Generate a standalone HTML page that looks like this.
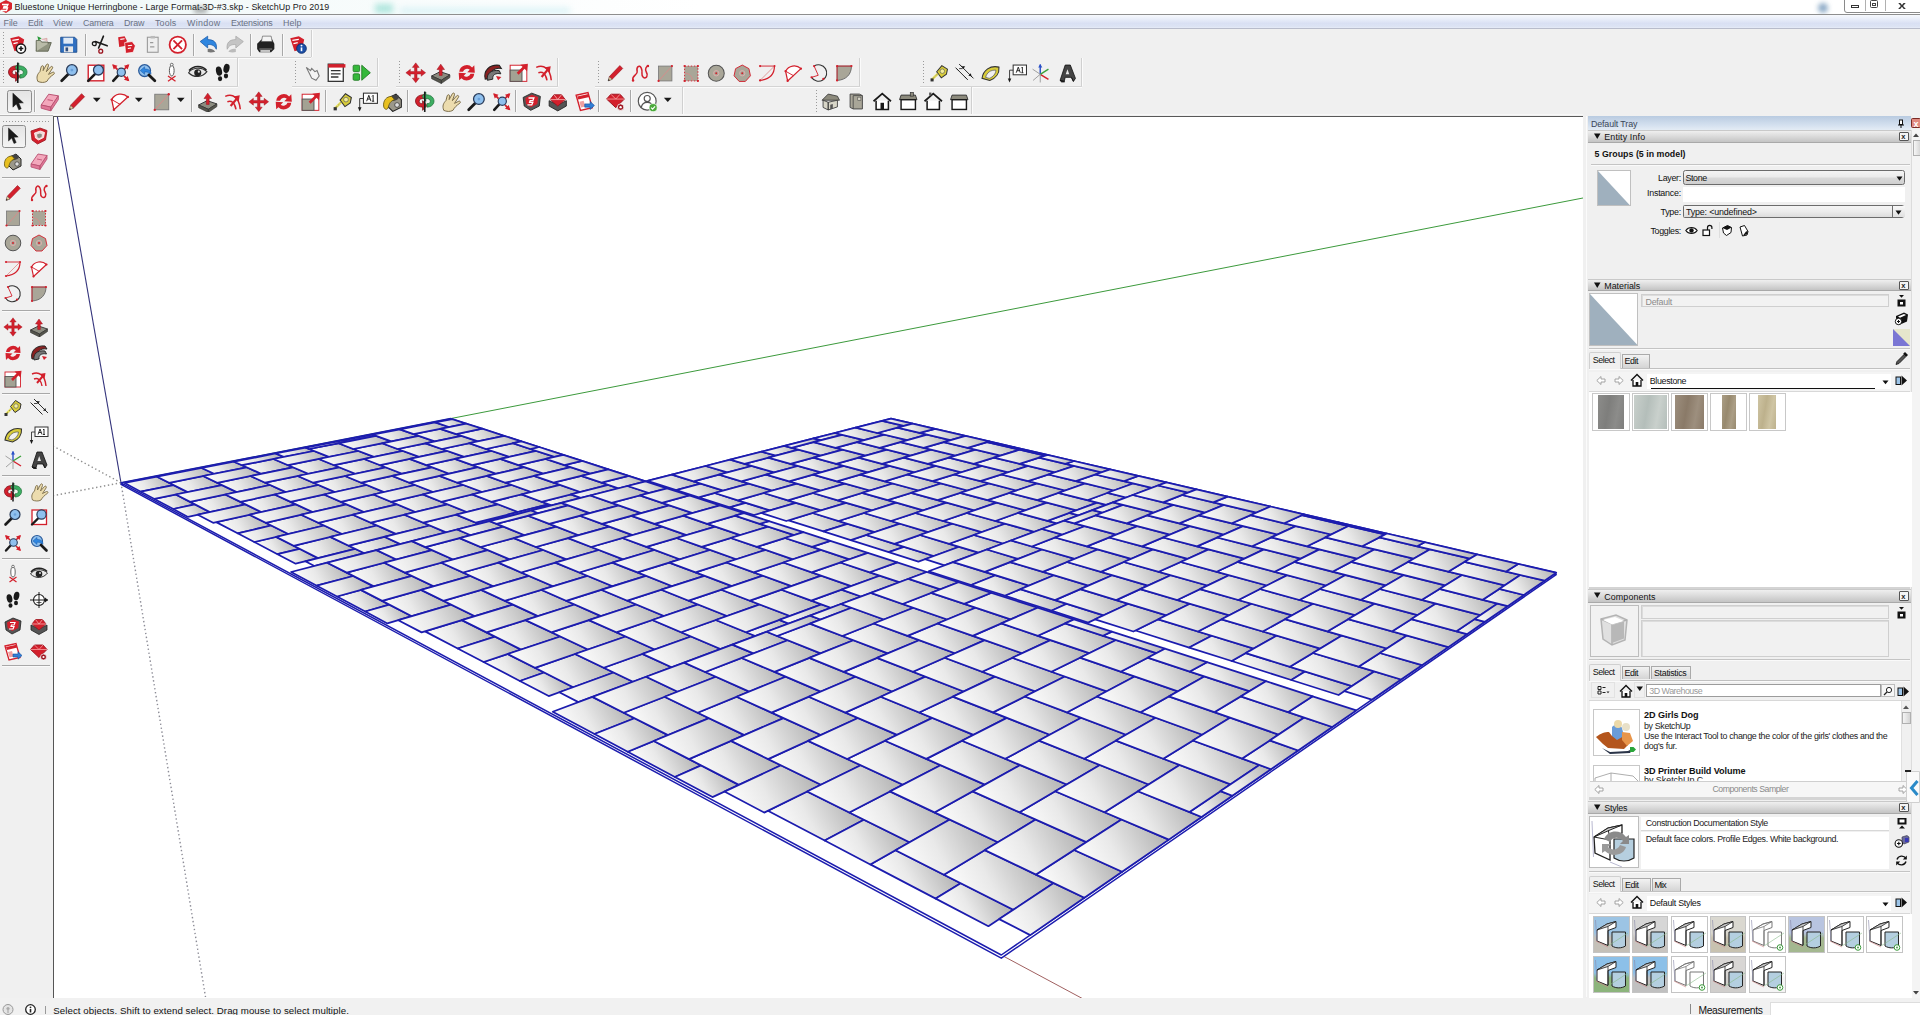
<!DOCTYPE html>
<html lang="en"><head><meta charset="utf-8"><title>Bluestone Unique Herringbone - SketchUp Pro 2019</title>
<style>html,body{margin:0;padding:0}
body{width:1920px;height:1015px;position:relative;overflow:hidden;background:#f0f0f0;font-family:"Liberation Sans",sans-serif}
#a{position:absolute;left:0;top:0;width:1920px;height:1015px;overflow:hidden}
#a div,#a span,#a svg.i{position:absolute}
#a span{white-space:pre;display:block}
</style></head>
<body><div id="a">
<div style="left:0px;top:0px;width:1920px;height:13.5px;background:linear-gradient(90deg,#eef8f8 0,#f6fbfb 300px,#fff 700px)"></div>
<svg class="i" style="left:0px;top:0px" width="12" height="13" viewBox="0 0 12 13"><path d="M0 3l6-3 6 3v6l-6 4-6-3z" fill="#d8242c"/><path d="M2 4.500h6l-1 2H4l-.5 1.500h4l-1 2.500H1" fill="none" stroke="#fff" stroke-width="1.300"/></svg>
<span style="left:14.60px;top:2.87px;font-size:8.9px;line-height:8.9px;color:#1a1a1a;letter-spacing:0.053px;">Bluestone Unique Herringbone - Large Format-3D-#3.skp - SketchUp Pro 2019</span>
<div style="left:375px;top:4px;width:18px;height:9px;background:#8fdcd0;filter:blur(3px);opacity:.7"></div>
<div style="left:400px;top:8px;width:170px;height:5px;background:#bfeaf0;filter:blur(3px);opacity:.6"></div>
<div style="left:194px;top:7px;width:13px;height:6px;background:#555;filter:blur(2.500px);opacity:.5"></div>
<div style="left:1818px;top:3px;width:10px;height:10px;background:#5f88b0;filter:blur(2.500px);opacity:.7;border-radius:5px"></div>
<div style="left:1844px;top:-4px;width:80px;height:15px;border:1px solid #8a8a8a;border-radius:3px;background:#fff"></div>
<div style="left:1865px;top:0px;width:1px;height:11px;background:#b0b0b0"></div>
<div style="left:1885px;top:0px;width:1px;height:11px;background:#b0b0b0"></div>
<div style="left:1851px;top:4.5px;width:8px;height:3px;border:1px solid #333;box-sizing:border-box"></div>
<div style="left:1870px;top:0px;width:8px;height:8px;border:1.300px solid #444;border-radius:1.500px;box-sizing:border-box"></div>
<div style="left:1872px;top:2.5px;width:3.5px;height:3.5px;border:1px solid #444;box-sizing:border-box"></div>
<span style="left:1899.00px;top:-0.51px;font-size:11px;line-height:11px;color:#333;font-weight:bold;transform:scaleX(1.300)">x</span>
<div style="left:0px;top:13.5px;width:1920px;height:1.2px;background:#8e8e8e"></div>
<div style="left:0px;top:14.7px;width:1920px;height:14px;background:linear-gradient(#f7f9fd 0,#e6ebf8 35%,#d9e0f3 60%,#dde4f4 85%,#f2f4fa 100%)"></div>
<div style="left:0px;top:28.3px;width:1920px;height:1px;background:#b8bccb"></div>
<span style="left:3.60px;top:18.57px;font-size:8.9px;line-height:8.9px;color:#6a7284;letter-spacing:-0.110px;">File</span>
<span style="left:28.00px;top:18.57px;font-size:8.9px;line-height:8.9px;color:#6a7284;letter-spacing:-0.084px;">Edit</span>
<span style="left:53.00px;top:18.57px;font-size:8.9px;line-height:8.9px;color:#6a7284;letter-spacing:0.093px;">View</span>
<span style="left:83.00px;top:18.57px;font-size:8.9px;line-height:8.9px;color:#6a7284;letter-spacing:-0.192px;">Camera</span>
<span style="left:124.00px;top:18.57px;font-size:8.9px;line-height:8.9px;color:#6a7284;letter-spacing:-0.067px;">Draw</span>
<span style="left:155.00px;top:18.57px;font-size:8.9px;line-height:8.9px;color:#6a7284;letter-spacing:0.145px;">Tools</span>
<span style="left:187.00px;top:18.57px;font-size:8.9px;line-height:8.9px;color:#6a7284;letter-spacing:0.308px;">Window</span>
<span style="left:231.00px;top:18.57px;font-size:8.9px;line-height:8.9px;color:#6a7284;letter-spacing:-0.203px;">Extensions</span>
<span style="left:283.00px;top:18.57px;font-size:8.9px;line-height:8.9px;color:#6a7284;letter-spacing:0.049px;">Help</span>
<div style="left:0px;top:29.3px;width:1920px;height:87px;background:#f0f0f0"></div>
<div style="left:3px;top:32px;width:1px;height:23px;background:repeating-linear-gradient(#9a9a9a 0 1px,transparent 1px 3px)"></div>
<svg class="i" style="left:7.2px;top:33.8px;" width="21.5" height="21.5" viewBox="0 0 20 20"><path d="M3 4l8-2 5 3-2 9-7 2z" fill="#d3202c"/><path d="M5 6l6-1M6 9l4-1" stroke="#fff" stroke-width="1.2"/><circle cx="13" cy="13.5" r="4.3" fill="#fff" stroke="#1a1a1a" stroke-width="1.4"/><path d="M10.8 13.5h4.4M13 11.3v4.4" stroke="#1a1a1a" stroke-width="1.5"/></svg>
<svg class="i" style="left:33.2px;top:33.8px;" width="21.5" height="21.5" viewBox="0 0 20 20"><path d="M3 16l2-8h12l-3 8z" fill="#8f937f" stroke="#5a5e4c" stroke-width=".8"/><path d="M3 16V6h4l1 1.5h6V9" fill="#b9bba8" stroke="#5a5e4c" stroke-width=".8"/><path d="M4 2l4 2-3 2z" fill="#2a9a3a"/><path d="M8 5l5-1v3" fill="#e9c9c9" stroke="#c88" stroke-width=".5"/></svg>
<svg class="i" style="left:58.2px;top:33.8px;" width="21.5" height="21.5" viewBox="0 0 20 20"><path d="M2.5 3h13l2 2v12h-15z" fill="#2f6fc0" stroke="#1c4a8a" stroke-width=".8"/><rect x="5" y="3.5" width="9" height="5.5" fill="#dfe9f5"/><rect x="5.5" y="11.5" width="8.5" height="5.5" fill="#e8e8e8"/><rect x="7" y="12.5" width="2.4" height="3.6" fill="#2f4f80"/></svg>
<svg class="i" style="left:90.2px;top:33.8px;" width="21.5" height="21.5" viewBox="0 0 20 20"><path d="M12.5 2L8 13M5 7l11 4" stroke="#1a1a1a" stroke-width="1.5" stroke-linecap="round"/><circle cx="4" cy="9" r="1.8" fill="none" stroke="#1a1a1a" stroke-width="1.2"/><circle cx="10" cy="16" r="1.8" fill="none" stroke="#9c1520" stroke-width="1.2"/></svg>
<svg class="i" style="left:116.2px;top:33.8px;" width="21.5" height="21.5" viewBox="0 0 20 20"><path d="M2 3l6-1 2 4-1 5-6 1z" fill="#d3202c"/><path d="M8 8l7-1 3 4-2 6-7 1z" fill="#d3202c" stroke="#fff" stroke-width=".6"/><path d="M4 5l4-.6M11 11l4-.6M11 13.5l3-.5" stroke="#fff" stroke-width="1"/></svg>
<svg class="i" style="left:141.8px;top:33.8px;" width="21.5" height="21.5" viewBox="0 0 20 20"><rect x="5" y="3" width="10" height="14" fill="#eee" stroke="#999" stroke-width="1"/><rect x="8" y="1.8" width="4" height="2.4" fill="#bbb"/><path d="M7.5 8h3M7.5 12h4" stroke="#999" stroke-width="1"/></svg>
<svg class="i" style="left:167.2px;top:33.8px;" width="21.5" height="21.5" viewBox="0 0 20 20"><circle cx="10" cy="10" r="7.6" fill="#fff" stroke="#d3202c" stroke-width="1.7"/><path d="M6 6l8 8M14 6l-8 8" stroke="#d3202c" stroke-width="1.7"/></svg>
<svg class="i" style="left:198.2px;top:33.8px;" width="21.5" height="21.5" viewBox="0 0 20 20"><path d="M2 7l7-5v3.2c6 0 9 3 8 9-1.5-3.5-4-4.6-8-4.4V13z" fill="#2f86e0" stroke="#1a5aa8" stroke-width=".7"/><path d="M9 14c2.5-.6 5-.2 7 2.5-2.5.8-5 .8-7 .3z" fill="#777"/></svg>
<svg class="i" style="left:224.2px;top:33.8px;" width="21.5" height="21.5" viewBox="0 0 20 20"><path d="M18 7l-7-5v3.2c-6 0-9 3-8 9 1.500-3.500 4-4.600 8-4.400V13z" fill="#c4c4c4" stroke="#a8a8a8" stroke-width=".7"/><path d="M11 14c-2.500-.6-5-.2-7 2.500 2.500.8 5 .8 7 .3z" fill="#bbb"/></svg>
<svg class="i" style="left:255.2px;top:33.8px;" width="21.5" height="21.5" viewBox="0 0 20 20"><path d="M2 9l4-4h10l2 4v5l-3 3H4l-2-3z" fill="#222"/><path d="M7 2h8l1 5H6z" fill="#f4f4f4" stroke="#555" stroke-width=".6"/><path d="M4 14h12" stroke="#888" stroke-width="1"/><rect x="5" y="15" width="9" height="1.6" fill="#ddd"/></svg>
<svg class="i" style="left:287.2px;top:33.8px;" width="21.5" height="21.5" viewBox="0 0 20 20"><path d="M3 4l8-2 5 3-2 9-7 2z" fill="#d3202c"/><path d="M5 6l6-1M6 9l4-1" stroke="#fff" stroke-width="1.2"/><circle cx="13.500" cy="13.500" r="4.500" fill="#1b4fa8" stroke="#0c2c6a" stroke-width=".8"/><path d="M13.500 12.500v3.500" stroke="#fff" stroke-width="1.500"/><circle cx="13.500" cy="10.800" r=".9" fill="#fff"/></svg>
<div style="left:84.5px;top:33.5px;width:1px;height:22px;background:#a8a8a8"></div>
<div style="left:85.5px;top:33.5px;width:1px;height:22px;background:#fafafa"></div>
<div style="left:193px;top:33.5px;width:1px;height:22px;background:#a8a8a8"></div>
<div style="left:194px;top:33.5px;width:1px;height:22px;background:#fafafa"></div>
<div style="left:250px;top:33.5px;width:1px;height:22px;background:#a8a8a8"></div>
<div style="left:251px;top:33.5px;width:1px;height:22px;background:#fafafa"></div>
<div style="left:281.5px;top:33.5px;width:1px;height:22px;background:#a8a8a8"></div>
<div style="left:282.5px;top:33.5px;width:1px;height:22px;background:#fafafa"></div>
<div style="left:310.5px;top:30px;width:1px;height:27px;background:#d0d0d0"></div>
<div style="left:311.5px;top:30px;width:1px;height:27px;background:#fbfbfb"></div>
<div style="left:0px;top:56.5px;width:311px;height:1px;background:#d4d4d4"></div>
<div style="left:0px;top:57.5px;width:311px;height:1px;background:#fbfbfb"></div>
<div style="left:3px;top:61px;width:1px;height:23px;background:repeating-linear-gradient(#9a9a9a 0 1px,transparent 1px 3px)"></div>
<svg class="i" style="left:7.2px;top:62.0px;" width="21.5" height="21.5" viewBox="0 0 20 20"><path d="M9 3.500C3.500 3.500.8 7 1.500 10.500c.7 3 3.500 4.500 6.500 4.500v3l4-4.500L8 9v2.800c-1.800 0-3.200-.6-3.200-2.300S6.500 7 9 7z" fill="#d3202c" stroke="#7a0f18" stroke-width=".7"/><path d="M11 3.500c5.500 0 8.200 3.500 7.500 7-.7 3-3.500 4.500-6.500 4.500v-3.200c1.800 0 3.200-.6 3.200-2.300S13.500 7 11 7v2.500L7.500 5 11 1z" fill="#3cae62" stroke="#1f7038" stroke-width=".7"/><path d="M10 .5v19" stroke="#1a1a1a" stroke-width="1.500"/></svg>
<svg class="i" style="left:34.2px;top:62.0px;" width="21.5" height="21.5" viewBox="0 0 20 20"><path d="M3.500 18c-1.500-4-.5-6.500 2-9l1.200-4.500c.5-1.600 2.300-1.200 2.200.3L8.500 8l3-5.500c.8-1.300 2.500-.5 2 1L11.500 9l4-4.500c1-1 2.400 0 1.700 1.300L13.500 11.500l4-2c1.200-.5 2 1 1 1.800-3 2-5 4-6.500 6.700-2.500 1.500-6 1.200-8.500 0z" fill="#ecdcae" stroke="#7a6c48" stroke-width=".9" stroke-linejoin="round"/></svg>
<svg class="i" style="left:59.2px;top:62.0px;" width="21.5" height="21.5" viewBox="0 0 20 20"><path d="M8.500 11.500L2.500 17.500" stroke="#1a1a1a" stroke-width="2.600" stroke-linecap="round"/><circle cx="12" cy="7.500" r="5" fill="#8fc0ee" stroke="#2a3c5a" stroke-width="1.200"/><circle cx="12" cy="7.500" r="1.300" fill="#6aa0da"/></svg>
<svg class="i" style="left:84.8px;top:62.0px;" width="21.5" height="21.5" viewBox="0 0 20 20"><rect x="3" y="3" width="14.500" height="14.500" fill="#fff" stroke="#d3202c" stroke-width="1.300"/><path d="M9 11.500L3 17.500" stroke="#1a1a1a" stroke-width="2.400" stroke-linecap="round"/><circle cx="12.500" cy="7.500" r="4.600" fill="#8fc0ee" stroke="#2a3c5a" stroke-width="1.200"/></svg>
<svg class="i" style="left:110.2px;top:62.0px;" width="21.5" height="21.5" viewBox="0 0 20 20"><path d="M2 2l5 1.500L3.500 7zM18 2l-1.500 5L13 3.500zM18 18l-5-1.500 3.500-3.500zM2 18" fill="#d3202c"/><path d="M3 3l4 4M17 3l-4 4M17 17l-4-4" stroke="#d3202c" stroke-width="1.600"/><path d="M8.500 11.500L3 17.500" stroke="#1a1a1a" stroke-width="2.400" stroke-linecap="round"/><circle cx="10.500" cy="9.500" r="3.800" fill="#8fc0ee" stroke="#2a3c5a" stroke-width="1.100"/></svg>
<svg class="i" style="left:135.8px;top:62.0px;" width="21.5" height="21.5" viewBox="0 0 20 20"><circle cx="8" cy="8" r="5.500" fill="#8fc0ee" stroke="#2a5a9a" stroke-width="1.200"/><path d="M4 8l4-3.500v2c4 0 6 1.500 6 5-1.500-1.800-3-2.400-6-2.300v2.300z" fill="#2f86e0" stroke="#1a5aa8" stroke-width=".5"/><path d="M12 12l5.500 5.500" stroke="#1a1a1a" stroke-width="2.600" stroke-linecap="round"/></svg>
<svg class="i" style="left:161.2px;top:62.0px;" width="21.5" height="21.5" viewBox="0 0 20 20"><ellipse cx="10" cy="8" rx="2.200" ry="5" fill="#fff" stroke="#555" stroke-width=".9"/><circle cx="10" cy="2.500" r="1.300" fill="#fff" stroke="#555" stroke-width=".8"/><path d="M6.500 13l7 5M13.500 13l-7 5" stroke="#d3202c" stroke-width="1.200"/></svg>
<svg class="i" style="left:187.2px;top:62.0px;" width="21.5" height="21.5" viewBox="0 0 20 20"><path d="M1.500 10c3-5 12-6 17-1-4 5.500-12 6-17 1z" fill="#e8e8e8" stroke="#333" stroke-width="1"/><path d="M2 8c4-5 12-5 16-.5" fill="none" stroke="#222" stroke-width="1.600"/><circle cx="10" cy="10" r="3.300" fill="#222"/><circle cx="11" cy="9" r="1" fill="#ddd"/></svg>
<svg class="i" style="left:212.2px;top:62.0px;" width="21.5" height="21.5" viewBox="0 0 20 20"><ellipse cx="6.500" cy="8.500" rx="2.800" ry="4.300" fill="#1a1a1a" transform="rotate(-12 6.500 8.500)"/><ellipse cx="7.500" cy="15.500" rx="2" ry="2.300" fill="#1a1a1a"/><ellipse cx="13.500" cy="6" rx="2.800" ry="4.300" fill="#1a1a1a" transform="rotate(12 13.500 6)"/><ellipse cx="13" cy="13" rx="2" ry="2.300" fill="#1a1a1a"/></svg>
<div style="left:237px;top:58px;width:1px;height:28px;background:#d0d0d0"></div>
<div style="left:238px;top:58px;width:1px;height:28px;background:#fbfbfb"></div>
<div style="left:0px;top:85.5px;width:238px;height:1px;background:#d4d4d4"></div>
<div style="left:0px;top:86.5px;width:238px;height:1px;background:#fbfbfb"></div>
<div style="left:295px;top:61px;width:1px;height:23px;background:repeating-linear-gradient(#9a9a9a 0 1px,transparent 1px 3px)"></div>
<svg class="i" style="left:302.2px;top:62.0px;" width="21.5" height="21.5" viewBox="0 0 20 20"><path d="M4 5l4 3 1-2 3 3 2-1 2 5-3 4-4-2-2-4z" fill="#f4f4f4" stroke="#777" stroke-width="1"/></svg>
<svg class="i" style="left:325.2px;top:62.0px;" width="21.5" height="21.5" viewBox="0 0 20 20"><rect x="3" y="2" width="14" height="16" fill="#fff" stroke="#333" stroke-width="1.200"/><rect x="3" y="2" width="16" height="3.200" fill="#d3202c"/><path d="M5.500 8h9M5.500 11h9M5.500 14h7" stroke="#333" stroke-width="1.300"/></svg>
<svg class="i" style="left:351.2px;top:62.0px;" width="21.5" height="21.5" viewBox="0 0 20 20"><rect x="2" y="3" width="6" height="6" rx="1" fill="#35b83a" stroke="#1f7a22" stroke-width=".8"/><rect x="2" y="11" width="6" height="6" rx="1" fill="#35b83a" stroke="#1f7a22" stroke-width=".8"/><path d="M10 3l8 7-8 7z" fill="#35b83a" stroke="#1f7a22" stroke-width=".8"/></svg>
<div style="left:377px;top:58px;width:1px;height:28px;background:#d0d0d0"></div>
<div style="left:378px;top:58px;width:1px;height:28px;background:#fbfbfb"></div>
<div style="left:292px;top:85.5px;width:86px;height:1px;background:#d4d4d4"></div>
<div style="left:292px;top:86.5px;width:86px;height:1px;background:#fbfbfb"></div>
<div style="left:399px;top:61px;width:1px;height:23px;background:repeating-linear-gradient(#9a9a9a 0 1px,transparent 1px 3px)"></div>
<svg class="i" style="left:404.9px;top:62.0px;" width="21.5" height="21.5" viewBox="0 0 20 20"><path d="M10 .8l3.200 4.200h-2v3.800h3.800v-2l4.200 3.200-4.200 3.200v-2h-3.800v3.800h2L10 19.200l-3.200-4.200h2v-3.800H5v2L.8 10 5 6.800v2h3.800V5h-2z" fill="#d3202c" stroke="#9c1520" stroke-width=".4"/></svg>
<svg class="i" style="left:430.2px;top:62.0px;" width="21.5" height="21.5" viewBox="0 0 20 20"><path d="M1.500 13l8-4 9 3-8 5z" fill="#8c8c80" stroke="#333" stroke-width=".9"/><path d="M1.500 13v2.500l9 4.500v-3zM10.500 17v3l8-5.500V12z" fill="#55554c" stroke="#333" stroke-width=".6"/><path d="M10 2l3.500 5h-2.200v5.500H8.700V7H6.500z" fill="#d3202c" stroke="#9c1520" stroke-width=".5"/></svg>
<svg class="i" style="left:456.2px;top:62.0px;" width="21.5" height="21.5" viewBox="0 0 20 20"><path d="M3 9a7 7 0 0 1 12-4l2-2 .5 7-7-.5 2.300-2.300A4 4 0 0 0 6.500 9z" fill="#d3202c"/><path d="M17 11a7 7 0 0 1-12 4l-2 2-.5-7 7 .5-2.300 2.300a4 4 0 0 0 6.300-1.800z" fill="#d3202c"/></svg>
<svg class="i" style="left:482.2px;top:62.0px;" width="21.5" height="21.5" viewBox="0 0 20 20"><path d="M3 16C1 8 7 2 16 3l2 3c-6-1-11 2-10 9z" fill="#8a2020" stroke="#222" stroke-width="1"/><path d="M5 17c-1-6 3-10 11-9l1.500 3c-5-1-8 1-7.500 5z" fill="#777" stroke="#222" stroke-width=".9"/><path d="M13 13l5 1-3 3z" fill="#d3202c"/></svg>
<svg class="i" style="left:507.8px;top:62.0px;" width="21.5" height="21.5" viewBox="0 0 20 20"><rect x="2" y="3" width="15.500" height="15" fill="#fff" stroke="#d3202c" stroke-width=".9"/><rect x="2" y="7.500" width="11" height="10.500" fill="#a3a293" stroke="#555" stroke-width=".9"/><path d="M9 11l6.500-6.500" stroke="#d3202c" stroke-width="2.600"/><path d="M11.500 2.500l7-.8-.8 7z" fill="#d3202c"/></svg>
<svg class="i" style="left:533.2px;top:62.0px;" width="21.5" height="21.5" viewBox="0 0 20 20"><path d="M3 5c7-3 13 1 14 12" fill="none" stroke="#d3202c" stroke-width="1.400"/><path d="M5 10c4-1.500 7 1 8 7" fill="none" stroke="#d3202c" stroke-width="1.400"/><path d="M8 14l5.500-6.500" stroke="#d3202c" stroke-width="2"/><path d="M10.500 5l6-1-1 6z" fill="#d3202c"/></svg>
<div style="left:557px;top:58px;width:1px;height:28px;background:#d0d0d0"></div>
<div style="left:558px;top:58px;width:1px;height:28px;background:#fbfbfb"></div>
<div style="left:396px;top:85.5px;width:162px;height:1px;background:#d4d4d4"></div>
<div style="left:396px;top:86.5px;width:162px;height:1px;background:#fbfbfb"></div>
<div style="left:598px;top:61px;width:1px;height:23px;background:repeating-linear-gradient(#9a9a9a 0 1px,transparent 1px 3px)"></div>
<svg class="i" style="left:604.5px;top:62.5px;" width="20.5" height="20.5" viewBox="0 0 20 20"><path d="M3.500 17l1-4L14.500 2.500l2.800 2.800L7 15.800z" fill="#d3202c" stroke="#9c1520" stroke-width=".6"/><path d="M3 17.500l1.300-4.200 2.700 2.700z" fill="#e8d0a0" stroke="#555" stroke-width=".5"/><path d="M3 17.500l.6-1.800 1.200 1.200z" fill="#222"/></svg>
<svg class="i" style="left:629.8px;top:62.5px;" width="20.5" height="20.5" viewBox="0 0 20 20"><path d="M3 17c-2-5 5-5 4-9S9 1 11 5s-1 7 2 9 5-2 3-5 0-6 2-6" fill="none" stroke="#d3202c" stroke-width="1.500"/><circle cx="3" cy="17" r="1.200" fill="#d3202c"/><circle cx="17.500" cy="3" r="1.200" fill="#d3202c"/></svg>
<svg class="i" style="left:654.8px;top:62.5px;" width="20.5" height="20.5" viewBox="0 0 20 20"><rect x="3.500" y="3" width="13" height="14.500" fill="#a9a698" stroke="#777" stroke-width=".8"/><path d="M3.500 17.500L16.500 3" stroke="#d88" stroke-width=".8"/><circle cx="3.500" cy="17.500" r="1.100" fill="#d3202c"/><circle cx="16.500" cy="3" r="1.100" fill="#d3202c"/></svg>
<svg class="i" style="left:680.8px;top:62.5px;" width="20.5" height="20.5" viewBox="0 0 20 20"><rect x="3.500" y="3" width="13" height="14.500" fill="#a9a698" stroke="#d3202c" stroke-width=".9" stroke-dasharray="1.500 1.500"/><path d="M4 10c4 0 7 3 7 7" fill="none" stroke="#d88" stroke-width=".8"/><circle cx="3.500" cy="17.500" r="1.100" fill="#d3202c"/><circle cx="16.500" cy="3" r="1.100" fill="#d3202c"/><circle cx="3.500" cy="3" r="1.100" fill="#d3202c"/><circle cx="16.500" cy="17.500" r="1.100" fill="#d3202c"/></svg>
<svg class="i" style="left:705.8px;top:62.5px;" width="20.5" height="20.5" viewBox="0 0 20 20"><circle cx="10" cy="10" r="7.800" fill="#a9a698" stroke="#555" stroke-width="1"/><circle cx="10" cy="10" r="2.600" fill="none" stroke="#e8b0b0" stroke-width=".8"/><circle cx="10" cy="10" r="1" fill="#d3202c"/></svg>
<svg class="i" style="left:731.5px;top:62.5px;" width="20.5" height="20.5" viewBox="0 0 20 20"><path d="M10 2l6.500 3.500 1.500 7-5 5.500H7L2 12.500l1.500-7z" fill="#a9a698" stroke="#d3202c" stroke-width=".9"/><circle cx="10" cy="10" r="2.600" fill="none" stroke="#e8b0b0" stroke-width=".8"/><circle cx="10" cy="10" r="1" fill="#d3202c"/></svg>
<svg class="i" style="left:756.8px;top:62.5px;" width="20.5" height="20.5" viewBox="0 0 20 20"><path d="M3 3h13" stroke="#d3202c" stroke-width=".9"/><path d="M17 3c0 8-5 13-14 14" fill="none" stroke="#d3202c" stroke-width="1.200"/><path d="M3 17L17 3" stroke="#d88" stroke-width=".8"/><circle cx="3" cy="17" r="1.100" fill="#d3202c"/><circle cx="17" cy="3" r="1.100" fill="#d3202c"/><circle cx="3" cy="3" r="1.100" fill="#d3202c"/></svg>
<svg class="i" style="left:782.8px;top:62.5px;" width="20.5" height="20.5" viewBox="0 0 20 20"><path d="M4.500 17.500L2.500 8A9.500 9.500 0 0 1 17.500 5.500z" fill="#fff" stroke="#d3202c" stroke-width="1.200" stroke-linejoin="round"/><path d="M2.500 8l8 4.500" fill="none" stroke="#d3202c" stroke-width=".9"/><circle cx="4.500" cy="17.500" r="1.100" fill="#d3202c"/><circle cx="17.500" cy="5.500" r="1.100" fill="#d3202c"/><circle cx="2.500" cy="8" r="1.100" fill="#d3202c"/></svg>
<svg class="i" style="left:808.8px;top:62.5px;" width="20.5" height="20.5" viewBox="0 0 20 20"><path d="M5 3a8 8 0 1 1-2.500 11" fill="none" stroke="#333" stroke-width="1.100"/><path d="M5 3l4 9-6.500 2" fill="none" stroke="#d3202c" stroke-width=".9"/><circle cx="5" cy="3" r="1.100" fill="#d3202c"/><circle cx="2.500" cy="14" r="1.100" fill="#d3202c"/><circle cx="14" cy="15.500" r="1.100" fill="#d3202c"/></svg>
<svg class="i" style="left:833.8px;top:62.5px;" width="20.5" height="20.5" viewBox="0 0 20 20"><path d="M3 3h14c0 8-5 13.500-14 14z" fill="#a9a698" stroke="#666" stroke-width=".9"/><path d="M3 3h14M3 3v14" stroke="#d3202c" stroke-width=".8"/><circle cx="3" cy="3" r="1.100" fill="#d3202c"/><circle cx="17" cy="3" r="1.100" fill="#d3202c"/><circle cx="3" cy="17" r="1.100" fill="#d3202c"/></svg>
<div style="left:859px;top:58px;width:1px;height:28px;background:#d0d0d0"></div>
<div style="left:860px;top:58px;width:1px;height:28px;background:#fbfbfb"></div>
<div style="left:595px;top:85.5px;width:265px;height:1px;background:#d4d4d4"></div>
<div style="left:595px;top:86.5px;width:265px;height:1px;background:#fbfbfb"></div>
<div style="left:922.6px;top:61px;width:1px;height:23px;background:repeating-linear-gradient(#9a9a9a 0 1px,transparent 1px 3px)"></div>
<svg class="i" style="left:928.8px;top:62.5px;" width="20.5" height="20.5" viewBox="0 0 20 20"><path d="M7.500 8.500l5-6 5.500 3.500-1 5-5 3.500z" fill="#d8cc3a" stroke="#333" stroke-width="1"/><circle cx="13" cy="8" r="2.200" fill="#f4ee9a" stroke="#555" stroke-width=".6"/><path d="M8.500 10.500L3 16" stroke="#e8e060" stroke-width="2.400"/><path d="M8.500 10.500L3 16" stroke="#333" stroke-width=".6" stroke-dasharray="1 1.500"/><rect x="1.500" y="15" width="3" height="3" fill="#333"/></svg>
<svg class="i" style="left:954.4px;top:62.5px;" width="20.5" height="20.5" viewBox="0 0 20 20"><path d="M3 6l9 9M6.500 2.500l11 11" stroke="#1a1a1a" stroke-width=".9"/><path d="M5 1l3 3M16 12l3 3M1.500 4.500l3 3M10.500 13.500l3 3" stroke="#1a1a1a" stroke-width=".9"/><path d="M8 3l3 .5-2.500 2.500zM17 13l-3-.5 2.500-2.500z" fill="#1a1a1a"/><path d="M5 5.500h3" stroke="#1a1a1a" stroke-width=".8"/></svg>
<svg class="i" style="left:979.8px;top:62.5px;" width="20.5" height="20.5" viewBox="0 0 20 20"><path d="M2 15C3 7 10 2 18.500 4c.5 6-3 11-9 13z" fill="#d8cc3a" stroke="#333" stroke-width="1.100"/><path d="M5.500 14c1-4.500 5-7.500 10-7-.2 3.500-2.500 6.500-6.500 8z" fill="#f0f0f0" stroke="#555" stroke-width=".7"/></svg>
<svg class="i" style="left:1006.8px;top:62.5px;" width="20.5" height="20.5" viewBox="0 0 20 20"><rect x="6" y="2" width="13" height="9.500" fill="#fff" stroke="#333" stroke-width="1"/><path d="M6 7H2.500v9" fill="none" stroke="#333" stroke-width=".9"/><path d="M.8 15h3.400L2.500 19z" fill="#1a1a1a"/><path d="M9 9.500l2-5.500 2 5.500M9.800 7.500h2.400M15 9.500V4l-1 1M14 9.500h2" fill="none" stroke="#1a1a1a" stroke-width=".9"/></svg>
<svg class="i" style="left:1030.2px;top:62.5px;" width="20.5" height="20.5" viewBox="0 0 20 20"><path d="M10 11V1.500" stroke="#2a50c8" stroke-width="1.400"/><path d="M10 1l2 3.500h-4z" fill="#2a50c8"/><path d="M10 11l8 5" stroke="#d3202c" stroke-width="1.400"/><path d="M10 11l8-5" stroke="#3aa03a" stroke-width="1.400"/><path d="M10 11L2.500 6M10 11l-7 6M10 11v8" stroke="#999" stroke-width=".9"/></svg>
<svg class="i" style="left:1057.2px;top:62.5px;" width="20.5" height="20.5" viewBox="0 0 20 20"><path d="M3 17L8 2h5l5 13-2 3-2-4H8l-1 4z" fill="#444" stroke="#111" stroke-width=".8"/><path d="M8.500 11l1.700-5 1.800 5z" fill="#e8e8e8"/><path d="M3 17l1.500 1.500h3L7 18zM14 14l2 4" stroke="#111" stroke-width=".8" fill="#222"/></svg>
<div style="left:1081px;top:58px;width:1px;height:28px;background:#d0d0d0"></div>
<div style="left:1082px;top:58px;width:1px;height:28px;background:#fbfbfb"></div>
<div style="left:920px;top:85.5px;width:162px;height:1px;background:#d4d4d4"></div>
<div style="left:920px;top:86.5px;width:162px;height:1px;background:#fbfbfb"></div>
<div style="left:6.5px;top:89.5px;width:25.5px;height:23px;border:1px solid #8c8c8c;border-radius:2.500px;background:linear-gradient(#e4e4e4,#f4f4f4);box-sizing:border-box"></div>
<svg class="i" style="left:7.2px;top:90.5px;" width="21.5" height="21.5" viewBox="0 0 20 20"><path d="M5.500 2v13l3.200-3 2.300 5.500 2.200-1-2.300-5.300 4.300-.2z" fill="#1a1a1a" stroke="#1a1a1a" stroke-width=".5" stroke-linejoin="round"/></svg>
<svg class="i" style="left:39.2px;top:90.5px;" width="21.5" height="21.5" viewBox="0 0 20 20"><path d="M2 13L9 3l9 1.500L11 15z" fill="#f3a8bc" stroke="#b85070" stroke-width=".9"/><path d="M2 13v3l9 2.500V15zM11 15v3.500l7-10.500V4.500z" fill="#e07898" stroke="#b85070" stroke-width=".8"/><path d="M8 8l5 1" stroke="#c86080" stroke-width="1"/></svg>
<svg class="i" style="left:66.2px;top:90.5px;" width="21.5" height="21.5" viewBox="0 0 20 20"><path d="M3.500 17l1-4L14.500 2.500l2.800 2.800L7 15.800z" fill="#d3202c" stroke="#9c1520" stroke-width=".6"/><path d="M3 17.500l1.300-4.200 2.700 2.700z" fill="#e8d0a0" stroke="#555" stroke-width=".5"/><path d="M3 17.500l.6-1.800 1.200 1.200z" fill="#222"/></svg>
<svg class="i" style="left:88.8px;top:91.5px;" width="15.5" height="15.5" viewBox="0 0 20 20"><path d="M5 7.500h10l-5 5.500z" fill="#1a1a1a"/></svg>
<svg class="i" style="left:109.2px;top:90.5px;" width="21.5" height="21.5" viewBox="0 0 20 20"><path d="M4.500 17.500L2.500 8A9.500 9.500 0 0 1 17.500 5.500z" fill="#fff" stroke="#d3202c" stroke-width="1.200" stroke-linejoin="round"/><path d="M2.500 8l8 4.500" fill="none" stroke="#d3202c" stroke-width=".9"/><circle cx="4.500" cy="17.500" r="1.100" fill="#d3202c"/><circle cx="17.500" cy="5.500" r="1.100" fill="#d3202c"/><circle cx="2.500" cy="8" r="1.100" fill="#d3202c"/></svg>
<svg class="i" style="left:131.2px;top:91.5px;" width="15.5" height="15.5" viewBox="0 0 20 20"><path d="M5 7.500h10l-5 5.500z" fill="#1a1a1a"/></svg>
<svg class="i" style="left:150.8px;top:90.5px;" width="21.5" height="21.5" viewBox="0 0 20 20"><rect x="3.500" y="3" width="13" height="14.500" fill="#a9a698" stroke="#777" stroke-width=".8"/><path d="M3.500 17.500L16.500 3" stroke="#d88" stroke-width=".8"/><circle cx="3.500" cy="17.500" r="1.100" fill="#d3202c"/><circle cx="16.500" cy="3" r="1.100" fill="#d3202c"/></svg>
<svg class="i" style="left:173.2px;top:91.5px;" width="15.5" height="15.5" viewBox="0 0 20 20"><path d="M5 7.500h10l-5 5.500z" fill="#1a1a1a"/></svg>
<svg class="i" style="left:197.2px;top:90.5px;" width="21.5" height="21.5" viewBox="0 0 20 20"><path d="M1.500 13l8-4 9 3-8 5z" fill="#8c8c80" stroke="#333" stroke-width=".9"/><path d="M1.500 13v2.500l9 4.500v-3zM10.500 17v3l8-5.500V12z" fill="#55554c" stroke="#333" stroke-width=".6"/><path d="M10 2l3.500 5h-2.200v5.500H8.700V7H6.500z" fill="#d3202c" stroke="#9c1520" stroke-width=".5"/></svg>
<svg class="i" style="left:222.2px;top:90.5px;" width="21.5" height="21.5" viewBox="0 0 20 20"><path d="M3 5c7-3 13 1 14 12" fill="none" stroke="#d3202c" stroke-width="1.400"/><path d="M5 10c4-1.500 7 1 8 7" fill="none" stroke="#d3202c" stroke-width="1.400"/><path d="M8 14l5.500-6.500" stroke="#d3202c" stroke-width="2"/><path d="M10.500 5l6-1-1 6z" fill="#d3202c"/></svg>
<svg class="i" style="left:248.2px;top:90.5px;" width="21.5" height="21.5" viewBox="0 0 20 20"><path d="M10 .8l3.200 4.200h-2v3.800h3.800v-2l4.200 3.200-4.200 3.200v-2h-3.800v3.800h2L10 19.200l-3.200-4.200h2v-3.800H5v2L.8 10 5 6.800v2h3.800V5h-2z" fill="#d3202c" stroke="#9c1520" stroke-width=".4"/></svg>
<svg class="i" style="left:273.2px;top:90.5px;" width="21.5" height="21.5" viewBox="0 0 20 20"><path d="M3 9a7 7 0 0 1 12-4l2-2 .5 7-7-.5 2.300-2.300A4 4 0 0 0 6.500 9z" fill="#d3202c"/><path d="M17 11a7 7 0 0 1-12 4l-2 2-.5-7 7 .5-2.300 2.300a4 4 0 0 0 6.300-1.800z" fill="#d3202c"/></svg>
<svg class="i" style="left:299.9px;top:90.5px;" width="21.5" height="21.5" viewBox="0 0 20 20"><rect x="2" y="3" width="15.500" height="15" fill="#fff" stroke="#d3202c" stroke-width=".9"/><rect x="2" y="7.500" width="11" height="10.500" fill="#a3a293" stroke="#555" stroke-width=".9"/><path d="M9 11l6.500-6.500" stroke="#d3202c" stroke-width="2.600"/><path d="M11.500 2.500l7-.8-.8 7z" fill="#d3202c"/></svg>
<svg class="i" style="left:331.9px;top:90.5px;" width="21.5" height="21.5" viewBox="0 0 20 20"><path d="M7.500 8.500l5-6 5.500 3.500-1 5-5 3.500z" fill="#d8cc3a" stroke="#333" stroke-width="1"/><circle cx="13" cy="8" r="2.200" fill="#f4ee9a" stroke="#555" stroke-width=".6"/><path d="M8.500 10.500L3 16" stroke="#e8e060" stroke-width="2.400"/><path d="M8.500 10.500L3 16" stroke="#333" stroke-width=".6" stroke-dasharray="1 1.500"/><rect x="1.500" y="15" width="3" height="3" fill="#333"/></svg>
<svg class="i" style="left:357.2px;top:90.5px;" width="21.5" height="21.5" viewBox="0 0 20 20"><rect x="6" y="2" width="13" height="9.500" fill="#fff" stroke="#333" stroke-width="1"/><path d="M6 7H2.500v9" fill="none" stroke="#333" stroke-width=".9"/><path d="M.8 15h3.400L2.500 19z" fill="#1a1a1a"/><path d="M9 9.500l2-5.500 2 5.500M9.800 7.500h2.400M15 9.500V4l-1 1M14 9.500h2" fill="none" stroke="#1a1a1a" stroke-width=".9"/></svg>
<svg class="i" style="left:381.9px;top:90.5px;" width="21.5" height="21.5" viewBox="0 0 20 20"><path d="M5 7l8-4 5 5v7l-8 4-5-5z" fill="#9a978a" stroke="#222" stroke-width="1"/><ellipse cx="11" cy="6.500" rx="5" ry="2.600" fill="#444" transform="rotate(-15 11 6.500)"/><path d="M9 5C4 5 1 9 1.500 14c.3 3 3 4 4 2 1-2.500 1-6 6-8z" fill="#e8c020" stroke="#6a5a10" stroke-width=".8"/><circle cx="14" cy="13" r="2.200" fill="#ddd" stroke="#333" stroke-width=".7"/></svg>
<svg class="i" style="left:413.9px;top:90.5px;" width="21.5" height="21.5" viewBox="0 0 20 20"><path d="M9 3.500C3.500 3.500.8 7 1.500 10.500c.7 3 3.500 4.500 6.500 4.500v3l4-4.500L8 9v2.800c-1.800 0-3.200-.6-3.200-2.300S6.500 7 9 7z" fill="#d3202c" stroke="#7a0f18" stroke-width=".7"/><path d="M11 3.500c5.500 0 8.200 3.500 7.500 7-.7 3-3.500 4.500-6.500 4.500v-3.200c1.800 0 3.200-.6 3.200-2.300S13.500 7 11 7v2.500L7.500 5 11 1z" fill="#3cae62" stroke="#1f7038" stroke-width=".7"/><path d="M10 .5v19" stroke="#1a1a1a" stroke-width="1.500"/></svg>
<svg class="i" style="left:440.2px;top:90.5px;" width="21.5" height="21.5" viewBox="0 0 20 20"><path d="M3.500 18c-1.500-4-.5-6.500 2-9l1.200-4.500c.5-1.600 2.300-1.200 2.200.3L8.500 8l3-5.500c.8-1.300 2.500-.5 2 1L11.500 9l4-4.500c1-1 2.400 0 1.700 1.300L13.500 11.500l4-2c1.200-.5 2 1 1 1.800-3 2-5 4-6.500 6.700-2.500 1.500-6 1.200-8.500 0z" fill="#ecdcae" stroke="#7a6c48" stroke-width=".9" stroke-linejoin="round"/></svg>
<svg class="i" style="left:465.8px;top:90.5px;" width="21.5" height="21.5" viewBox="0 0 20 20"><path d="M8.500 11.500L2.500 17.500" stroke="#1a1a1a" stroke-width="2.600" stroke-linecap="round"/><circle cx="12" cy="7.500" r="5" fill="#8fc0ee" stroke="#2a3c5a" stroke-width="1.200"/><circle cx="12" cy="7.500" r="1.300" fill="#6aa0da"/></svg>
<svg class="i" style="left:491.2px;top:90.5px;" width="21.5" height="21.5" viewBox="0 0 20 20"><path d="M2 2l5 1.500L3.500 7zM18 2l-1.500 5L13 3.500zM18 18l-5-1.500 3.500-3.500zM2 18" fill="#d3202c"/><path d="M3 3l4 4M17 3l-4 4M17 17l-4-4" stroke="#d3202c" stroke-width="1.600"/><path d="M8.500 11.500L3 17.500" stroke="#1a1a1a" stroke-width="2.400" stroke-linecap="round"/><circle cx="10.500" cy="9.500" r="3.800" fill="#8fc0ee" stroke="#2a3c5a" stroke-width="1.100"/></svg>
<svg class="i" style="left:521.2px;top:90.5px;" width="21.5" height="21.5" viewBox="0 0 20 20"><path d="M2 6l8-4 8 3-1 9-8 4-6-4z" fill="#555" stroke="#222" stroke-width=".8"/><path d="M4 6.500l6-3 6 2-.8 6.500-6 3-4.500-3z" fill="#d3202c"/><path d="M7 6.500h5l-1 2.500H8.500l-.5 1.500h3l-1 2.500H6" fill="none" stroke="#fff" stroke-width="1.200"/></svg>
<svg class="i" style="left:547.2px;top:90.5px;" width="21.5" height="21.5" viewBox="0 0 20 20"><path d="M2 9l8 4 8-4v5l-8 4.500L2 14z" fill="#555" stroke="#222" stroke-width=".8"/><path d="M3 8l3.500-4.500h7L17 8l-7 6z" fill="#d3202c" stroke="#9c1520" stroke-width=".8"/><path d="M3 8h14M6.500 3.500L10 8l3.500-4.500" fill="none" stroke="#f5b0b0" stroke-width=".8"/></svg>
<svg class="i" style="left:574.2px;top:90.5px;" width="21.5" height="21.5" viewBox="0 0 20 20"><path d="M2 4l11-2.500 4 14L6 18z" fill="#fff" stroke="#d3202c" stroke-width="1.300"/><path d="M3 5l10.500-2.300.8 2.800L4 8z" fill="#d3202c"/><path d="M5 10l4-.9 1.500 5.400-4 .9z" fill="#f0a0a0"/><path d="M10 12h5v-2.200l4 3.700-4 3.700V15h-5z" fill="#2f7fd8" stroke="#1a4f98" stroke-width=".6"/></svg>
<svg class="i" style="left:605.2px;top:90.5px;" width="21.5" height="21.5" viewBox="0 0 20 20"><path d="M1.500 7.500L5.500 3h8.500l4 4.500-8 8z" fill="#d3202c" stroke="#9c1520" stroke-width=".9"/><path d="M1.500 7.500h16.500M5.500 3L10 7.500 14 3" fill="none" stroke="#f5a0a0" stroke-width=".8"/><circle cx="14.500" cy="15" r="3" fill="#9c1520" stroke="#fff" stroke-width=".7"/><circle cx="14.500" cy="15" r="1.100" fill="#fff"/></svg>
<svg class="i" style="left:636.8px;top:90.5px;" width="21.5" height="21.5" viewBox="0 0 20 20"><circle cx="9.500" cy="9.500" r="8.300" fill="#fff" stroke="#555" stroke-width="1.100"/><circle cx="9.500" cy="7" r="2.800" fill="none" stroke="#555" stroke-width="1.100"/><path d="M4 15.500c.5-4 2.500-5 5.500-5s5 1 5.500 5" fill="none" stroke="#555" stroke-width="1.100"/><circle cx="15" cy="15.500" r="3.800" fill="#4caa3c" stroke="#fff" stroke-width=".7"/><path d="M13.200 15.500l1.300 1.400 2.300-2.600" fill="none" stroke="#fff" stroke-width="1.100"/></svg>
<svg class="i" style="left:660.2px;top:91.5px;" width="15.5" height="15.5" viewBox="0 0 20 20"><path d="M5 7.500h10l-5 5.500z" fill="#1a1a1a"/></svg>
<div style="left:33.7px;top:90px;width:1px;height:22px;background:#a8a8a8"></div>
<div style="left:34.7px;top:90px;width:1px;height:22px;background:#fafafa"></div>
<div style="left:191.4px;top:90px;width:1px;height:22px;background:#a8a8a8"></div>
<div style="left:192.4px;top:90px;width:1px;height:22px;background:#fafafa"></div>
<div style="left:324.5px;top:90px;width:1px;height:22px;background:#a8a8a8"></div>
<div style="left:325.5px;top:90px;width:1px;height:22px;background:#fafafa"></div>
<div style="left:406.5px;top:90px;width:1px;height:22px;background:#a8a8a8"></div>
<div style="left:407.5px;top:90px;width:1px;height:22px;background:#fafafa"></div>
<div style="left:515px;top:90px;width:1px;height:22px;background:#a8a8a8"></div>
<div style="left:516px;top:90px;width:1px;height:22px;background:#fafafa"></div>
<div style="left:598px;top:90px;width:1px;height:22px;background:#a8a8a8"></div>
<div style="left:599px;top:90px;width:1px;height:22px;background:#fafafa"></div>
<div style="left:630px;top:90px;width:1px;height:22px;background:#a8a8a8"></div>
<div style="left:631px;top:90px;width:1px;height:22px;background:#fafafa"></div>
<div style="left:682px;top:87px;width:1px;height:28px;background:#d0d0d0"></div>
<div style="left:683px;top:87px;width:1px;height:28px;background:#fbfbfb"></div>
<div style="left:815.6px;top:90px;width:1px;height:23px;background:repeating-linear-gradient(#9a9a9a 0 1px,transparent 1px 3px)"></div>
<svg class="i" style="left:820.2px;top:91.0px;" width="20.5" height="20.5" viewBox="0 0 20 20"><path d="M2 9l6-6 9 2 2 4z" fill="#8c8a7c" stroke="#333" stroke-width=".8"/><path d="M3 9v7l5 2.500V11zM8 11v7.500l9-3V9z" fill="#d8d6c8" stroke="#333" stroke-width=".8"/><path d="M10 18v-4.500l2.500-.8V17" fill="#555"/></svg>
<svg class="i" style="left:845.8px;top:91.0px;" width="20.5" height="20.5" viewBox="0 0 20 20"><path d="M4 3h9l3 1.500v13H7l-3-1.500z" fill="#a9a698" stroke="#444" stroke-width=".9"/><path d="M7 4.500V17.500M7 4.500h9" stroke="#444" stroke-width=".8" fill="none"/><rect x="11.500" y="6" width="3" height="3" fill="#d8d6c8" stroke="#444" stroke-width=".5"/></svg>
<svg class="i" style="left:871.8px;top:91.0px;" width="20.5" height="20.5" viewBox="0 0 20 20"><path d="M1.500 10L10 2.500 18.500 10" fill="none" stroke="#1a1a1a" stroke-width="1.700"/><path d="M4 9.500V18h12V9.500" fill="#fff" stroke="#1a1a1a" stroke-width="1.500"/><rect x="8.300" y="11.500" width="3.400" height="6.500" fill="#1a1a1a"/></svg>
<svg class="i" style="left:897.5px;top:91.0px;" width="20.5" height="20.5" viewBox="0 0 20 20"><path d="M1.500 8.500h17L17 4H3z" fill="#8c8a7c" stroke="#333" stroke-width=".9"/><rect x="12" y="1.500" width="3" height="3.500" fill="#8c8a7c" stroke="#333" stroke-width=".7"/><rect x="3" y="8.500" width="14" height="9.500" fill="#fff" stroke="#1a1a1a" stroke-width="1.400"/></svg>
<svg class="i" style="left:923.2px;top:91.0px;" width="20.5" height="20.5" viewBox="0 0 20 20"><path d="M1.500 10L10 2.500 18.500 10" fill="none" stroke="#1a1a1a" stroke-width="1.700"/><path d="M4 9.500V18h12V9.500" fill="#fff" stroke="#1a1a1a" stroke-width="1.500"/><rect x="6" y="1.500" width="2.200" height="3" fill="#555"/></svg>
<svg class="i" style="left:948.5px;top:91.0px;" width="20.5" height="20.5" viewBox="0 0 20 20"><path d="M1.500 8.500h17L17 4H3z" fill="#8c8a7c" stroke="#333" stroke-width=".9"/><rect x="3" y="8.500" width="14" height="9.500" fill="#fff" stroke="#1a1a1a" stroke-width="1.400"/></svg>
<div style="left:971px;top:87px;width:1px;height:28px;background:#d0d0d0"></div>
<div style="left:972px;top:87px;width:1px;height:28px;background:#fbfbfb"></div>
<div style="left:52.6px;top:115.7px;width:1530.7px;height:1.4px;background:#585858"></div>
<div style="left:0px;top:115.2px;width:52.6px;height:1px;background:#b4b4b4"></div>
<div style="left:0px;top:113.8px;width:1583.3px;height:1.4px;background:#f8f8f8"></div>
<div style="left:0px;top:116.7px;width:54px;height:881px;background:#f0f0f0"></div>
<div style="left:52.6px;top:116px;width:1.5px;height:882.5px;background:#555"></div>
<div style="left:3px;top:120.5px;width:47px;height:1px;background:repeating-linear-gradient(90deg,#9a9a9a 0 1px,transparent 1px 3px)"></div>
<div style="left:1.5px;top:124.5px;width:24px;height:23px;border:1px solid #8c8c8c;border-radius:2.500px;background:linear-gradient(#e4e4e4,#f4f4f4);box-sizing:border-box"></div>
<svg class="i" style="left:2.9px;top:126.0px;" width="20" height="20" viewBox="0 0 20 20"><path d="M5.500 2v13l3.200-3 2.300 5.500 2.200-1-2.300-5.300 4.300-.2z" fill="#1a1a1a" stroke="#1a1a1a" stroke-width=".5" stroke-linejoin="round"/></svg>
<svg class="i" style="left:28.6px;top:126.0px;" width="20" height="20" viewBox="0 0 20 20"><path d="M2 5l9-3 7 2.500-1.500 9.500-8 4-5.500-4z" fill="#d3202c" stroke="#9c1520" stroke-width=".8"/><path d="M5.500 7l6-2 4 1.500-1 5-5 2.500-3-2z" fill="#f0d8d8" stroke="#fff" stroke-width=".8"/><path d="M8 8.500l3-1 2 1-.5 2.500-2.500 1.200-1.500-1z" fill="#8a8a80"/></svg>
<svg class="i" style="left:2.9px;top:151.4px;" width="20" height="20" viewBox="0 0 20 20"><path d="M5 7l8-4 5 5v7l-8 4-5-5z" fill="#9a978a" stroke="#222" stroke-width="1"/><ellipse cx="11" cy="6.500" rx="5" ry="2.600" fill="#444" transform="rotate(-15 11 6.500)"/><path d="M9 5C4 5 1 9 1.500 14c.3 3 3 4 4 2 1-2.500 1-6 6-8z" fill="#e8c020" stroke="#6a5a10" stroke-width=".8"/><circle cx="14" cy="13" r="2.200" fill="#ddd" stroke="#333" stroke-width=".7"/></svg>
<svg class="i" style="left:28.6px;top:151.4px;" width="20" height="20" viewBox="0 0 20 20"><path d="M2 13L9 3l9 1.500L11 15z" fill="#f3a8bc" stroke="#b85070" stroke-width=".9"/><path d="M2 13v3l9 2.500V15zM11 15v3.500l7-10.500V4.500z" fill="#e07898" stroke="#b85070" stroke-width=".8"/><path d="M8 8l5 1" stroke="#c86080" stroke-width="1"/></svg>
<svg class="i" style="left:2.9px;top:183.0px;" width="20" height="20" viewBox="0 0 20 20"><path d="M3.500 17l1-4L14.500 2.500l2.800 2.800L7 15.800z" fill="#d3202c" stroke="#9c1520" stroke-width=".6"/><path d="M3 17.500l1.300-4.200 2.700 2.700z" fill="#e8d0a0" stroke="#555" stroke-width=".5"/><path d="M3 17.500l.6-1.800 1.200 1.200z" fill="#222"/></svg>
<svg class="i" style="left:28.6px;top:183.0px;" width="20" height="20" viewBox="0 0 20 20"><path d="M3 17c-2-5 5-5 4-9S9 1 11 5s-1 7 2 9 5-2 3-5 0-6 2-6" fill="none" stroke="#d3202c" stroke-width="1.500"/><circle cx="3" cy="17" r="1.200" fill="#d3202c"/><circle cx="17.500" cy="3" r="1.200" fill="#d3202c"/></svg>
<svg class="i" style="left:2.9px;top:208.0px;" width="20" height="20" viewBox="0 0 20 20"><rect x="3.500" y="3" width="13" height="14.500" fill="#a9a698" stroke="#777" stroke-width=".8"/><path d="M3.500 17.500L16.500 3" stroke="#d88" stroke-width=".8"/><circle cx="3.500" cy="17.500" r="1.100" fill="#d3202c"/><circle cx="16.500" cy="3" r="1.100" fill="#d3202c"/></svg>
<svg class="i" style="left:28.6px;top:208.0px;" width="20" height="20" viewBox="0 0 20 20"><rect x="3.500" y="3" width="13" height="14.500" fill="#a9a698" stroke="#d3202c" stroke-width=".9" stroke-dasharray="1.500 1.500"/><path d="M4 10c4 0 7 3 7 7" fill="none" stroke="#d88" stroke-width=".8"/><circle cx="3.500" cy="17.500" r="1.100" fill="#d3202c"/><circle cx="16.500" cy="3" r="1.100" fill="#d3202c"/><circle cx="3.500" cy="3" r="1.100" fill="#d3202c"/><circle cx="16.500" cy="17.500" r="1.100" fill="#d3202c"/></svg>
<svg class="i" style="left:2.9px;top:233.4px;" width="20" height="20" viewBox="0 0 20 20"><circle cx="10" cy="10" r="7.800" fill="#a9a698" stroke="#555" stroke-width="1"/><circle cx="10" cy="10" r="2.600" fill="none" stroke="#e8b0b0" stroke-width=".8"/><circle cx="10" cy="10" r="1" fill="#d3202c"/></svg>
<svg class="i" style="left:28.6px;top:233.4px;" width="20" height="20" viewBox="0 0 20 20"><path d="M10 2l6.500 3.500 1.500 7-5 5.500H7L2 12.500l1.500-7z" fill="#a9a698" stroke="#d3202c" stroke-width=".9"/><circle cx="10" cy="10" r="2.600" fill="none" stroke="#e8b0b0" stroke-width=".8"/><circle cx="10" cy="10" r="1" fill="#d3202c"/></svg>
<svg class="i" style="left:2.9px;top:258.6px;" width="20" height="20" viewBox="0 0 20 20"><path d="M3 3h13" stroke="#d3202c" stroke-width=".9"/><path d="M17 3c0 8-5 13-14 14" fill="none" stroke="#d3202c" stroke-width="1.200"/><path d="M3 17L17 3" stroke="#d88" stroke-width=".8"/><circle cx="3" cy="17" r="1.100" fill="#d3202c"/><circle cx="17" cy="3" r="1.100" fill="#d3202c"/><circle cx="3" cy="3" r="1.100" fill="#d3202c"/></svg>
<svg class="i" style="left:28.6px;top:258.6px;" width="20" height="20" viewBox="0 0 20 20"><path d="M4.500 17.500L2.500 8A9.500 9.500 0 0 1 17.500 5.500z" fill="#fff" stroke="#d3202c" stroke-width="1.200" stroke-linejoin="round"/><path d="M2.500 8l8 4.500" fill="none" stroke="#d3202c" stroke-width=".9"/><circle cx="4.500" cy="17.500" r="1.100" fill="#d3202c"/><circle cx="17.500" cy="5.500" r="1.100" fill="#d3202c"/><circle cx="2.500" cy="8" r="1.100" fill="#d3202c"/></svg>
<svg class="i" style="left:2.9px;top:284.0px;" width="20" height="20" viewBox="0 0 20 20"><path d="M5 3a8 8 0 1 1-2.500 11" fill="none" stroke="#333" stroke-width="1.100"/><path d="M5 3l4 9-6.500 2" fill="none" stroke="#d3202c" stroke-width=".9"/><circle cx="5" cy="3" r="1.100" fill="#d3202c"/><circle cx="2.500" cy="14" r="1.100" fill="#d3202c"/><circle cx="14" cy="15.500" r="1.100" fill="#d3202c"/></svg>
<svg class="i" style="left:28.6px;top:284.0px;" width="20" height="20" viewBox="0 0 20 20"><path d="M3 3h14c0 8-5 13.500-14 14z" fill="#a9a698" stroke="#666" stroke-width=".9"/><path d="M3 3h14M3 3v14" stroke="#d3202c" stroke-width=".8"/><circle cx="3" cy="3" r="1.100" fill="#d3202c"/><circle cx="17" cy="3" r="1.100" fill="#d3202c"/><circle cx="3" cy="17" r="1.100" fill="#d3202c"/></svg>
<svg class="i" style="left:2.9px;top:317.0px;" width="20" height="20" viewBox="0 0 20 20"><path d="M10 .8l3.200 4.200h-2v3.800h3.800v-2l4.200 3.200-4.200 3.200v-2h-3.800v3.800h2L10 19.200l-3.200-4.200h2v-3.800H5v2L.8 10 5 6.800v2h3.800V5h-2z" fill="#d3202c" stroke="#9c1520" stroke-width=".4"/></svg>
<svg class="i" style="left:28.6px;top:317.0px;" width="20" height="20" viewBox="0 0 20 20"><path d="M1.500 13l8-4 9 3-8 5z" fill="#8c8c80" stroke="#333" stroke-width=".9"/><path d="M1.500 13v2.500l9 4.500v-3zM10.500 17v3l8-5.500V12z" fill="#55554c" stroke="#333" stroke-width=".6"/><path d="M10 2l3.500 5h-2.200v5.500H8.700V7H6.500z" fill="#d3202c" stroke="#9c1520" stroke-width=".5"/></svg>
<svg class="i" style="left:2.9px;top:343.0px;" width="20" height="20" viewBox="0 0 20 20"><path d="M3 9a7 7 0 0 1 12-4l2-2 .5 7-7-.5 2.300-2.300A4 4 0 0 0 6.500 9z" fill="#d3202c"/><path d="M17 11a7 7 0 0 1-12 4l-2 2-.5-7 7 .5-2.300 2.300a4 4 0 0 0 6.300-1.800z" fill="#d3202c"/></svg>
<svg class="i" style="left:28.6px;top:343.0px;" width="20" height="20" viewBox="0 0 20 20"><path d="M3 16C1 8 7 2 16 3l2 3c-6-1-11 2-10 9z" fill="#8a2020" stroke="#222" stroke-width="1"/><path d="M5 17c-1-6 3-10 11-9l1.500 3c-5-1-8 1-7.500 5z" fill="#777" stroke="#222" stroke-width=".9"/><path d="M13 13l5 1-3 3z" fill="#d3202c"/></svg>
<svg class="i" style="left:2.9px;top:368.6px;" width="20" height="20" viewBox="0 0 20 20"><rect x="2" y="3" width="15.500" height="15" fill="#fff" stroke="#d3202c" stroke-width=".9"/><rect x="2" y="7.500" width="11" height="10.500" fill="#a3a293" stroke="#555" stroke-width=".9"/><path d="M9 11l6.500-6.500" stroke="#d3202c" stroke-width="2.600"/><path d="M11.500 2.500l7-.8-.8 7z" fill="#d3202c"/></svg>
<svg class="i" style="left:28.6px;top:368.6px;" width="20" height="20" viewBox="0 0 20 20"><path d="M3 5c7-3 13 1 14 12" fill="none" stroke="#d3202c" stroke-width="1.400"/><path d="M5 10c4-1.500 7 1 8 7" fill="none" stroke="#d3202c" stroke-width="1.400"/><path d="M8 14l5.500-6.500" stroke="#d3202c" stroke-width="2"/><path d="M10.500 5l6-1-1 6z" fill="#d3202c"/></svg>
<svg class="i" style="left:2.9px;top:398.0px;" width="20" height="20" viewBox="0 0 20 20"><path d="M7.500 8.500l5-6 5.500 3.500-1 5-5 3.500z" fill="#d8cc3a" stroke="#333" stroke-width="1"/><circle cx="13" cy="8" r="2.200" fill="#f4ee9a" stroke="#555" stroke-width=".6"/><path d="M8.500 10.500L3 16" stroke="#e8e060" stroke-width="2.400"/><path d="M8.500 10.500L3 16" stroke="#333" stroke-width=".6" stroke-dasharray="1 1.500"/><rect x="1.500" y="15" width="3" height="3" fill="#333"/></svg>
<svg class="i" style="left:28.6px;top:398.0px;" width="20" height="20" viewBox="0 0 20 20"><path d="M3 6l9 9M6.500 2.500l11 11" stroke="#1a1a1a" stroke-width=".9"/><path d="M5 1l3 3M16 12l3 3M1.500 4.500l3 3M10.500 13.500l3 3" stroke="#1a1a1a" stroke-width=".9"/><path d="M8 3l3 .5-2.500 2.500zM17 13l-3-.5 2.500-2.500z" fill="#1a1a1a"/><path d="M5 5.500h3" stroke="#1a1a1a" stroke-width=".8"/></svg>
<svg class="i" style="left:2.9px;top:424.6px;" width="20" height="20" viewBox="0 0 20 20"><path d="M2 15C3 7 10 2 18.500 4c.5 6-3 11-9 13z" fill="#d8cc3a" stroke="#333" stroke-width="1.100"/><path d="M5.500 14c1-4.500 5-7.500 10-7-.2 3.500-2.500 6.500-6.500 8z" fill="#f0f0f0" stroke="#555" stroke-width=".7"/></svg>
<svg class="i" style="left:28.6px;top:424.6px;" width="20" height="20" viewBox="0 0 20 20"><rect x="6" y="2" width="13" height="9.500" fill="#fff" stroke="#333" stroke-width="1"/><path d="M6 7H2.500v9" fill="none" stroke="#333" stroke-width=".9"/><path d="M.8 15h3.400L2.500 19z" fill="#1a1a1a"/><path d="M9 9.500l2-5.500 2 5.500M9.800 7.500h2.400M15 9.500V4l-1 1M14 9.500h2" fill="none" stroke="#1a1a1a" stroke-width=".9"/></svg>
<svg class="i" style="left:2.9px;top:449.8px;" width="20" height="20" viewBox="0 0 20 20"><path d="M10 11V1.500" stroke="#2a50c8" stroke-width="1.400"/><path d="M10 1l2 3.500h-4z" fill="#2a50c8"/><path d="M10 11l8 5" stroke="#d3202c" stroke-width="1.400"/><path d="M10 11l8-5" stroke="#3aa03a" stroke-width="1.400"/><path d="M10 11L2.500 6M10 11l-7 6M10 11v8" stroke="#999" stroke-width=".9"/></svg>
<svg class="i" style="left:28.6px;top:449.8px;" width="20" height="20" viewBox="0 0 20 20"><path d="M3 17L8 2h5l5 13-2 3-2-4H8l-1 4z" fill="#444" stroke="#111" stroke-width=".8"/><path d="M8.500 11l1.700-5 1.800 5z" fill="#e8e8e8"/><path d="M3 17l1.500 1.500h3L7 18zM14 14l2 4" stroke="#111" stroke-width=".8" fill="#222"/></svg>
<svg class="i" style="left:2.9px;top:482.0px;" width="20" height="20" viewBox="0 0 20 20"><path d="M9 3.500C3.500 3.500.8 7 1.500 10.500c.7 3 3.500 4.500 6.500 4.500v3l4-4.500L8 9v2.800c-1.800 0-3.200-.6-3.200-2.300S6.500 7 9 7z" fill="#d3202c" stroke="#7a0f18" stroke-width=".7"/><path d="M11 3.500c5.500 0 8.200 3.500 7.500 7-.7 3-3.500 4.500-6.500 4.500v-3.200c1.800 0 3.200-.6 3.200-2.300S13.500 7 11 7v2.500L7.500 5 11 1z" fill="#3cae62" stroke="#1f7038" stroke-width=".7"/><path d="M10 .5v19" stroke="#1a1a1a" stroke-width="1.500"/></svg>
<svg class="i" style="left:28.6px;top:482.0px;" width="20" height="20" viewBox="0 0 20 20"><path d="M3.500 18c-1.500-4-.5-6.500 2-9l1.200-4.500c.5-1.600 2.300-1.200 2.200.3L8.500 8l3-5.500c.8-1.300 2.500-.5 2 1L11.500 9l4-4.500c1-1 2.400 0 1.700 1.300L13.500 11.500l4-2c1.200-.5 2 1 1 1.800-3 2-5 4-6.500 6.700-2.500 1.500-6 1.200-8.500 0z" fill="#ecdcae" stroke="#7a6c48" stroke-width=".9" stroke-linejoin="round"/></svg>
<svg class="i" style="left:2.9px;top:507.4px;" width="20" height="20" viewBox="0 0 20 20"><path d="M8.500 11.500L2.500 17.500" stroke="#1a1a1a" stroke-width="2.600" stroke-linecap="round"/><circle cx="12" cy="7.500" r="5" fill="#8fc0ee" stroke="#2a3c5a" stroke-width="1.200"/><circle cx="12" cy="7.500" r="1.300" fill="#6aa0da"/></svg>
<svg class="i" style="left:28.6px;top:507.4px;" width="20" height="20" viewBox="0 0 20 20"><rect x="3" y="3" width="14.500" height="14.500" fill="#fff" stroke="#d3202c" stroke-width="1.300"/><path d="M9 11.500L3 17.500" stroke="#1a1a1a" stroke-width="2.400" stroke-linecap="round"/><circle cx="12.500" cy="7.500" r="4.600" fill="#8fc0ee" stroke="#2a3c5a" stroke-width="1.200"/></svg>
<svg class="i" style="left:2.9px;top:533.0px;" width="20" height="20" viewBox="0 0 20 20"><path d="M2 2l5 1.500L3.500 7zM18 2l-1.500 5L13 3.500zM18 18l-5-1.500 3.500-3.500zM2 18" fill="#d3202c"/><path d="M3 3l4 4M17 3l-4 4M17 17l-4-4" stroke="#d3202c" stroke-width="1.600"/><path d="M8.500 11.500L3 17.500" stroke="#1a1a1a" stroke-width="2.400" stroke-linecap="round"/><circle cx="10.500" cy="9.500" r="3.800" fill="#8fc0ee" stroke="#2a3c5a" stroke-width="1.100"/></svg>
<svg class="i" style="left:28.6px;top:533.0px;" width="20" height="20" viewBox="0 0 20 20"><circle cx="8" cy="8" r="5.500" fill="#8fc0ee" stroke="#2a5a9a" stroke-width="1.200"/><path d="M4 8l4-3.500v2c4 0 6 1.500 6 5-1.500-1.800-3-2.400-6-2.300v2.300z" fill="#2f86e0" stroke="#1a5aa8" stroke-width=".5"/><path d="M12 12l5.500 5.500" stroke="#1a1a1a" stroke-width="2.600" stroke-linecap="round"/></svg>
<svg class="i" style="left:2.9px;top:564.4px;" width="20" height="20" viewBox="0 0 20 20"><ellipse cx="10" cy="8" rx="2.200" ry="5" fill="#fff" stroke="#555" stroke-width=".9"/><circle cx="10" cy="2.500" r="1.300" fill="#fff" stroke="#555" stroke-width=".8"/><path d="M6.500 13l7 5M13.500 13l-7 5" stroke="#d3202c" stroke-width="1.200"/></svg>
<svg class="i" style="left:28.6px;top:564.4px;" width="20" height="20" viewBox="0 0 20 20"><path d="M1.500 10c3-5 12-6 17-1-4 5.500-12 6-17 1z" fill="#e8e8e8" stroke="#333" stroke-width="1"/><path d="M2 8c4-5 12-5 16-.5" fill="none" stroke="#222" stroke-width="1.600"/><circle cx="10" cy="10" r="3.300" fill="#222"/><circle cx="11" cy="9" r="1" fill="#ddd"/></svg>
<svg class="i" style="left:2.9px;top:590.0px;" width="20" height="20" viewBox="0 0 20 20"><ellipse cx="6.500" cy="8.500" rx="2.800" ry="4.300" fill="#1a1a1a" transform="rotate(-12 6.500 8.500)"/><ellipse cx="7.500" cy="15.500" rx="2" ry="2.300" fill="#1a1a1a"/><ellipse cx="13.500" cy="6" rx="2.800" ry="4.300" fill="#1a1a1a" transform="rotate(12 13.500 6)"/><ellipse cx="13" cy="13" rx="2" ry="2.300" fill="#1a1a1a"/></svg>
<svg class="i" style="left:28.6px;top:590.0px;" width="20" height="20" viewBox="0 0 20 20"><circle cx="10" cy="10" r="5.500" fill="#fff" stroke="#1a1a1a" stroke-width="1.100"/><path d="M1 10h18M10 2v16" stroke="#1a1a1a" stroke-width="1"/><path d="M19 10l-3-2.500v5zM10 1.500" fill="#1a1a1a"/><path d="M7.500 12.500h5" stroke="#1a1a1a" stroke-width=".7"/></svg>
<svg class="i" style="left:2.9px;top:615.8px;" width="20" height="20" viewBox="0 0 20 20"><path d="M2 6l8-4 8 3-1 9-8 4-6-4z" fill="#555" stroke="#222" stroke-width=".8"/><path d="M4 6.500l6-3 6 2-.8 6.500-6 3-4.500-3z" fill="#d3202c"/><path d="M7 6.500h5l-1 2.500H8.500l-.5 1.500h3l-1 2.500H6" fill="none" stroke="#fff" stroke-width="1.200"/></svg>
<svg class="i" style="left:28.6px;top:615.8px;" width="20" height="20" viewBox="0 0 20 20"><path d="M2 9l8 4 8-4v5l-8 4.500L2 14z" fill="#555" stroke="#222" stroke-width=".8"/><path d="M3 8l3.500-4.500h7L17 8l-7 6z" fill="#d3202c" stroke="#9c1520" stroke-width=".8"/><path d="M3 8h14M6.500 3.500L10 8l3.500-4.500" fill="none" stroke="#f5b0b0" stroke-width=".8"/></svg>
<svg class="i" style="left:2.9px;top:641.8px;" width="20" height="20" viewBox="0 0 20 20"><path d="M2 4l11-2.500 4 14L6 18z" fill="#fff" stroke="#d3202c" stroke-width="1.300"/><path d="M3 5l10.500-2.300.8 2.800L4 8z" fill="#d3202c"/><path d="M5 10l4-.9 1.500 5.400-4 .9z" fill="#f0a0a0"/><path d="M10 12h5v-2.200l4 3.700-4 3.700V15h-5z" fill="#2f7fd8" stroke="#1a4f98" stroke-width=".6"/></svg>
<svg class="i" style="left:28.6px;top:641.8px;" width="20" height="20" viewBox="0 0 20 20"><path d="M1.500 7.500L5.500 3h8.500l4 4.500-8 8z" fill="#d3202c" stroke="#9c1520" stroke-width=".9"/><path d="M1.500 7.500h16.500M5.500 3L10 7.500 14 3" fill="none" stroke="#f5a0a0" stroke-width=".8"/><circle cx="14.500" cy="15" r="3" fill="#9c1520" stroke="#fff" stroke-width=".7"/><circle cx="14.500" cy="15" r="1.100" fill="#fff"/></svg>
<div style="left:2px;top:176.6px;width:48px;height:1px;background:#a8a8a8"></div>
<div style="left:2px;top:177.6px;width:48px;height:1px;background:#fafafa"></div>
<div style="left:2px;top:310px;width:48px;height:1px;background:#a8a8a8"></div>
<div style="left:2px;top:311px;width:48px;height:1px;background:#fafafa"></div>
<div style="left:2px;top:393px;width:48px;height:1px;background:#a8a8a8"></div>
<div style="left:2px;top:394px;width:48px;height:1px;background:#fafafa"></div>
<div style="left:2px;top:475px;width:48px;height:1px;background:#a8a8a8"></div>
<div style="left:2px;top:476px;width:48px;height:1px;background:#fafafa"></div>
<div style="left:2px;top:558px;width:48px;height:1px;background:#a8a8a8"></div>
<div style="left:2px;top:559px;width:48px;height:1px;background:#fafafa"></div>
<div style="left:2px;top:665px;width:48px;height:1px;background:#a8a8a8"></div>
<div style="left:2px;top:666px;width:48px;height:1px;background:#fafafa"></div>
<div style="left:54.100px;top:117.100px;width:1529.200px;height:881.300px;background:#fff;overflow:hidden"><div style="left:-0.1px;top:-0.1px;width:10px;height:10px"><svg width="1920" height="1015" viewBox="0 0 1920 1015" style="position:absolute;left:-54px;top:-117px">
<defs><linearGradient id="ts"><stop offset="0" stop-color="#fdfdfd"/><stop offset="0.4" stop-color="#e9e9e9"/><stop offset="1" stop-color="#b2b2b2"/></linearGradient><linearGradient id="t0" href="#ts" gradientUnits="userSpaceOnUse" x1="124.6" y1="483.0" x2="161.7" y2="463.2"/><linearGradient id="t1" href="#ts" gradientUnits="userSpaceOnUse" x1="154.4" y1="498.9" x2="183.6" y2="483.4"/><linearGradient id="t2" href="#ts" gradientUnits="userSpaceOnUse" x1="140.8" y1="491.7" x2="176.8" y2="472.4"/><linearGradient id="t3" href="#ts" gradientUnits="userSpaceOnUse" x1="169.1" y1="482.8" x2="209.1" y2="461.4"/><linearGradient id="t4" href="#ts" gradientUnits="userSpaceOnUse" x1="157.1" y1="476.7" x2="202.5" y2="452.4"/><linearGradient id="t5" href="#ts" gradientUnits="userSpaceOnUse" x1="201.7" y1="468.0" x2="236.8" y2="449.2"/><linearGradient id="t6" href="#ts" gradientUnits="userSpaceOnUse" x1="173.3" y1="509.0" x2="200.4" y2="494.5"/><linearGradient id="t7" href="#ts" gradientUnits="userSpaceOnUse" x1="190.1" y1="501.9" x2="232.0" y2="479.5"/><linearGradient id="t8" href="#ts" gradientUnits="userSpaceOnUse" x1="175.8" y1="494.5" x2="224.0" y2="468.8"/><linearGradient id="t9" href="#ts" gradientUnits="userSpaceOnUse" x1="217.2" y1="482.8" x2="257.4" y2="461.3"/><linearGradient id="t10" href="#ts" gradientUnits="userSpaceOnUse" x1="203.1" y1="476.0" x2="249.0" y2="451.5"/><linearGradient id="t11" href="#ts" gradientUnits="userSpaceOnUse" x1="242.0" y1="465.2" x2="280.6" y2="444.6"/><linearGradient id="t12" href="#ts" gradientUnits="userSpaceOnUse" x1="234.0" y1="461.7" x2="274.5" y2="440.1"/><linearGradient id="t13" href="#ts" gradientUnits="userSpaceOnUse" x1="275.6" y1="453.5" x2="306.4" y2="437.1"/><linearGradient id="t14" href="#ts" gradientUnits="userSpaceOnUse" x1="216.2" y1="522.1" x2="257.4" y2="500.1"/><linearGradient id="t15" href="#ts" gradientUnits="userSpaceOnUse" x1="197.8" y1="514.7" x2="248.1" y2="487.9"/><linearGradient id="t16" href="#ts" gradientUnits="userSpaceOnUse" x1="240.4" y1="501.9" x2="282.4" y2="479.4"/><linearGradient id="t17" href="#ts" gradientUnits="userSpaceOnUse" x1="225.2" y1="494.5" x2="273.2" y2="468.9"/><linearGradient id="t18" href="#ts" gradientUnits="userSpaceOnUse" x1="265.2" y1="482.7" x2="305.6" y2="461.2"/><linearGradient id="t19" href="#ts" gradientUnits="userSpaceOnUse" x1="250.4" y1="476.0" x2="296.1" y2="451.6"/><linearGradient id="t20" href="#ts" gradientUnits="userSpaceOnUse" x1="288.1" y1="465.2" x2="326.9" y2="444.4"/><linearGradient id="t21" href="#ts" gradientUnits="userSpaceOnUse" x1="273.5" y1="459.0" x2="317.2" y2="435.6"/><linearGradient id="t22" href="#ts" gradientUnits="userSpaceOnUse" x1="309.1" y1="449.0" x2="346.5" y2="429.0"/><linearGradient id="t23" href="#ts" gradientUnits="userSpaceOnUse" x1="305.7" y1="447.7" x2="341.0" y2="428.8"/><linearGradient id="t24" href="#ts" gradientUnits="userSpaceOnUse" x1="344.5" y1="440.1" x2="370.7" y2="426.1"/><linearGradient id="t25" href="#ts" gradientUnits="userSpaceOnUse" x1="254.3" y1="542.0" x2="286.6" y2="524.8"/><linearGradient id="t26" href="#ts" gradientUnits="userSpaceOnUse" x1="237.6" y1="533.3" x2="276.6" y2="512.5"/><linearGradient id="t27" href="#ts" gradientUnits="userSpaceOnUse" x1="265.7" y1="522.8" x2="309.8" y2="499.2"/><linearGradient id="t28" href="#ts" gradientUnits="userSpaceOnUse" x1="249.5" y1="514.7" x2="299.5" y2="488.0"/><linearGradient id="t29" href="#ts" gradientUnits="userSpaceOnUse" x1="290.6" y1="501.9" x2="332.9" y2="479.3"/><linearGradient id="t30" href="#ts" gradientUnits="userSpaceOnUse" x1="274.6" y1="494.5" x2="322.3" y2="469.0"/><linearGradient id="t31" href="#ts" gradientUnits="userSpaceOnUse" x1="313.3" y1="482.7" x2="353.9" y2="461.1"/><linearGradient id="t32" href="#ts" gradientUnits="userSpaceOnUse" x1="297.7" y1="476.0" x2="343.2" y2="451.7"/><linearGradient id="t33" href="#ts" gradientUnits="userSpaceOnUse" x1="334.1" y1="465.2" x2="373.2" y2="444.3"/><linearGradient id="t34" href="#ts" gradientUnits="userSpaceOnUse" x1="318.8" y1="459.0" x2="362.4" y2="435.7"/><linearGradient id="t35" href="#ts" gradientUnits="userSpaceOnUse" x1="353.3" y1="449.0" x2="390.9" y2="428.9"/><linearGradient id="t36" href="#ts" gradientUnits="userSpaceOnUse" x1="338.4" y1="443.3" x2="380.1" y2="421.0"/><linearGradient id="t37" href="#ts" gradientUnits="userSpaceOnUse" x1="372.6" y1="434.6" x2="407.9" y2="415.8"/><linearGradient id="t38" href="#ts" gradientUnits="userSpaceOnUse" x1="277.5" y1="554.2" x2="307.2" y2="538.3"/><linearGradient id="t39" href="#ts" gradientUnits="userSpaceOnUse" x1="293.6" y1="545.8" x2="340.0" y2="521.0"/><linearGradient id="t40" href="#ts" gradientUnits="userSpaceOnUse" x1="276.1" y1="536.9" x2="328.4" y2="508.9"/><linearGradient id="t41" href="#ts" gradientUnits="userSpaceOnUse" x1="318.3" y1="522.8" x2="362.6" y2="499.1"/><linearGradient id="t42" href="#ts" gradientUnits="userSpaceOnUse" x1="301.1" y1="514.7" x2="350.9" y2="488.1"/><linearGradient id="t43" href="#ts" gradientUnits="userSpaceOnUse" x1="340.8" y1="501.8" x2="383.3" y2="479.1"/><linearGradient id="t44" href="#ts" gradientUnits="userSpaceOnUse" x1="324.0" y1="494.5" x2="371.5" y2="469.1"/><linearGradient id="t45" href="#ts" gradientUnits="userSpaceOnUse" x1="361.3" y1="482.7" x2="402.1" y2="460.9"/><linearGradient id="t46" href="#ts" gradientUnits="userSpaceOnUse" x1="345.0" y1="476.0" x2="390.3" y2="451.7"/><linearGradient id="t47" href="#ts" gradientUnits="userSpaceOnUse" x1="380.2" y1="465.2" x2="419.4" y2="444.2"/><linearGradient id="t48" href="#ts" gradientUnits="userSpaceOnUse" x1="364.2" y1="459.0" x2="407.6" y2="435.8"/><linearGradient id="t49" href="#ts" gradientUnits="userSpaceOnUse" x1="397.6" y1="449.0" x2="435.3" y2="428.8"/><linearGradient id="t50" href="#ts" gradientUnits="userSpaceOnUse" x1="382.0" y1="443.3" x2="423.6" y2="421.0"/><linearGradient id="t51" href="#ts" gradientUnits="userSpaceOnUse" x1="413.6" y1="434.1" x2="450.0" y2="414.6"/><linearGradient id="t52" href="#ts" gradientUnits="userSpaceOnUse" x1="399.9" y1="429.3" x2="438.9" y2="408.4"/><linearGradient id="t53" href="#ts" gradientUnits="userSpaceOnUse" x1="435.1" y1="422.4" x2="458.8" y2="409.8"/><linearGradient id="t54" href="#ts" gradientUnits="userSpaceOnUse" x1="305.3" y1="561.3" x2="354.4" y2="535.1"/><linearGradient id="t55" href="#ts" gradientUnits="userSpaceOnUse" x1="348.7" y1="545.7" x2="389.3" y2="524.1"/><linearGradient id="t56" href="#ts" gradientUnits="userSpaceOnUse" x1="330.2" y1="536.9" x2="382.3" y2="509.0"/><linearGradient id="t57" href="#ts" gradientUnits="userSpaceOnUse" x1="370.9" y1="522.7" x2="415.4" y2="498.9"/><linearGradient id="t58" href="#ts" gradientUnits="userSpaceOnUse" x1="352.8" y1="514.7" x2="402.4" y2="488.2"/><linearGradient id="t59" href="#ts" gradientUnits="userSpaceOnUse" x1="391.0" y1="501.8" x2="433.7" y2="479.0"/><linearGradient id="t60" href="#ts" gradientUnits="userSpaceOnUse" x1="373.4" y1="494.5" x2="420.6" y2="469.2"/><linearGradient id="t61" href="#ts" gradientUnits="userSpaceOnUse" x1="409.4" y1="482.7" x2="450.4" y2="460.8"/><linearGradient id="t62" href="#ts" gradientUnits="userSpaceOnUse" x1="392.2" y1="475.9" x2="437.4" y2="451.8"/><linearGradient id="t63" href="#ts" gradientUnits="userSpaceOnUse" x1="426.3" y1="465.1" x2="465.6" y2="444.1"/><linearGradient id="t64" href="#ts" gradientUnits="userSpaceOnUse" x1="409.6" y1="458.9" x2="452.8" y2="435.9"/><linearGradient id="t65" href="#ts" gradientUnits="userSpaceOnUse" x1="441.8" y1="449.0" x2="479.7" y2="428.7"/><linearGradient id="t66" href="#ts" gradientUnits="userSpaceOnUse" x1="425.5" y1="443.3" x2="467.0" y2="421.1"/><linearGradient id="t67" href="#ts" gradientUnits="userSpaceOnUse" x1="456.2" y1="434.1" x2="492.7" y2="414.5"/><linearGradient id="t68" href="#ts" gradientUnits="userSpaceOnUse" x1="440.3" y1="428.8" x2="472.9" y2="411.4"/><linearGradient id="t69" href="#ts" gradientUnits="userSpaceOnUse" x1="384.4" y1="536.8" x2="434.0" y2="510.3"/><linearGradient id="t70" href="#ts" gradientUnits="userSpaceOnUse" x1="423.4" y1="522.7" x2="466.0" y2="500.0"/><linearGradient id="t71" href="#ts" gradientUnits="userSpaceOnUse" x1="404.4" y1="514.7" x2="453.8" y2="488.3"/><linearGradient id="t72" href="#ts" gradientUnits="userSpaceOnUse" x1="441.2" y1="501.8" x2="484.1" y2="478.9"/><linearGradient id="t73" href="#ts" gradientUnits="userSpaceOnUse" x1="422.8" y1="494.4" x2="469.8" y2="469.3"/><linearGradient id="t74" href="#ts" gradientUnits="userSpaceOnUse" x1="457.4" y1="482.7" x2="498.6" y2="460.7"/><linearGradient id="t75" href="#ts" gradientUnits="userSpaceOnUse" x1="439.5" y1="475.9" x2="484.5" y2="451.9"/><linearGradient id="t76" href="#ts" gradientUnits="userSpaceOnUse" x1="472.3" y1="465.1" x2="511.9" y2="444.0"/><linearGradient id="t77" href="#ts" gradientUnits="userSpaceOnUse" x1="454.9" y1="458.9" x2="498.0" y2="435.9"/><linearGradient id="t78" href="#ts" gradientUnits="userSpaceOnUse" x1="486.0" y1="449.0" x2="524.1" y2="428.6"/><linearGradient id="t79" href="#ts" gradientUnits="userSpaceOnUse" x1="469.1" y1="443.2" x2="510.4" y2="421.2"/><linearGradient id="t80" href="#ts" gradientUnits="userSpaceOnUse" x1="475.9" y1="522.7" x2="505.8" y2="506.8"/><linearGradient id="t81" href="#ts" gradientUnits="userSpaceOnUse" x1="456.1" y1="514.6" x2="505.2" y2="488.4"/><linearGradient id="t82" href="#ts" gradientUnits="userSpaceOnUse" x1="491.4" y1="501.8" x2="534.5" y2="478.8"/><linearGradient id="t83" href="#ts" gradientUnits="userSpaceOnUse" x1="472.1" y1="494.4" x2="518.9" y2="469.4"/><linearGradient id="t84" href="#ts" gradientUnits="userSpaceOnUse" x1="505.4" y1="482.7" x2="546.8" y2="460.6"/><linearGradient id="t85" href="#ts" gradientUnits="userSpaceOnUse" x1="486.8" y1="475.9" x2="531.5" y2="452.0"/><linearGradient id="t86" href="#ts" gradientUnits="userSpaceOnUse" x1="518.4" y1="465.1" x2="558.1" y2="443.9"/><linearGradient id="t87" href="#ts" gradientUnits="userSpaceOnUse" x1="500.3" y1="458.9" x2="543.1" y2="436.0"/><linearGradient id="t88" href="#ts" gradientUnits="userSpaceOnUse" x1="530.3" y1="449.0" x2="553.5" y2="436.6"/><linearGradient id="t89" href="#ts" gradientUnits="userSpaceOnUse" x1="512.7" y1="443.2" x2="531.6" y2="433.2"/><linearGradient id="t90" href="#ts" gradientUnits="userSpaceOnUse" x1="507.7" y1="514.6" x2="545.4" y2="494.5"/><linearGradient id="t91" href="#ts" gradientUnits="userSpaceOnUse" x1="541.5" y1="501.8" x2="573.5" y2="484.7"/><linearGradient id="t92" href="#ts" gradientUnits="userSpaceOnUse" x1="521.5" y1="494.4" x2="568.0" y2="469.5"/><linearGradient id="t93" href="#ts" gradientUnits="userSpaceOnUse" x1="553.5" y1="482.6" x2="595.0" y2="460.5"/><linearGradient id="t94" href="#ts" gradientUnits="userSpaceOnUse" x1="534.0" y1="475.9" x2="578.6" y2="452.1"/><linearGradient id="t95" href="#ts" gradientUnits="userSpaceOnUse" x1="564.4" y1="465.1" x2="596.7" y2="447.9"/><linearGradient id="t96" href="#ts" gradientUnits="userSpaceOnUse" x1="545.6" y1="458.9" x2="573.1" y2="444.2"/><linearGradient id="t97" href="#ts" gradientUnits="userSpaceOnUse" x1="570.8" y1="494.4" x2="610.2" y2="473.3"/><linearGradient id="t98" href="#ts" gradientUnits="userSpaceOnUse" x1="601.5" y1="482.6" x2="636.1" y2="464.1"/><linearGradient id="t99" href="#ts" gradientUnits="userSpaceOnUse" x1="581.3" y1="475.9" x2="617.9" y2="456.3"/><linearGradient id="t100" href="#ts" gradientUnits="userSpaceOnUse" x1="291.1" y1="572.0" x2="337.6" y2="547.1"/><linearGradient id="t101" href="#ts" gradientUnits="userSpaceOnUse" x1="337.0" y1="596.5" x2="374.2" y2="576.6"/><linearGradient id="t102" href="#ts" gradientUnits="userSpaceOnUse" x1="316.8" y1="585.7" x2="360.7" y2="562.2"/><linearGradient id="t103" href="#ts" gradientUnits="userSpaceOnUse" x1="346.7" y1="572.6" x2="395.8" y2="546.4"/><linearGradient id="t104" href="#ts" gradientUnits="userSpaceOnUse" x1="327.2" y1="562.7" x2="382.1" y2="533.4"/><linearGradient id="t105" href="#ts" gradientUnits="userSpaceOnUse" x1="376.5" y1="550.1" x2="419.6" y2="527.1"/><linearGradient id="t106" href="#ts" gradientUnits="userSpaceOnUse" x1="365.2" y1="611.5" x2="399.4" y2="593.3"/><linearGradient id="t107" href="#ts" gradientUnits="userSpaceOnUse" x1="382.1" y1="600.9" x2="434.0" y2="573.1"/><linearGradient id="t108" href="#ts" gradientUnits="userSpaceOnUse" x1="360.8" y1="589.9" x2="418.6" y2="559.0"/><linearGradient id="t109" href="#ts" gradientUnits="userSpaceOnUse" x1="404.8" y1="572.6" x2="454.2" y2="546.2"/><linearGradient id="t110" href="#ts" gradientUnits="userSpaceOnUse" x1="384.2" y1="562.7" x2="438.9" y2="533.5"/><linearGradient id="t111" href="#ts" gradientUnits="userSpaceOnUse" x1="425.3" y1="547.1" x2="472.4" y2="521.9"/><linearGradient id="t112" href="#ts" gradientUnits="userSpaceOnUse" x1="411.9" y1="541.1" x2="459.9" y2="515.4"/><linearGradient id="t113" href="#ts" gradientUnits="userSpaceOnUse" x1="457.2" y1="529.5" x2="494.2" y2="509.7"/><linearGradient id="t114" href="#ts" gradientUnits="userSpaceOnUse" x1="425.0" y1="631.4" x2="477.0" y2="603.6"/><linearGradient id="t115" href="#ts" gradientUnits="userSpaceOnUse" x1="398.3" y1="620.2" x2="459.3" y2="587.6"/><linearGradient id="t116" href="#ts" gradientUnits="userSpaceOnUse" x1="443.4" y1="600.8" x2="495.7" y2="572.9"/><linearGradient id="t117" href="#ts" gradientUnits="userSpaceOnUse" x1="421.0" y1="589.9" x2="478.4" y2="559.2"/><linearGradient id="t118" href="#ts" gradientUnits="userSpaceOnUse" x1="463.0" y1="572.5" x2="512.7" y2="546.0"/><linearGradient id="t119" href="#ts" gradientUnits="userSpaceOnUse" x1="441.3" y1="562.7" x2="495.7" y2="533.6"/><linearGradient id="t120" href="#ts" gradientUnits="userSpaceOnUse" x1="480.6" y1="547.0" x2="528.0" y2="521.7"/><linearGradient id="t121" href="#ts" gradientUnits="userSpaceOnUse" x1="459.6" y1="538.1" x2="511.2" y2="510.5"/><linearGradient id="t122" href="#ts" gradientUnits="userSpaceOnUse" x1="496.6" y1="523.9" x2="541.8" y2="499.8"/><linearGradient id="t123" href="#ts" gradientUnits="userSpaceOnUse" x1="489.7" y1="521.2" x2="530.6" y2="499.3"/><linearGradient id="t124" href="#ts" gradientUnits="userSpaceOnUse" x1="531.4" y1="510.5" x2="562.1" y2="494.1"/><linearGradient id="t125" href="#ts" gradientUnits="userSpaceOnUse" x1="483.6" y1="662.0" x2="526.2" y2="639.3"/><linearGradient id="t126" href="#ts" gradientUnits="userSpaceOnUse" x1="457.7" y1="648.5" x2="506.4" y2="622.5"/><linearGradient id="t127" href="#ts" gradientUnits="userSpaceOnUse" x1="486.5" y1="632.4" x2="542.0" y2="602.8"/><linearGradient id="t128" href="#ts" gradientUnits="userSpaceOnUse" x1="461.8" y1="620.1" x2="522.4" y2="587.8"/><linearGradient id="t129" href="#ts" gradientUnits="userSpaceOnUse" x1="504.8" y1="600.8" x2="557.3" y2="572.7"/><linearGradient id="t130" href="#ts" gradientUnits="userSpaceOnUse" x1="481.1" y1="589.9" x2="538.2" y2="559.3"/><linearGradient id="t131" href="#ts" gradientUnits="userSpaceOnUse" x1="521.1" y1="572.5" x2="571.1" y2="545.8"/><linearGradient id="t132" href="#ts" gradientUnits="userSpaceOnUse" x1="498.3" y1="562.6" x2="552.4" y2="533.8"/><linearGradient id="t133" href="#ts" gradientUnits="userSpaceOnUse" x1="535.9" y1="547.0" x2="583.5" y2="521.6"/><linearGradient id="t134" href="#ts" gradientUnits="userSpaceOnUse" x1="513.9" y1="538.1" x2="565.2" y2="510.7"/><linearGradient id="t135" href="#ts" gradientUnits="userSpaceOnUse" x1="549.2" y1="523.9" x2="594.7" y2="499.6"/><linearGradient id="t136" href="#ts" gradientUnits="userSpaceOnUse" x1="528.0" y1="515.8" x2="576.9" y2="489.7"/><linearGradient id="t137" href="#ts" gradientUnits="userSpaceOnUse" x1="561.4" y1="502.9" x2="604.9" y2="479.6"/><linearGradient id="t138" href="#ts" gradientUnits="userSpaceOnUse" x1="519.9" y1="681.0" x2="558.7" y2="660.4"/><linearGradient id="t139" href="#ts" gradientUnits="userSpaceOnUse" x1="534.9" y1="667.8" x2="593.9" y2="636.3"/><linearGradient id="t140" href="#ts" gradientUnits="userSpaceOnUse" x1="507.7" y1="654.0" x2="571.7" y2="619.8"/><linearGradient id="t141" href="#ts" gradientUnits="userSpaceOnUse" x1="551.4" y1="632.3" x2="607.2" y2="602.5"/><linearGradient id="t142" href="#ts" gradientUnits="userSpaceOnUse" x1="525.4" y1="620.1" x2="585.6" y2="587.9"/><linearGradient id="t143" href="#ts" gradientUnits="userSpaceOnUse" x1="566.1" y1="600.8" x2="619.0" y2="572.5"/><linearGradient id="t144" href="#ts" gradientUnits="userSpaceOnUse" x1="541.1" y1="589.8" x2="598.0" y2="559.5"/><linearGradient id="t145" href="#ts" gradientUnits="userSpaceOnUse" x1="579.3" y1="572.5" x2="629.5" y2="545.6"/><linearGradient id="t146" href="#ts" gradientUnits="userSpaceOnUse" x1="555.3" y1="562.6" x2="609.1" y2="533.9"/><linearGradient id="t147" href="#ts" gradientUnits="userSpaceOnUse" x1="591.1" y1="547.0" x2="639.0" y2="521.4"/><linearGradient id="t148" href="#ts" gradientUnits="userSpaceOnUse" x1="568.1" y1="538.1" x2="619.2" y2="510.8"/><linearGradient id="t149" href="#ts" gradientUnits="userSpaceOnUse" x1="601.9" y1="523.9" x2="647.6" y2="499.5"/><linearGradient id="t150" href="#ts" gradientUnits="userSpaceOnUse" x1="579.8" y1="515.8" x2="628.4" y2="489.8"/><linearGradient id="t151" href="#ts" gradientUnits="userSpaceOnUse" x1="611.6" y1="502.9" x2="655.4" y2="479.5"/><linearGradient id="t152" href="#ts" gradientUnits="userSpaceOnUse" x1="590.4" y1="495.5" x2="636.8" y2="470.7"/><linearGradient id="t153" href="#ts" gradientUnits="userSpaceOnUse" x1="627.6" y1="486.0" x2="657.2" y2="470.1"/><linearGradient id="t154" href="#ts" gradientUnits="userSpaceOnUse" x1="559.3" y1="692.3" x2="620.7" y2="659.5"/><linearGradient id="t155" href="#ts" gradientUnits="userSpaceOnUse" x1="603.7" y1="667.8" x2="656.5" y2="639.6"/><linearGradient id="t156" href="#ts" gradientUnits="userSpaceOnUse" x1="575.0" y1="654.0" x2="638.6" y2="620.0"/><linearGradient id="t157" href="#ts" gradientUnits="userSpaceOnUse" x1="616.3" y1="632.3" x2="672.4" y2="602.3"/><linearGradient id="t158" href="#ts" gradientUnits="userSpaceOnUse" x1="588.8" y1="620.1" x2="648.7" y2="588.1"/><linearGradient id="t159" href="#ts" gradientUnits="userSpaceOnUse" x1="627.4" y1="600.7" x2="680.6" y2="572.3"/><linearGradient id="t160" href="#ts" gradientUnits="userSpaceOnUse" x1="601.2" y1="589.8" x2="657.7" y2="559.6"/><linearGradient id="t161" href="#ts" gradientUnits="userSpaceOnUse" x1="637.4" y1="572.4" x2="687.9" y2="545.4"/><linearGradient id="t162" href="#ts" gradientUnits="userSpaceOnUse" x1="612.3" y1="562.6" x2="665.9" y2="534.0"/><linearGradient id="t163" href="#ts" gradientUnits="userSpaceOnUse" x1="646.4" y1="546.9" x2="694.5" y2="521.2"/><linearGradient id="t164" href="#ts" gradientUnits="userSpaceOnUse" x1="622.4" y1="538.0" x2="673.2" y2="510.9"/><linearGradient id="t165" href="#ts" gradientUnits="userSpaceOnUse" x1="654.5" y1="523.9" x2="700.4" y2="499.3"/><linearGradient id="t166" href="#ts" gradientUnits="userSpaceOnUse" x1="631.5" y1="515.8" x2="679.9" y2="489.9"/><linearGradient id="t167" href="#ts" gradientUnits="userSpaceOnUse" x1="661.9" y1="502.8" x2="705.8" y2="479.4"/><linearGradient id="t168" href="#ts" gradientUnits="userSpaceOnUse" x1="639.8" y1="495.4" x2="678.1" y2="475.0"/><linearGradient id="t169" href="#ts" gradientUnits="userSpaceOnUse" x1="642.3" y1="653.9" x2="704.9" y2="620.5"/><linearGradient id="t170" href="#ts" gradientUnits="userSpaceOnUse" x1="681.1" y1="632.3" x2="737.0" y2="602.4"/><linearGradient id="t171" href="#ts" gradientUnits="userSpaceOnUse" x1="652.3" y1="620.0" x2="711.8" y2="588.2"/><linearGradient id="t172" href="#ts" gradientUnits="userSpaceOnUse" x1="688.7" y1="600.7" x2="742.2" y2="572.1"/><linearGradient id="t173" href="#ts" gradientUnits="userSpaceOnUse" x1="661.3" y1="589.7" x2="717.5" y2="559.7"/><linearGradient id="t174" href="#ts" gradientUnits="userSpaceOnUse" x1="695.5" y1="572.4" x2="746.3" y2="545.3"/><linearGradient id="t175" href="#ts" gradientUnits="userSpaceOnUse" x1="669.3" y1="562.6" x2="722.6" y2="534.1"/><linearGradient id="t176" href="#ts" gradientUnits="userSpaceOnUse" x1="701.6" y1="546.9" x2="750.0" y2="521.1"/><linearGradient id="t177" href="#ts" gradientUnits="userSpaceOnUse" x1="676.6" y1="538.0" x2="727.2" y2="511.0"/><linearGradient id="t178" href="#ts" gradientUnits="userSpaceOnUse" x1="707.1" y1="523.8" x2="753.3" y2="499.2"/><linearGradient id="t179" href="#ts" gradientUnits="userSpaceOnUse" x1="683.2" y1="515.7" x2="731.4" y2="490.0"/><linearGradient id="t180" href="#ts" gradientUnits="userSpaceOnUse" x1="745.9" y1="632.2" x2="782.6" y2="612.7"/><linearGradient id="t181" href="#ts" gradientUnits="userSpaceOnUse" x1="715.8" y1="620.0" x2="774.9" y2="588.4"/><linearGradient id="t182" href="#ts" gradientUnits="userSpaceOnUse" x1="749.9" y1="600.7" x2="803.8" y2="571.9"/><linearGradient id="t183" href="#ts" gradientUnits="userSpaceOnUse" x1="721.3" y1="589.7" x2="777.2" y2="559.9"/><linearGradient id="t184" href="#ts" gradientUnits="userSpaceOnUse" x1="753.6" y1="572.4" x2="804.6" y2="545.1"/><linearGradient id="t185" href="#ts" gradientUnits="userSpaceOnUse" x1="726.3" y1="562.5" x2="779.3" y2="534.3"/><linearGradient id="t186" href="#ts" gradientUnits="userSpaceOnUse" x1="756.8" y1="546.9" x2="805.4" y2="520.9"/><linearGradient id="t187" href="#ts" gradientUnits="userSpaceOnUse" x1="730.8" y1="538.0" x2="781.1" y2="511.1"/><linearGradient id="t188" href="#ts" gradientUnits="userSpaceOnUse" x1="759.7" y1="523.8" x2="790.1" y2="507.6"/><linearGradient id="t189" href="#ts" gradientUnits="userSpaceOnUse" x1="734.9" y1="515.7" x2="759.0" y2="502.9"/><linearGradient id="t190" href="#ts" gradientUnits="userSpaceOnUse" x1="779.2" y1="619.9" x2="824.2" y2="595.9"/><linearGradient id="t191" href="#ts" gradientUnits="userSpaceOnUse" x1="811.2" y1="600.6" x2="851.4" y2="579.1"/><linearGradient id="t192" href="#ts" gradientUnits="userSpaceOnUse" x1="781.4" y1="589.7" x2="836.9" y2="560.0"/><linearGradient id="t193" href="#ts" gradientUnits="userSpaceOnUse" x1="811.6" y1="572.3" x2="863.0" y2="544.9"/><linearGradient id="t194" href="#ts" gradientUnits="userSpaceOnUse" x1="783.3" y1="562.5" x2="835.9" y2="534.4"/><linearGradient id="t195" href="#ts" gradientUnits="userSpaceOnUse" x1="812.0" y1="546.9" x2="852.7" y2="525.1"/><linearGradient id="t196" href="#ts" gradientUnits="userSpaceOnUse" x1="785.0" y1="538.0" x2="818.9" y2="519.9"/><linearGradient id="t197" href="#ts" gradientUnits="userSpaceOnUse" x1="841.4" y1="589.6" x2="889.3" y2="564.0"/><linearGradient id="t198" href="#ts" gradientUnits="userSpaceOnUse" x1="869.7" y1="572.3" x2="914.0" y2="548.6"/><linearGradient id="t199" href="#ts" gradientUnits="userSpaceOnUse" x1="840.2" y1="562.5" x2="884.4" y2="538.9"/><linearGradient id="t200" href="#ts" gradientUnits="userSpaceOnUse" x1="552.7" y1="711.7" x2="613.4" y2="679.3"/><linearGradient id="t201" href="#ts" gradientUnits="userSpaceOnUse" x1="627.7" y1="751.8" x2="679.0" y2="724.4"/><linearGradient id="t202" href="#ts" gradientUnits="userSpaceOnUse" x1="594.5" y1="734.0" x2="650.9" y2="703.9"/><linearGradient id="t203" href="#ts" gradientUnits="userSpaceOnUse" x1="623.7" y1="712.7" x2="687.5" y2="678.7"/><linearGradient id="t204" href="#ts" gradientUnits="userSpaceOnUse" x1="592.4" y1="696.9" x2="660.6" y2="660.5"/><linearGradient id="t205" href="#ts" gradientUnits="userSpaceOnUse" x1="646.1" y1="676.8" x2="700.2" y2="647.9"/><linearGradient id="t206" href="#ts" gradientUnits="userSpaceOnUse" x1="674.9" y1="777.0" x2="721.2" y2="752.2"/><linearGradient id="t207" href="#ts" gradientUnits="userSpaceOnUse" x1="689.0" y1="759.1" x2="757.7" y2="722.5"/><linearGradient id="t208" href="#ts" gradientUnits="userSpaceOnUse" x1="653.8" y1="741.0" x2="726.4" y2="702.2"/><linearGradient id="t209" href="#ts" gradientUnits="userSpaceOnUse" x1="697.6" y1="712.7" x2="761.9" y2="678.3"/><linearGradient id="t210" href="#ts" gradientUnits="userSpaceOnUse" x1="664.5" y1="696.8" x2="732.2" y2="660.7"/><linearGradient id="t211" href="#ts" gradientUnits="userSpaceOnUse" x1="705.2" y1="672.0" x2="765.6" y2="639.7"/><linearGradient id="t212" href="#ts" gradientUnits="userSpaceOnUse" x1="684.1" y1="662.6" x2="741.6" y2="631.9"/><linearGradient id="t213" href="#ts" gradientUnits="userSpaceOnUse" x1="732.3" y1="644.6" x2="777.0" y2="620.7"/><linearGradient id="t214" href="#ts" gradientUnits="userSpaceOnUse" x1="767.9" y1="810.8" x2="838.6" y2="773.0"/><linearGradient id="t215" href="#ts" gradientUnits="userSpaceOnUse" x1="724.4" y1="791.6" x2="801.9" y2="750.2"/><linearGradient id="t216" href="#ts" gradientUnits="userSpaceOnUse" x1="768.1" y1="759.1" x2="837.3" y2="722.1"/><linearGradient id="t217" href="#ts" gradientUnits="userSpaceOnUse" x1="730.9" y1="740.9" x2="803.0" y2="702.4"/><linearGradient id="t218" href="#ts" gradientUnits="userSpaceOnUse" x1="771.5" y1="712.6" x2="836.2" y2="678.0"/><linearGradient id="t219" href="#ts" gradientUnits="userSpaceOnUse" x1="736.6" y1="696.8" x2="803.9" y2="660.9"/><linearGradient id="t220" href="#ts" gradientUnits="userSpaceOnUse" x1="774.5" y1="671.9" x2="835.3" y2="639.4"/><linearGradient id="t221" href="#ts" gradientUnits="userSpaceOnUse" x1="741.6" y1="658.0" x2="804.7" y2="624.3"/><linearGradient id="t222" href="#ts" gradientUnits="userSpaceOnUse" x1="777.1" y1="636.0" x2="834.5" y2="605.4"/><linearGradient id="t223" href="#ts" gradientUnits="userSpaceOnUse" x1="766.6" y1="631.8" x2="813.4" y2="606.8"/><linearGradient id="t224" href="#ts" gradientUnits="userSpaceOnUse" x1="810.0" y1="615.6" x2="845.4" y2="596.7"/><linearGradient id="t225" href="#ts" gradientUnits="userSpaceOnUse" x1="870.3" y1="864.4" x2="932.5" y2="831.2"/><linearGradient id="t226" href="#ts" gradientUnits="userSpaceOnUse" x1="824.7" y1="840.5" x2="889.6" y2="805.8"/><linearGradient id="t227" href="#ts" gradientUnits="userSpaceOnUse" x1="849.3" y1="812.5" x2="924.2" y2="772.5"/><linearGradient id="t228" href="#ts" gradientUnits="userSpaceOnUse" x1="807.1" y1="791.5" x2="884.1" y2="750.4"/><linearGradient id="t229" href="#ts" gradientUnits="userSpaceOnUse" x1="847.2" y1="759.0" x2="916.9" y2="721.8"/><linearGradient id="t230" href="#ts" gradientUnits="userSpaceOnUse" x1="808.0" y1="740.9" x2="879.5" y2="702.7"/><linearGradient id="t231" href="#ts" gradientUnits="userSpaceOnUse" x1="845.3" y1="712.6" x2="910.5" y2="677.7"/><linearGradient id="t232" href="#ts" gradientUnits="userSpaceOnUse" x1="808.7" y1="696.7" x2="875.5" y2="661.0"/><linearGradient id="t233" href="#ts" gradientUnits="userSpaceOnUse" x1="843.7" y1="671.9" x2="905.0" y2="639.2"/><linearGradient id="t234" href="#ts" gradientUnits="userSpaceOnUse" x1="809.3" y1="657.9" x2="872.0" y2="624.5"/><linearGradient id="t235" href="#ts" gradientUnits="userSpaceOnUse" x1="842.3" y1="636.0" x2="900.0" y2="605.1"/><linearGradient id="t236" href="#ts" gradientUnits="userSpaceOnUse" x1="809.9" y1="623.6" x2="868.9" y2="592.1"/><linearGradient id="t237" href="#ts" gradientUnits="userSpaceOnUse" x1="841.0" y1="604.0" x2="895.6" y2="574.8"/><linearGradient id="t238" href="#ts" gradientUnits="userSpaceOnUse" x1="935.7" y1="898.6" x2="991.1" y2="869.0"/><linearGradient id="t239" href="#ts" gradientUnits="userSpaceOnUse" x1="943.9" y1="874.7" x2="1025.5" y2="831.1"/><linearGradient id="t240" href="#ts" gradientUnits="userSpaceOnUse" x1="895.5" y1="850.2" x2="978.1" y2="806.1"/><linearGradient id="t241" href="#ts" gradientUnits="userSpaceOnUse" x1="934.4" y1="812.4" x2="1009.9" y2="772.1"/><linearGradient id="t242" href="#ts" gradientUnits="userSpaceOnUse" x1="889.9" y1="791.4" x2="966.2" y2="750.7"/><linearGradient id="t243" href="#ts" gradientUnits="userSpaceOnUse" x1="926.3" y1="758.9" x2="996.5" y2="721.4"/><linearGradient id="t244" href="#ts" gradientUnits="userSpaceOnUse" x1="885.0" y1="740.8" x2="956.0" y2="702.9"/><linearGradient id="t245" href="#ts" gradientUnits="userSpaceOnUse" x1="919.2" y1="712.5" x2="984.8" y2="677.4"/><linearGradient id="t246" href="#ts" gradientUnits="userSpaceOnUse" x1="880.7" y1="696.7" x2="947.1" y2="661.2"/><linearGradient id="t247" href="#ts" gradientUnits="userSpaceOnUse" x1="913.0" y1="671.8" x2="974.6" y2="638.9"/><linearGradient id="t248" href="#ts" gradientUnits="userSpaceOnUse" x1="877.0" y1="657.9" x2="939.3" y2="624.6"/><linearGradient id="t249" href="#ts" gradientUnits="userSpaceOnUse" x1="907.5" y1="635.9" x2="965.6" y2="604.9"/><linearGradient id="t250" href="#ts" gradientUnits="userSpaceOnUse" x1="873.7" y1="623.5" x2="932.3" y2="592.2"/><linearGradient id="t251" href="#ts" gradientUnits="userSpaceOnUse" x1="902.6" y1="604.0" x2="957.6" y2="574.6"/><linearGradient id="t252" href="#ts" gradientUnits="userSpaceOnUse" x1="870.8" y1="592.9" x2="926.2" y2="563.3"/><linearGradient id="t253" href="#ts" gradientUnits="userSpaceOnUse" x1="908.6" y1="578.8" x2="945.9" y2="558.9"/><linearGradient id="t254" href="#ts" gradientUnits="userSpaceOnUse" x1="999.2" y1="919.1" x2="1074.0" y2="879.1"/><linearGradient id="t255" href="#ts" gradientUnits="userSpaceOnUse" x1="1036.0" y1="874.6" x2="1103.8" y2="838.4"/><linearGradient id="t256" href="#ts" gradientUnits="userSpaceOnUse" x1="984.8" y1="850.1" x2="1066.7" y2="806.4"/><linearGradient id="t257" href="#ts" gradientUnits="userSpaceOnUse" x1="1019.5" y1="812.3" x2="1095.5" y2="771.7"/><linearGradient id="t258" href="#ts" gradientUnits="userSpaceOnUse" x1="972.6" y1="791.4" x2="1048.3" y2="750.9"/><linearGradient id="t259" href="#ts" gradientUnits="userSpaceOnUse" x1="1005.3" y1="758.8" x2="1076.0" y2="721.0"/><linearGradient id="t260" href="#ts" gradientUnits="userSpaceOnUse" x1="962.0" y1="740.7" x2="1032.4" y2="703.1"/><linearGradient id="t261" href="#ts" gradientUnits="userSpaceOnUse" x1="993.0" y1="712.4" x2="1059.1" y2="677.1"/><linearGradient id="t262" href="#ts" gradientUnits="userSpaceOnUse" x1="952.8" y1="696.6" x2="1018.6" y2="661.4"/><linearGradient id="t263" href="#ts" gradientUnits="userSpaceOnUse" x1="982.2" y1="671.8" x2="1044.3" y2="638.6"/><linearGradient id="t264" href="#ts" gradientUnits="userSpaceOnUse" x1="944.7" y1="657.8" x2="1006.5" y2="624.8"/><linearGradient id="t265" href="#ts" gradientUnits="userSpaceOnUse" x1="972.7" y1="635.9" x2="1031.2" y2="604.7"/><linearGradient id="t266" href="#ts" gradientUnits="userSpaceOnUse" x1="937.5" y1="623.5" x2="995.8" y2="592.4"/><linearGradient id="t267" href="#ts" gradientUnits="userSpaceOnUse" x1="964.2" y1="603.9" x2="1019.5" y2="574.4"/><linearGradient id="t268" href="#ts" gradientUnits="userSpaceOnUse" x1="931.1" y1="592.9" x2="977.9" y2="567.9"/><linearGradient id="t269" href="#ts" gradientUnits="userSpaceOnUse" x1="1074.1" y1="850.0" x2="1151.8" y2="808.5"/><linearGradient id="t270" href="#ts" gradientUnits="userSpaceOnUse" x1="1104.5" y1="812.2" x2="1177.7" y2="773.1"/><linearGradient id="t271" href="#ts" gradientUnits="userSpaceOnUse" x1="1055.2" y1="791.3" x2="1130.4" y2="751.2"/><linearGradient id="t272" href="#ts" gradientUnits="userSpaceOnUse" x1="1084.3" y1="758.8" x2="1155.6" y2="720.7"/><linearGradient id="t273" href="#ts" gradientUnits="userSpaceOnUse" x1="1039.0" y1="740.6" x2="1108.9" y2="703.3"/><linearGradient id="t274" href="#ts" gradientUnits="userSpaceOnUse" x1="1066.8" y1="712.4" x2="1133.3" y2="676.8"/><linearGradient id="t275" href="#ts" gradientUnits="userSpaceOnUse" x1="1024.8" y1="696.5" x2="1090.2" y2="661.6"/><linearGradient id="t276" href="#ts" gradientUnits="userSpaceOnUse" x1="1051.4" y1="671.7" x2="1113.9" y2="638.4"/><linearGradient id="t277" href="#ts" gradientUnits="userSpaceOnUse" x1="1012.3" y1="657.8" x2="1073.8" y2="625.0"/><linearGradient id="t278" href="#ts" gradientUnits="userSpaceOnUse" x1="1037.9" y1="635.8" x2="1096.7" y2="604.4"/><linearGradient id="t279" href="#ts" gradientUnits="userSpaceOnUse" x1="1001.3" y1="623.4" x2="1059.2" y2="592.5"/><linearGradient id="t280" href="#ts" gradientUnits="userSpaceOnUse" x1="1189.5" y1="812.1" x2="1229.5" y2="790.7"/><linearGradient id="t281" href="#ts" gradientUnits="userSpaceOnUse" x1="1137.9" y1="791.2" x2="1212.4" y2="751.4"/><linearGradient id="t282" href="#ts" gradientUnits="userSpaceOnUse" x1="1163.3" y1="758.7" x2="1235.1" y2="720.3"/><linearGradient id="t283" href="#ts" gradientUnits="userSpaceOnUse" x1="1115.9" y1="740.6" x2="1185.3" y2="703.5"/><linearGradient id="t284" href="#ts" gradientUnits="userSpaceOnUse" x1="1140.5" y1="712.3" x2="1207.6" y2="676.5"/><linearGradient id="t285" href="#ts" gradientUnits="userSpaceOnUse" x1="1096.8" y1="696.5" x2="1161.7" y2="661.8"/><linearGradient id="t286" href="#ts" gradientUnits="userSpaceOnUse" x1="1120.6" y1="671.7" x2="1183.5" y2="638.1"/><linearGradient id="t287" href="#ts" gradientUnits="userSpaceOnUse" x1="1080.0" y1="657.7" x2="1141.0" y2="625.1"/><linearGradient id="t288" href="#ts" gradientUnits="userSpaceOnUse" x1="1103.0" y1="635.8" x2="1145.7" y2="613.0"/><linearGradient id="t289" href="#ts" gradientUnits="userSpaceOnUse" x1="1065.1" y1="623.4" x2="1097.9" y2="605.9"/><linearGradient id="t290" href="#ts" gradientUnits="userSpaceOnUse" x1="1220.5" y1="791.1" x2="1268.7" y2="765.4"/><linearGradient id="t291" href="#ts" gradientUnits="userSpaceOnUse" x1="1242.2" y1="758.6" x2="1288.9" y2="733.7"/><linearGradient id="t292" href="#ts" gradientUnits="userSpaceOnUse" x1="1192.8" y1="740.5" x2="1261.7" y2="703.7"/><linearGradient id="t293" href="#ts" gradientUnits="userSpaceOnUse" x1="1214.3" y1="712.2" x2="1281.8" y2="676.2"/><linearGradient id="t294" href="#ts" gradientUnits="userSpaceOnUse" x1="1168.8" y1="696.4" x2="1233.2" y2="662.0"/><linearGradient id="t295" href="#ts" gradientUnits="userSpaceOnUse" x1="1189.8" y1="671.6" x2="1244.8" y2="642.3"/><linearGradient id="t296" href="#ts" gradientUnits="userSpaceOnUse" x1="1147.6" y1="657.7" x2="1191.7" y2="634.1"/><linearGradient id="t297" href="#ts" gradientUnits="userSpaceOnUse" x1="1269.7" y1="740.4" x2="1323.7" y2="711.6"/><linearGradient id="t298" href="#ts" gradientUnits="userSpaceOnUse" x1="1288.0" y1="712.2" x2="1341.7" y2="683.5"/><linearGradient id="t299" href="#ts" gradientUnits="userSpaceOnUse" x1="1240.7" y1="696.4" x2="1296.5" y2="666.6"/><linearGradient id="t300" href="#ts" gradientUnits="userSpaceOnUse" x1="647.4" y1="480.9" x2="687.6" y2="459.4"/><linearGradient id="t301" href="#ts" gradientUnits="userSpaceOnUse" x1="698.6" y1="497.4" x2="732.9" y2="479.1"/><linearGradient id="t302" href="#ts" gradientUnits="userSpaceOnUse" x1="676.2" y1="490.1" x2="712.5" y2="470.8"/><linearGradient id="t303" href="#ts" gradientUnits="userSpaceOnUse" x1="693.5" y1="481.3" x2="735.4" y2="458.9"/><linearGradient id="t304" href="#ts" gradientUnits="userSpaceOnUse" x1="671.9" y1="474.6" x2="715.7" y2="451.2"/><linearGradient id="t305" href="#ts" gradientUnits="userSpaceOnUse" x1="705.7" y1="466.0" x2="741.4" y2="446.9"/><linearGradient id="t306" href="#ts" gradientUnits="userSpaceOnUse" x1="729.7" y1="507.4" x2="759.7" y2="491.4"/><linearGradient id="t307" href="#ts" gradientUnits="userSpaceOnUse" x1="737.8" y1="500.3" x2="781.8" y2="476.8"/><linearGradient id="t308" href="#ts" gradientUnits="userSpaceOnUse" x1="714.6" y1="493.0" x2="760.2" y2="468.6"/><linearGradient id="t309" href="#ts" gradientUnits="userSpaceOnUse" x1="741.3" y1="481.3" x2="783.5" y2="458.8"/><linearGradient id="t310" href="#ts" gradientUnits="userSpaceOnUse" x1="719.0" y1="474.6" x2="762.6" y2="451.3"/><linearGradient id="t311" href="#ts" gradientUnits="userSpaceOnUse" x1="744.5" y1="463.9" x2="785.0" y2="442.3"/><linearGradient id="t312" href="#ts" gradientUnits="userSpaceOnUse" x1="730.1" y1="459.7" x2="767.3" y2="439.9"/><linearGradient id="t313" href="#ts" gradientUnits="userSpaceOnUse" x1="761.6" y1="451.7" x2="791.2" y2="435.9"/><linearGradient id="t314" href="#ts" gradientUnits="userSpaceOnUse" x1="788.5" y1="520.4" x2="832.8" y2="496.7"/><linearGradient id="t315" href="#ts" gradientUnits="userSpaceOnUse" x1="761.2" y1="513.0" x2="808.7" y2="487.7"/><linearGradient id="t316" href="#ts" gradientUnits="userSpaceOnUse" x1="787.8" y1="500.3" x2="832.0" y2="476.7"/><linearGradient id="t317" href="#ts" gradientUnits="userSpaceOnUse" x1="763.7" y1="493.0" x2="809.1" y2="468.7"/><linearGradient id="t318" href="#ts" gradientUnits="userSpaceOnUse" x1="789.1" y1="481.3" x2="831.5" y2="458.7"/><linearGradient id="t319" href="#ts" gradientUnits="userSpaceOnUse" x1="766.1" y1="474.6" x2="809.5" y2="451.4"/><linearGradient id="t320" href="#ts" gradientUnits="userSpaceOnUse" x1="790.4" y1="463.9" x2="831.0" y2="442.1"/><linearGradient id="t321" href="#ts" gradientUnits="userSpaceOnUse" x1="768.2" y1="457.7" x2="809.8" y2="435.5"/><linearGradient id="t322" href="#ts" gradientUnits="userSpaceOnUse" x1="791.5" y1="447.8" x2="830.6" y2="426.9"/><linearGradient id="t323" href="#ts" gradientUnits="userSpaceOnUse" x1="784.3" y1="445.9" x2="814.9" y2="429.6"/><linearGradient id="t324" href="#ts" gradientUnits="userSpaceOnUse" x1="813.6" y1="438.4" x2="837.2" y2="425.8"/><linearGradient id="t325" href="#ts" gradientUnits="userSpaceOnUse" x1="850.7" y1="540.1" x2="889.2" y2="519.5"/><linearGradient id="t326" href="#ts" gradientUnits="userSpaceOnUse" x1="823.4" y1="531.4" x2="862.9" y2="510.4"/><linearGradient id="t327" href="#ts" gradientUnits="userSpaceOnUse" x1="838.6" y1="521.0" x2="885.1" y2="496.2"/><linearGradient id="t328" href="#ts" gradientUnits="userSpaceOnUse" x1="812.6" y1="513.0" x2="859.8" y2="487.8"/><linearGradient id="t329" href="#ts" gradientUnits="userSpaceOnUse" x1="837.7" y1="500.3" x2="882.1" y2="476.5"/><linearGradient id="t330" href="#ts" gradientUnits="userSpaceOnUse" x1="812.8" y1="493.0" x2="858.0" y2="468.8"/><linearGradient id="t331" href="#ts" gradientUnits="userSpaceOnUse" x1="836.9" y1="481.3" x2="879.5" y2="458.5"/><linearGradient id="t332" href="#ts" gradientUnits="userSpaceOnUse" x1="813.1" y1="474.6" x2="856.3" y2="451.5"/><linearGradient id="t333" href="#ts" gradientUnits="userSpaceOnUse" x1="836.2" y1="463.9" x2="877.0" y2="442.0"/><linearGradient id="t334" href="#ts" gradientUnits="userSpaceOnUse" x1="813.4" y1="457.7" x2="854.8" y2="435.5"/><linearGradient id="t335" href="#ts" gradientUnits="userSpaceOnUse" x1="835.5" y1="447.8" x2="874.8" y2="426.8"/><linearGradient id="t336" href="#ts" gradientUnits="userSpaceOnUse" x1="813.6" y1="442.1" x2="853.4" y2="420.8"/><linearGradient id="t337" href="#ts" gradientUnits="userSpaceOnUse" x1="834.9" y1="433.0" x2="872.7" y2="412.8"/><linearGradient id="t338" href="#ts" gradientUnits="userSpaceOnUse" x1="888.7" y1="552.2" x2="922.0" y2="534.4"/><linearGradient id="t339" href="#ts" gradientUnits="userSpaceOnUse" x1="894.4" y1="543.8" x2="943.3" y2="517.6"/><linearGradient id="t340" href="#ts" gradientUnits="userSpaceOnUse" x1="866.1" y1="535.0" x2="915.4" y2="508.7"/><linearGradient id="t341" href="#ts" gradientUnits="userSpaceOnUse" x1="890.9" y1="521.0" x2="937.6" y2="496.1"/><linearGradient id="t342" href="#ts" gradientUnits="userSpaceOnUse" x1="863.9" y1="513.0" x2="911.0" y2="487.9"/><linearGradient id="t343" href="#ts" gradientUnits="userSpaceOnUse" x1="887.7" y1="500.2" x2="932.3" y2="476.4"/><linearGradient id="t344" href="#ts" gradientUnits="userSpaceOnUse" x1="862.0" y1="492.9" x2="906.9" y2="468.9"/><linearGradient id="t345" href="#ts" gradientUnits="userSpaceOnUse" x1="884.7" y1="481.3" x2="927.5" y2="458.4"/><linearGradient id="t346" href="#ts" gradientUnits="userSpaceOnUse" x1="860.2" y1="474.6" x2="903.2" y2="451.6"/><linearGradient id="t347" href="#ts" gradientUnits="userSpaceOnUse" x1="882.0" y1="463.8" x2="923.0" y2="441.9"/><linearGradient id="t348" href="#ts" gradientUnits="userSpaceOnUse" x1="858.5" y1="457.7" x2="899.8" y2="435.6"/><linearGradient id="t349" href="#ts" gradientUnits="userSpaceOnUse" x1="879.6" y1="447.8" x2="919.0" y2="426.7"/><linearGradient id="t350" href="#ts" gradientUnits="userSpaceOnUse" x1="857.0" y1="442.1" x2="896.6" y2="420.9"/><linearGradient id="t351" href="#ts" gradientUnits="userSpaceOnUse" x1="877.3" y1="433.0" x2="915.2" y2="412.7"/><linearGradient id="t352" href="#ts" gradientUnits="userSpaceOnUse" x1="855.6" y1="427.7" x2="893.7" y2="407.3"/><linearGradient id="t353" href="#ts" gradientUnits="userSpaceOnUse" x1="882.2" y1="420.9" x2="904.7" y2="408.9"/><linearGradient id="t354" href="#ts" gradientUnits="userSpaceOnUse" x1="925.0" y1="559.2" x2="969.3" y2="535.6"/><linearGradient id="t355" href="#ts" gradientUnits="userSpaceOnUse" x1="949.2" y1="543.8" x2="991.0" y2="521.4"/><linearGradient id="t356" href="#ts" gradientUnits="userSpaceOnUse" x1="919.9" y1="535.0" x2="969.0" y2="508.8"/><linearGradient id="t357" href="#ts" gradientUnits="userSpaceOnUse" x1="943.1" y1="521.0" x2="990.0" y2="495.9"/><linearGradient id="t358" href="#ts" gradientUnits="userSpaceOnUse" x1="915.3" y1="513.0" x2="962.1" y2="488.0"/><linearGradient id="t359" href="#ts" gradientUnits="userSpaceOnUse" x1="937.6" y1="500.2" x2="982.4" y2="476.3"/><linearGradient id="t360" href="#ts" gradientUnits="userSpaceOnUse" x1="911.1" y1="492.9" x2="955.8" y2="469.0"/><linearGradient id="t361" href="#ts" gradientUnits="userSpaceOnUse" x1="932.5" y1="481.2" x2="975.5" y2="458.3"/><linearGradient id="t362" href="#ts" gradientUnits="userSpaceOnUse" x1="907.2" y1="474.5" x2="950.0" y2="451.7"/><linearGradient id="t363" href="#ts" gradientUnits="userSpaceOnUse" x1="927.9" y1="463.8" x2="969.1" y2="441.8"/><linearGradient id="t364" href="#ts" gradientUnits="userSpaceOnUse" x1="903.7" y1="457.7" x2="944.7" y2="435.7"/><linearGradient id="t365" href="#ts" gradientUnits="userSpaceOnUse" x1="923.6" y1="447.8" x2="963.2" y2="426.6"/><linearGradient id="t366" href="#ts" gradientUnits="userSpaceOnUse" x1="900.4" y1="442.1" x2="939.9" y2="421.0"/><linearGradient id="t367" href="#ts" gradientUnits="userSpaceOnUse" x1="919.6" y1="432.9" x2="954.0" y2="414.6"/><linearGradient id="t368" href="#ts" gradientUnits="userSpaceOnUse" x1="897.3" y1="427.7" x2="926.0" y2="412.4"/><linearGradient id="t369" href="#ts" gradientUnits="userSpaceOnUse" x1="973.8" y1="535.0" x2="1022.0" y2="509.2"/><linearGradient id="t370" href="#ts" gradientUnits="userSpaceOnUse" x1="995.4" y1="521.0" x2="1041.9" y2="496.1"/><linearGradient id="t371" href="#ts" gradientUnits="userSpaceOnUse" x1="966.7" y1="513.0" x2="1013.2" y2="488.1"/><linearGradient id="t372" href="#ts" gradientUnits="userSpaceOnUse" x1="987.5" y1="500.2" x2="1032.6" y2="476.1"/><linearGradient id="t373" href="#ts" gradientUnits="userSpaceOnUse" x1="960.2" y1="492.9" x2="1004.7" y2="469.1"/><linearGradient id="t374" href="#ts" gradientUnits="userSpaceOnUse" x1="980.3" y1="481.2" x2="1023.4" y2="458.2"/><linearGradient id="t375" href="#ts" gradientUnits="userSpaceOnUse" x1="954.2" y1="474.5" x2="996.9" y2="451.8"/><linearGradient id="t376" href="#ts" gradientUnits="userSpaceOnUse" x1="973.7" y1="463.8" x2="1015.1" y2="441.7"/><linearGradient id="t377" href="#ts" gradientUnits="userSpaceOnUse" x1="948.8" y1="457.6" x2="989.7" y2="435.8"/><linearGradient id="t378" href="#ts" gradientUnits="userSpaceOnUse" x1="967.6" y1="447.8" x2="1007.3" y2="426.5"/><linearGradient id="t379" href="#ts" gradientUnits="userSpaceOnUse" x1="943.8" y1="442.1" x2="979.4" y2="423.0"/><linearGradient id="t380" href="#ts" gradientUnits="userSpaceOnUse" x1="1047.6" y1="520.9" x2="1073.8" y2="506.9"/><linearGradient id="t381" href="#ts" gradientUnits="userSpaceOnUse" x1="1018.0" y1="512.9" x2="1064.3" y2="488.2"/><linearGradient id="t382" href="#ts" gradientUnits="userSpaceOnUse" x1="1037.4" y1="500.2" x2="1082.7" y2="476.0"/><linearGradient id="t383" href="#ts" gradientUnits="userSpaceOnUse" x1="1009.3" y1="492.9" x2="1053.6" y2="469.2"/><linearGradient id="t384" href="#ts" gradientUnits="userSpaceOnUse" x1="1028.1" y1="481.2" x2="1071.4" y2="458.1"/><linearGradient id="t385" href="#ts" gradientUnits="userSpaceOnUse" x1="1001.3" y1="474.5" x2="1043.7" y2="451.9"/><linearGradient id="t386" href="#ts" gradientUnits="userSpaceOnUse" x1="1019.5" y1="463.8" x2="1061.0" y2="441.6"/><linearGradient id="t387" href="#ts" gradientUnits="userSpaceOnUse" x1="993.9" y1="457.6" x2="1034.6" y2="435.9"/><linearGradient id="t388" href="#ts" gradientUnits="userSpaceOnUse" x1="1011.6" y1="447.7" x2="1036.6" y2="434.4"/><linearGradient id="t389" href="#ts" gradientUnits="userSpaceOnUse" x1="987.1" y1="442.1" x2="1005.8" y2="432.1"/><linearGradient id="t390" href="#ts" gradientUnits="userSpaceOnUse" x1="1069.3" y1="512.9" x2="1101.2" y2="495.9"/><linearGradient id="t391" href="#ts" gradientUnits="userSpaceOnUse" x1="1087.3" y1="500.2" x2="1118.6" y2="483.5"/><linearGradient id="t392" href="#ts" gradientUnits="userSpaceOnUse" x1="1058.3" y1="492.9" x2="1102.4" y2="469.3"/><linearGradient id="t393" href="#ts" gradientUnits="userSpaceOnUse" x1="1075.8" y1="481.2" x2="1119.3" y2="458.0"/><linearGradient id="t394" href="#ts" gradientUnits="userSpaceOnUse" x1="1048.3" y1="474.5" x2="1090.5" y2="451.9"/><linearGradient id="t395" href="#ts" gradientUnits="userSpaceOnUse" x1="1065.3" y1="463.8" x2="1097.7" y2="446.5"/><linearGradient id="t396" href="#ts" gradientUnits="userSpaceOnUse" x1="1039.0" y1="457.6" x2="1064.6" y2="443.9"/><linearGradient id="t397" href="#ts" gradientUnits="userSpaceOnUse" x1="1107.4" y1="492.8" x2="1143.9" y2="473.3"/><linearGradient id="t398" href="#ts" gradientUnits="userSpaceOnUse" x1="1123.6" y1="481.2" x2="1156.3" y2="463.7"/><linearGradient id="t399" href="#ts" gradientUnits="userSpaceOnUse" x1="1095.3" y1="474.5" x2="1128.0" y2="457.0"/><linearGradient id="t400" href="#ts" gradientUnits="userSpaceOnUse" x1="928.6" y1="571.3" x2="978.9" y2="544.5"/><linearGradient id="t401" href="#ts" gradientUnits="userSpaceOnUse" x1="1004.6" y1="595.7" x2="1049.5" y2="571.7"/><linearGradient id="t402" href="#ts" gradientUnits="userSpaceOnUse" x1="971.2" y1="585.0" x2="1015.6" y2="561.2"/><linearGradient id="t403" href="#ts" gradientUnits="userSpaceOnUse" x1="984.8" y1="571.9" x2="1037.0" y2="544.0"/><linearGradient id="t404" href="#ts" gradientUnits="userSpaceOnUse" x1="953.2" y1="562.1" x2="1005.0" y2="534.5"/><linearGradient id="t405" href="#ts" gradientUnits="userSpaceOnUse" x1="986.9" y1="549.5" x2="1029.8" y2="526.6"/><linearGradient id="t406" href="#ts" gradientUnits="userSpaceOnUse" x1="1051.3" y1="610.7" x2="1089.9" y2="590.1"/><linearGradient id="t407" href="#ts" gradientUnits="userSpaceOnUse" x1="1055.0" y1="600.1" x2="1110.4" y2="570.5"/><linearGradient id="t408" href="#ts" gradientUnits="userSpaceOnUse" x1="1020.3" y1="589.2" x2="1074.6" y2="560.2"/><linearGradient id="t409" href="#ts" gradientUnits="userSpaceOnUse" x1="1042.8" y1="571.9" x2="1095.3" y2="543.9"/><linearGradient id="t410" href="#ts" gradientUnits="userSpaceOnUse" x1="1010.1" y1="562.1" x2="1061.5" y2="534.6"/><linearGradient id="t411" href="#ts" gradientUnits="userSpaceOnUse" x1="1031.8" y1="546.5" x2="1081.6" y2="519.8"/><linearGradient id="t412" href="#ts" gradientUnits="userSpaceOnUse" x1="1011.0" y1="540.5" x2="1053.3" y2="517.9"/><linearGradient id="t413" href="#ts" gradientUnits="userSpaceOnUse" x1="1041.9" y1="529.0" x2="1076.1" y2="510.7"/><linearGradient id="t414" href="#ts" gradientUnits="userSpaceOnUse" x1="1135.5" y1="630.5" x2="1192.3" y2="600.1"/><linearGradient id="t415" href="#ts" gradientUnits="userSpaceOnUse" x1="1095.1" y1="619.3" x2="1152.0" y2="588.9"/><linearGradient id="t416" href="#ts" gradientUnits="userSpaceOnUse" x1="1116.2" y1="600.1" x2="1171.8" y2="570.3"/><linearGradient id="t417" href="#ts" gradientUnits="userSpaceOnUse" x1="1080.3" y1="589.1" x2="1134.1" y2="560.4"/><linearGradient id="t418" href="#ts" gradientUnits="userSpaceOnUse" x1="1100.8" y1="571.9" x2="1153.5" y2="543.7"/><linearGradient id="t419" href="#ts" gradientUnits="userSpaceOnUse" x1="1067.0" y1="562.0" x2="1118.1" y2="534.7"/><linearGradient id="t420" href="#ts" gradientUnits="userSpaceOnUse" x1="1086.9" y1="546.4" x2="1137.0" y2="519.7"/><linearGradient id="t421" href="#ts" gradientUnits="userSpaceOnUse" x1="1055.0" y1="537.5" x2="1103.7" y2="511.5"/><linearGradient id="t422" href="#ts" gradientUnits="userSpaceOnUse" x1="1074.3" y1="523.4" x2="1122.0" y2="497.9"/><linearGradient id="t423" href="#ts" gradientUnits="userSpaceOnUse" x1="1064.1" y1="520.7" x2="1097.2" y2="503.0"/><linearGradient id="t424" href="#ts" gradientUnits="userSpaceOnUse" x1="1092.5" y1="510.1" x2="1118.3" y2="496.3"/><linearGradient id="t425" href="#ts" gradientUnits="userSpaceOnUse" x1="1231.7" y1="661.0" x2="1284.2" y2="633.0"/><linearGradient id="t426" href="#ts" gradientUnits="userSpaceOnUse" x1="1189.2" y1="647.6" x2="1238.7" y2="621.1"/><linearGradient id="t427" href="#ts" gradientUnits="userSpaceOnUse" x1="1198.0" y1="631.5" x2="1257.3" y2="599.9"/><linearGradient id="t428" href="#ts" gradientUnits="userSpaceOnUse" x1="1158.3" y1="619.3" x2="1214.9" y2="589.1"/><linearGradient id="t429" href="#ts" gradientUnits="userSpaceOnUse" x1="1177.3" y1="600.0" x2="1233.3" y2="570.1"/><linearGradient id="t430" href="#ts" gradientUnits="userSpaceOnUse" x1="1140.2" y1="589.1" x2="1193.7" y2="560.5"/><linearGradient id="t431" href="#ts" gradientUnits="userSpaceOnUse" x1="1158.7" y1="571.8" x2="1211.7" y2="543.5"/><linearGradient id="t432" href="#ts" gradientUnits="userSpaceOnUse" x1="1123.8" y1="562.0" x2="1174.7" y2="534.8"/><linearGradient id="t433" href="#ts" gradientUnits="userSpaceOnUse" x1="1142.0" y1="546.4" x2="1192.3" y2="519.5"/><linearGradient id="t434" href="#ts" gradientUnits="userSpaceOnUse" x1="1109.1" y1="537.5" x2="1157.5" y2="511.7"/><linearGradient id="t435" href="#ts" gradientUnits="userSpaceOnUse" x1="1126.8" y1="523.4" x2="1174.8" y2="497.7"/><linearGradient id="t436" href="#ts" gradientUnits="userSpaceOnUse" x1="1095.7" y1="515.3" x2="1141.9" y2="490.6"/><linearGradient id="t437" href="#ts" gradientUnits="userSpaceOnUse" x1="1113.0" y1="502.4" x2="1158.8" y2="478.0"/><linearGradient id="t438" href="#ts" gradientUnits="userSpaceOnUse" x1="1291.3" y1="680.0" x2="1335.8" y2="656.2"/><linearGradient id="t439" href="#ts" gradientUnits="userSpaceOnUse" x1="1289.9" y1="666.8" x2="1353.3" y2="633.0"/><linearGradient id="t440" href="#ts" gradientUnits="userSpaceOnUse" x1="1245.8" y1="653.1" x2="1305.3" y2="621.3"/><linearGradient id="t441" href="#ts" gradientUnits="userSpaceOnUse" x1="1262.7" y1="631.5" x2="1322.3" y2="599.6"/><linearGradient id="t442" href="#ts" gradientUnits="userSpaceOnUse" x1="1221.6" y1="619.3" x2="1277.8" y2="589.2"/><linearGradient id="t443" href="#ts" gradientUnits="userSpaceOnUse" x1="1238.4" y1="600.0" x2="1294.7" y2="569.9"/><linearGradient id="t444" href="#ts" gradientUnits="userSpaceOnUse" x1="1200.0" y1="589.1" x2="1253.3" y2="560.6"/><linearGradient id="t445" href="#ts" gradientUnits="userSpaceOnUse" x1="1216.7" y1="571.8" x2="1270.0" y2="543.3"/><linearGradient id="t446" href="#ts" gradientUnits="userSpaceOnUse" x1="1180.7" y1="562.0" x2="1231.2" y2="535.0"/><linearGradient id="t447" href="#ts" gradientUnits="userSpaceOnUse" x1="1197.0" y1="546.4" x2="1247.7" y2="519.3"/><linearGradient id="t448" href="#ts" gradientUnits="userSpaceOnUse" x1="1163.1" y1="537.5" x2="1211.3" y2="511.8"/><linearGradient id="t449" href="#ts" gradientUnits="userSpaceOnUse" x1="1179.3" y1="523.4" x2="1227.5" y2="497.6"/><linearGradient id="t450" href="#ts" gradientUnits="userSpaceOnUse" x1="1147.3" y1="515.3" x2="1193.2" y2="490.7"/><linearGradient id="t451" href="#ts" gradientUnits="userSpaceOnUse" x1="1163.1" y1="502.4" x2="1209.1" y2="477.8"/><linearGradient id="t452" href="#ts" gradientUnits="userSpaceOnUse" x1="1132.8" y1="495.0" x2="1176.7" y2="471.5"/><linearGradient id="t453" href="#ts" gradientUnits="userSpaceOnUse" x1="1158.1" y1="485.5" x2="1186.3" y2="470.5"/><linearGradient id="t454" href="#ts" gradientUnits="userSpaceOnUse" x1="1344.4" y1="691.1" x2="1393.1" y2="665.1"/><linearGradient id="t455" href="#ts" gradientUnits="userSpaceOnUse" x1="1358.5" y1="666.7" x2="1408.3" y2="640.2"/><linearGradient id="t456" href="#ts" gradientUnits="userSpaceOnUse" x1="1312.9" y1="653.0" x2="1372.0" y2="621.4"/><linearGradient id="t457" href="#ts" gradientUnits="userSpaceOnUse" x1="1327.3" y1="631.4" x2="1387.2" y2="599.4"/><linearGradient id="t458" href="#ts" gradientUnits="userSpaceOnUse" x1="1284.9" y1="619.2" x2="1340.7" y2="589.4"/><linearGradient id="t459" href="#ts" gradientUnits="userSpaceOnUse" x1="1299.5" y1="600.0" x2="1356.1" y2="569.7"/><linearGradient id="t460" href="#ts" gradientUnits="userSpaceOnUse" x1="1259.9" y1="589.0" x2="1312.8" y2="560.8"/><linearGradient id="t461" href="#ts" gradientUnits="userSpaceOnUse" x1="1274.6" y1="571.8" x2="1328.2" y2="543.1"/><linearGradient id="t462" href="#ts" gradientUnits="userSpaceOnUse" x1="1237.5" y1="561.9" x2="1287.8" y2="535.1"/><linearGradient id="t463" href="#ts" gradientUnits="userSpaceOnUse" x1="1252.1" y1="546.3" x2="1303.0" y2="519.2"/><linearGradient id="t464" href="#ts" gradientUnits="userSpaceOnUse" x1="1217.2" y1="537.5" x2="1265.1" y2="511.9"/><linearGradient id="t465" href="#ts" gradientUnits="userSpaceOnUse" x1="1231.8" y1="523.3" x2="1280.2" y2="497.5"/><linearGradient id="t466" href="#ts" gradientUnits="userSpaceOnUse" x1="1198.8" y1="515.3" x2="1244.6" y2="490.8"/><linearGradient id="t467" href="#ts" gradientUnits="userSpaceOnUse" x1="1213.2" y1="502.4" x2="1255.8" y2="479.6"/><linearGradient id="t468" href="#ts" gradientUnits="userSpaceOnUse" x1="1182.1" y1="495.0" x2="1216.6" y2="476.6"/><linearGradient id="t469" href="#ts" gradientUnits="userSpaceOnUse" x1="1379.9" y1="653.0" x2="1435.3" y2="623.4"/><linearGradient id="t470" href="#ts" gradientUnits="userSpaceOnUse" x1="1391.9" y1="631.4" x2="1448.9" y2="600.9"/><linearGradient id="t471" href="#ts" gradientUnits="userSpaceOnUse" x1="1348.1" y1="619.2" x2="1403.6" y2="589.5"/><linearGradient id="t472" href="#ts" gradientUnits="userSpaceOnUse" x1="1360.6" y1="599.9" x2="1417.5" y2="569.5"/><linearGradient id="t473" href="#ts" gradientUnits="userSpaceOnUse" x1="1319.8" y1="589.0" x2="1372.4" y2="560.9"/><linearGradient id="t474" href="#ts" gradientUnits="userSpaceOnUse" x1="1332.5" y1="571.7" x2="1386.3" y2="543.0"/><linearGradient id="t475" href="#ts" gradientUnits="userSpaceOnUse" x1="1294.3" y1="561.9" x2="1344.3" y2="535.2"/><linearGradient id="t476" href="#ts" gradientUnits="userSpaceOnUse" x1="1307.2" y1="546.3" x2="1358.3" y2="519.0"/><linearGradient id="t477" href="#ts" gradientUnits="userSpaceOnUse" x1="1271.3" y1="537.4" x2="1318.9" y2="512.0"/><linearGradient id="t478" href="#ts" gradientUnits="userSpaceOnUse" x1="1284.2" y1="523.3" x2="1332.9" y2="497.3"/><linearGradient id="t479" href="#ts" gradientUnits="userSpaceOnUse" x1="1250.4" y1="515.2" x2="1292.3" y2="492.9"/><linearGradient id="t480" href="#ts" gradientUnits="userSpaceOnUse" x1="1456.5" y1="631.3" x2="1482.4" y2="617.5"/><linearGradient id="t481" href="#ts" gradientUnits="userSpaceOnUse" x1="1411.3" y1="619.1" x2="1466.5" y2="589.7"/><linearGradient id="t482" href="#ts" gradientUnits="userSpaceOnUse" x1="1421.6" y1="599.9" x2="1478.8" y2="569.3"/><linearGradient id="t483" href="#ts" gradientUnits="userSpaceOnUse" x1="1379.6" y1="589.0" x2="1431.9" y2="561.1"/><linearGradient id="t484" href="#ts" gradientUnits="userSpaceOnUse" x1="1390.4" y1="571.7" x2="1444.5" y2="542.8"/><linearGradient id="t485" href="#ts" gradientUnits="userSpaceOnUse" x1="1351.1" y1="561.9" x2="1400.8" y2="535.3"/><linearGradient id="t486" href="#ts" gradientUnits="userSpaceOnUse" x1="1362.2" y1="546.3" x2="1413.6" y2="518.8"/><linearGradient id="t487" href="#ts" gradientUnits="userSpaceOnUse" x1="1325.3" y1="537.4" x2="1372.7" y2="512.1"/><linearGradient id="t488" href="#ts" gradientUnits="userSpaceOnUse" x1="1336.7" y1="523.3" x2="1371.3" y2="504.8"/><linearGradient id="t489" href="#ts" gradientUnits="userSpaceOnUse" x1="1301.9" y1="515.2" x2="1327.5" y2="501.6"/><linearGradient id="t490" href="#ts" gradientUnits="userSpaceOnUse" x1="1474.6" y1="619.1" x2="1505.5" y2="602.5"/><linearGradient id="t491" href="#ts" gradientUnits="userSpaceOnUse" x1="1482.7" y1="599.8" x2="1516.6" y2="581.7"/><linearGradient id="t492" href="#ts" gradientUnits="userSpaceOnUse" x1="1439.4" y1="588.9" x2="1491.4" y2="561.2"/><linearGradient id="t493" href="#ts" gradientUnits="userSpaceOnUse" x1="1448.2" y1="571.7" x2="1502.7" y2="542.6"/><linearGradient id="t494" href="#ts" gradientUnits="userSpaceOnUse" x1="1407.9" y1="561.9" x2="1457.3" y2="535.5"/><linearGradient id="t495" href="#ts" gradientUnits="userSpaceOnUse" x1="1417.2" y1="546.3" x2="1460.2" y2="523.3"/><linearGradient id="t496" href="#ts" gradientUnits="userSpaceOnUse" x1="1379.4" y1="537.4" x2="1412.4" y2="519.7"/><linearGradient id="t497" href="#ts" gradientUnits="userSpaceOnUse" x1="1499.2" y1="588.9" x2="1537.7" y2="568.4"/><linearGradient id="t498" href="#ts" gradientUnits="userSpaceOnUse" x1="1506.1" y1="571.6" x2="1544.5" y2="551.2"/><linearGradient id="t499" href="#ts" gradientUnits="userSpaceOnUse" x1="1464.6" y1="561.8" x2="1505.2" y2="540.1"/></defs>
<line x1="121.0" y1="482.8" x2="57.4" y2="117" stroke="#34347c" stroke-width="1.1"/>
<line x1="121.0" y1="482.8" x2="205.5" y2="997" stroke="#8c8c96" stroke-width="1.4" stroke-dasharray="1.4 2.6"/>
<line x1="121.0" y1="482.8" x2="54" y2="446.5" stroke="#909090" stroke-width="1.4" stroke-dasharray="1.4 2.6"/>
<line x1="121.0" y1="482.8" x2="54" y2="495.5" stroke="#909090" stroke-width="1.4" stroke-dasharray="1.4 2.6"/>
<line x1="121.0" y1="482.8" x2="1584" y2="197.8" stroke="#3c9a3c" stroke-width="1"/>
<line x1="121.0" y1="482.8" x2="1087" y2="1001.0" stroke="#a06060" stroke-width="1"/>
<path d="M121.0,484.4 L1001.3,958.2 L1556.2,574.6 L891.0,420.0 L645.6,482.9 L450.7,419.9Z" fill="#fff" stroke="#1c1cae" stroke-width="1.5" stroke-linejoin="round"/>
<path d="M121.0,482.8 L1001.3,955.0 L1556.2,572.7 L891.0,418.6 L645.6,481.3 L450.7,418.6Z" fill="#fff" stroke="#1c1cae" stroke-width="1.5" stroke-linejoin="round"/>
<g stroke="#1c1cae" stroke-width="1.75" stroke-linejoin="round"><path d="M124.6,483.0L140.8,491.7L173.6,485.1L157.1,476.7Z" fill="url(#t0)"/><path d="M154.4,498.9L173.3,509.0L195.0,504.4L175.8,494.5Z" fill="url(#t1)"/><path d="M140.8,491.7L154.4,498.9L187.6,492.1L173.6,485.1Z" fill="url(#t2)"/><path d="M169.1,482.8L187.6,492.1L222.0,485.1L203.1,476.0Z" fill="url(#t3)"/><path d="M157.1,476.7L169.1,482.8L214.1,473.8L201.7,468.0Z" fill="url(#t4)"/><path d="M201.7,468.0L214.1,473.8L246.7,467.3L234.0,461.7Z" fill="url(#t5)"/><path d="M173.3,509.0L188.0,516.9L209.9,512.1L195.0,504.4Z" fill="url(#t6)"/><path d="M190.1,501.9L209.9,512.1L245.5,504.4L225.2,494.5Z" fill="url(#t7)"/><path d="M175.8,494.5L190.1,501.9L236.7,492.1L222.0,485.1Z" fill="url(#t8)"/><path d="M217.2,482.8L236.7,492.1L270.3,485.0L250.4,476.0Z" fill="url(#t9)"/><path d="M203.1,476.0L217.2,482.8L261.2,473.8L246.7,467.3Z" fill="url(#t10)"/><path d="M242.0,465.2L261.2,473.8L293.0,467.3L273.5,459.0Z" fill="url(#t11)"/><path d="M234.0,461.7L242.0,465.2L283.7,456.9L275.6,453.5Z" fill="url(#t12)"/><path d="M275.6,453.5L283.7,456.9L314.0,451.0L305.7,447.7Z" fill="url(#t13)"/><path d="M216.2,522.1L237.6,533.3L271.3,525.5L249.5,514.7Z" fill="url(#t14)"/><path d="M197.8,514.7L213.1,522.8L261.3,512.1L245.5,504.4Z" fill="url(#t15)"/><path d="M240.4,501.9L261.3,512.1L296.0,504.4L274.6,494.5Z" fill="url(#t16)"/><path d="M225.2,494.5L240.4,501.9L285.8,492.1L270.3,485.0Z" fill="url(#t17)"/><path d="M265.2,482.7L285.8,492.1L318.6,485.0L297.7,476.0Z" fill="url(#t18)"/><path d="M250.4,476.0L265.2,482.7L308.3,473.8L293.0,467.3Z" fill="url(#t19)"/><path d="M288.1,465.2L308.3,473.8L339.4,467.3L318.8,459.0Z" fill="url(#t20)"/><path d="M273.5,459.0L288.1,465.2L328.9,456.9L314.0,451.0Z" fill="url(#t21)"/><path d="M309.1,449.0L328.9,456.9L358.4,451.0L338.4,443.3Z" fill="url(#t22)"/><path d="M305.7,447.7L309.1,449.0L347.9,441.4L344.5,440.1Z" fill="url(#t23)"/><path d="M344.5,440.1L347.9,441.4L376.1,435.9L372.6,434.6Z" fill="url(#t24)"/><path d="M254.3,542.0L277.5,554.2L299.6,548.8L276.1,536.9Z" fill="url(#t25)"/><path d="M237.6,533.3L254.3,542.0L288.3,534.0L271.3,525.5Z" fill="url(#t26)"/><path d="M265.7,522.8L288.3,534.0L324.2,525.5L301.1,514.7Z" fill="url(#t27)"/><path d="M249.5,514.7L265.7,522.8L312.7,512.1L296.0,504.4Z" fill="url(#t28)"/><path d="M290.6,501.9L312.7,512.1L346.5,504.4L324.0,494.5Z" fill="url(#t29)"/><path d="M274.6,494.5L290.6,501.9L334.9,492.1L318.6,485.0Z" fill="url(#t30)"/><path d="M313.3,482.7L334.9,492.1L366.9,485.0L345.0,476.0Z" fill="url(#t31)"/><path d="M297.7,476.0L313.3,482.7L355.3,473.8L339.4,467.3Z" fill="url(#t32)"/><path d="M334.1,465.2L355.3,473.8L385.7,467.3L364.2,459.0Z" fill="url(#t33)"/><path d="M318.8,459.0L334.1,465.2L374.0,456.9L358.4,451.0Z" fill="url(#t34)"/><path d="M353.3,449.0L374.0,456.9L402.9,450.9L382.0,443.3Z" fill="url(#t35)"/><path d="M338.4,443.3L353.3,449.0L391.3,441.4L376.1,435.9Z" fill="url(#t36)"/><path d="M372.6,434.6L391.3,441.4L418.8,435.9L399.9,429.3Z" fill="url(#t37)"/><path d="M277.5,554.2L295.7,563.7L318.0,558.1L299.6,548.8Z" fill="url(#t38)"/><path d="M293.6,545.8L318.0,558.1L355.1,548.8L330.2,536.9Z" fill="url(#t39)"/><path d="M276.1,536.9L293.6,545.8L342.1,534.0L324.2,525.5Z" fill="url(#t40)"/><path d="M318.3,522.8L342.1,534.0L377.0,525.5L352.8,514.7Z" fill="url(#t41)"/><path d="M301.1,514.7L318.3,522.8L364.0,512.0L346.5,504.4Z" fill="url(#t42)"/><path d="M340.8,501.8L364.0,512.0L397.0,504.3L373.4,494.5Z" fill="url(#t43)"/><path d="M324.0,494.5L340.8,501.8L384.0,492.1L366.9,485.0Z" fill="url(#t44)"/><path d="M361.3,482.7L384.0,492.1L415.2,485.0L392.2,475.9Z" fill="url(#t45)"/><path d="M345.0,476.0L361.3,482.7L402.3,473.7L385.7,467.3Z" fill="url(#t46)"/><path d="M380.2,465.2L402.3,473.7L432.0,467.3L409.6,458.9Z" fill="url(#t47)"/><path d="M364.2,459.0L380.2,465.2L419.2,456.9L402.9,450.9Z" fill="url(#t48)"/><path d="M397.6,449.0L419.2,456.9L447.4,450.9L425.5,443.3Z" fill="url(#t49)"/><path d="M382.0,443.3L397.6,449.0L434.7,441.4L418.8,435.9Z" fill="url(#t50)"/><path d="M413.6,434.1L434.7,441.4L461.6,435.9L440.3,428.8Z" fill="url(#t51)"/><path d="M399.9,429.3L413.6,434.1L449.0,427.0L435.1,422.4Z" fill="url(#t52)"/><path d="M435.1,422.4L449.0,427.0L466.3,423.6L452.3,419.1Z" fill="url(#t53)"/><path d="M305.3,561.3L314.4,566.0L364.4,553.2L355.1,548.8Z" fill="url(#t54)"/><path d="M348.7,545.7L364.4,553.2L400.3,544.1L384.4,536.8Z" fill="url(#t55)"/><path d="M330.2,536.9L348.7,545.7L395.9,533.9L377.0,525.5Z" fill="url(#t56)"/><path d="M370.9,522.7L395.9,533.9L429.9,525.5L404.4,514.7Z" fill="url(#t57)"/><path d="M352.8,514.7L370.9,522.7L415.4,512.0L397.0,504.3Z" fill="url(#t58)"/><path d="M391.0,501.8L415.4,512.0L447.5,504.3L422.8,494.4Z" fill="url(#t59)"/><path d="M373.4,494.5L391.0,501.8L433.1,492.0L415.2,485.0Z" fill="url(#t60)"/><path d="M409.4,482.7L433.1,492.0L463.5,485.0L439.5,475.9Z" fill="url(#t61)"/><path d="M392.2,475.9L409.4,482.7L449.4,473.7L432.0,467.3Z" fill="url(#t62)"/><path d="M426.3,465.1L449.4,473.7L478.2,467.2L454.9,458.9Z" fill="url(#t63)"/><path d="M409.6,458.9L426.3,465.1L464.3,456.9L447.4,450.9Z" fill="url(#t64)"/><path d="M441.8,449.0L464.3,456.9L491.8,450.9L469.1,443.2Z" fill="url(#t65)"/><path d="M425.5,443.3L441.8,449.0L478.1,441.4L461.6,435.9Z" fill="url(#t66)"/><path d="M456.2,434.1L478.1,441.4L504.3,435.8L482.3,428.7Z" fill="url(#t67)"/><path d="M440.3,428.8L456.2,434.1L482.3,428.7L466.3,423.6Z" fill="url(#t68)"/><path d="M384.4,536.8L400.3,544.1L446.1,532.4L429.9,525.5Z" fill="url(#t69)"/><path d="M423.4,522.7L446.1,532.4L479.0,523.9L456.1,514.6Z" fill="url(#t70)"/><path d="M404.4,514.7L423.4,522.7L466.7,512.0L447.5,504.3Z" fill="url(#t71)"/><path d="M441.2,501.8L466.7,512.0L497.9,504.3L472.1,494.4Z" fill="url(#t72)"/><path d="M422.8,494.4L441.2,501.8L482.2,492.0L463.5,485.0Z" fill="url(#t73)"/><path d="M457.4,482.7L482.2,492.0L511.8,485.0L486.8,475.9Z" fill="url(#t74)"/><path d="M439.5,475.9L457.4,482.7L496.4,473.7L478.2,467.2Z" fill="url(#t75)"/><path d="M472.3,465.1L496.4,473.7L524.5,467.2L500.3,458.9Z" fill="url(#t76)"/><path d="M454.9,458.9L472.3,465.1L509.4,456.9L491.8,450.9Z" fill="url(#t77)"/><path d="M486.0,449.0L509.4,456.9L536.2,450.9L512.7,443.2Z" fill="url(#t78)"/><path d="M469.1,443.2L486.0,449.0L521.4,441.4L504.3,435.8Z" fill="url(#t79)"/><path d="M475.9,522.7L479.0,523.9L510.8,515.8L507.7,514.6Z" fill="url(#t80)"/><path d="M456.1,514.6L475.9,522.7L518.0,512.0L497.9,504.3Z" fill="url(#t81)"/><path d="M491.4,501.8L518.0,512.0L548.4,504.3L521.5,494.4Z" fill="url(#t82)"/><path d="M472.1,494.4L491.4,501.8L531.3,492.0L511.8,485.0Z" fill="url(#t83)"/><path d="M505.4,482.7L531.3,492.0L560.1,484.9L534.0,475.9Z" fill="url(#t84)"/><path d="M486.8,475.9L505.4,482.7L543.4,473.7L524.5,467.2Z" fill="url(#t85)"/><path d="M518.4,465.1L543.4,473.7L570.8,467.2L545.6,458.9Z" fill="url(#t86)"/><path d="M500.3,458.9L518.4,465.1L554.5,456.9L536.2,450.9Z" fill="url(#t87)"/><path d="M530.3,449.0L554.5,456.9L563.4,454.8L539.1,447.0Z" fill="url(#t88)"/><path d="M512.7,443.2L530.3,449.0L539.1,447.0L521.5,441.3Z" fill="url(#t89)"/><path d="M507.7,514.6L510.8,515.8L551.5,505.4L548.4,504.3Z" fill="url(#t90)"/><path d="M541.5,501.8L551.5,505.4L580.8,497.9L570.8,494.4Z" fill="url(#t91)"/><path d="M521.5,494.4L541.5,501.8L580.3,492.0L560.1,484.9Z" fill="url(#t92)"/><path d="M553.5,482.6L580.3,492.0L608.3,484.9L581.3,475.9Z" fill="url(#t93)"/><path d="M534.0,475.9L553.5,482.6L590.4,473.7L570.8,467.2Z" fill="url(#t94)"/><path d="M564.4,465.1L590.4,473.7L608.3,469.3L582.2,460.9Z" fill="url(#t95)"/><path d="M545.6,458.9L564.4,465.1L582.2,460.9L563.4,454.8Z" fill="url(#t96)"/><path d="M570.8,494.4L580.8,497.9L618.4,488.3L608.3,484.9Z" fill="url(#t97)"/><path d="M601.5,482.6L618.4,488.3L645.6,481.4L628.5,475.9Z" fill="url(#t98)"/><path d="M581.3,475.9L601.5,482.6L628.6,475.9L608.3,469.3Z" fill="url(#t99)"/><path d="M291.1,572.0L316.8,585.7L353.3,576.0L327.2,562.7Z" fill="url(#t100)"/><path d="M337.0,596.5L365.2,611.5L389.4,604.6L360.8,589.9Z" fill="url(#t101)"/><path d="M316.8,585.7L337.0,596.5L373.8,586.4L353.3,576.0Z" fill="url(#t102)"/><path d="M346.7,572.6L373.8,586.4L411.9,575.9L384.2,562.7Z" fill="url(#t103)"/><path d="M327.2,562.7L346.7,572.6L396.4,559.5L376.5,550.1Z" fill="url(#t104)"/><path d="M376.5,550.1L396.4,559.5L432.1,550.1L411.9,541.1Z" fill="url(#t105)"/><path d="M365.2,611.5L387.4,623.4L411.8,616.2L389.4,604.6Z" fill="url(#t106)"/><path d="M382.1,600.9L411.8,616.2L451.1,604.6L421.0,589.9Z" fill="url(#t107)"/><path d="M360.8,589.9L382.1,600.9L433.6,586.3L411.9,575.9Z" fill="url(#t108)"/><path d="M404.8,572.6L433.6,586.3L470.4,575.9L441.3,562.7Z" fill="url(#t109)"/><path d="M384.2,562.7L404.8,572.6L453.1,559.5L432.1,550.1Z" fill="url(#t110)"/><path d="M425.3,547.1L453.1,559.5L487.8,550.1L459.6,538.1Z" fill="url(#t111)"/><path d="M411.9,541.1L425.3,547.1L470.8,535.2L457.2,529.5Z" fill="url(#t112)"/><path d="M457.2,529.5L470.8,535.2L503.5,526.7L489.7,521.2Z" fill="url(#t113)"/><path d="M425.0,631.4L457.7,648.5L495.0,636.6L461.8,620.1Z" fill="url(#t114)"/><path d="M398.3,620.2L421.6,632.4L474.9,616.2L451.1,604.6Z" fill="url(#t115)"/><path d="M443.4,600.8L474.9,616.2L512.9,604.6L481.1,589.9Z" fill="url(#t116)"/><path d="M421.0,589.9L443.4,600.8L493.3,586.3L470.4,575.9Z" fill="url(#t117)"/><path d="M463.0,572.5L493.3,586.3L528.9,575.9L498.3,562.6Z" fill="url(#t118)"/><path d="M441.3,562.7L463.0,572.5L509.8,559.4L487.8,550.1Z" fill="url(#t119)"/><path d="M480.6,547.0L509.8,559.4L543.4,550.0L513.9,538.1Z" fill="url(#t120)"/><path d="M459.6,538.1L480.6,547.0L524.7,535.2L503.5,526.7Z" fill="url(#t121)"/><path d="M496.6,523.9L524.7,535.2L556.4,526.7L528.0,515.8Z" fill="url(#t122)"/><path d="M489.7,521.2L496.6,523.9L538.3,513.2L531.4,510.5Z" fill="url(#t123)"/><path d="M531.4,510.5L538.3,513.2L568.3,505.4L561.4,502.9Z" fill="url(#t124)"/><path d="M483.6,662.0L519.9,681.0L544.2,672.5L507.7,654.0Z" fill="url(#t125)"/><path d="M457.7,648.5L483.6,662.0L521.1,649.6L495.0,636.6Z" fill="url(#t126)"/><path d="M486.5,632.4L521.1,649.6L560.3,636.5L525.4,620.1Z" fill="url(#t127)"/><path d="M461.8,620.1L486.5,632.4L537.9,616.1L512.9,604.6Z" fill="url(#t128)"/><path d="M504.8,600.8L537.9,616.1L574.6,604.5L541.1,589.8Z" fill="url(#t129)"/><path d="M481.1,589.9L504.8,600.8L553.0,586.3L528.9,575.9Z" fill="url(#t130)"/><path d="M521.1,572.5L553.0,586.3L587.4,575.8L555.3,562.6Z" fill="url(#t131)"/><path d="M498.3,562.6L521.1,572.5L566.4,559.4L543.4,550.0Z" fill="url(#t132)"/><path d="M535.9,547.0L566.4,559.4L599.0,550.0L568.1,538.1Z" fill="url(#t133)"/><path d="M513.9,538.1L535.9,547.0L578.6,535.2L556.4,526.7Z" fill="url(#t134)"/><path d="M549.2,523.9L578.6,535.2L609.4,526.6L579.8,515.8Z" fill="url(#t135)"/><path d="M528.0,515.8L549.2,523.9L589.7,513.1L568.3,505.4Z" fill="url(#t136)"/><path d="M561.4,502.9L589.7,513.1L618.9,505.4L590.4,495.5Z" fill="url(#t137)"/><path d="M519.9,681.0L548.7,696.1L573.2,687.2L544.2,672.5Z" fill="url(#t138)"/><path d="M534.9,667.8L573.2,687.2L613.6,672.5L575.0,654.0Z" fill="url(#t139)"/><path d="M507.7,654.0L534.9,667.8L587.9,649.5L560.3,636.5Z" fill="url(#t140)"/><path d="M551.4,632.3L587.9,649.5L625.7,636.5L588.8,620.1Z" fill="url(#t141)"/><path d="M525.4,620.1L551.4,632.3L601.0,616.1L574.6,604.5Z" fill="url(#t142)"/><path d="M566.1,600.8L601.0,616.1L636.4,604.5L601.2,589.8Z" fill="url(#t143)"/><path d="M541.1,589.8L566.1,600.8L612.6,586.2L587.4,575.8Z" fill="url(#t144)"/><path d="M579.3,572.5L612.6,586.2L645.9,575.8L612.3,562.6Z" fill="url(#t145)"/><path d="M555.3,562.6L579.3,572.5L623.1,559.4L599.0,550.0Z" fill="url(#t146)"/><path d="M591.1,547.0L623.1,559.4L654.5,550.0L622.4,538.0Z" fill="url(#t147)"/><path d="M568.1,538.1L591.1,547.0L632.6,535.1L609.4,526.6Z" fill="url(#t148)"/><path d="M601.9,523.9L632.6,535.1L662.3,526.6L631.5,515.8Z" fill="url(#t149)"/><path d="M579.8,515.8L601.9,523.9L641.1,513.1L618.9,505.4Z" fill="url(#t150)"/><path d="M611.6,502.9L641.1,513.1L669.4,505.4L639.8,495.4Z" fill="url(#t151)"/><path d="M590.4,495.5L611.6,502.9L649.0,493.0L627.6,486.0Z" fill="url(#t152)"/><path d="M627.6,486.0L649.0,493.0L667.1,488.3L645.6,481.3Z" fill="url(#t153)"/><path d="M559.3,692.3L578.4,702.1L633.0,681.7L613.6,672.5Z" fill="url(#t154)"/><path d="M603.7,667.8L633.0,681.7L671.6,667.3L642.3,653.9Z" fill="url(#t155)"/><path d="M575.0,654.0L603.7,667.8L654.7,649.5L625.7,636.5Z" fill="url(#t156)"/><path d="M616.3,632.3L654.7,649.5L691.0,636.5L652.3,620.0Z" fill="url(#t157)"/><path d="M588.8,620.1L616.3,632.3L664.0,616.0L636.4,604.5Z" fill="url(#t158)"/><path d="M627.4,600.7L664.0,616.0L698.1,604.4L661.3,589.7Z" fill="url(#t159)"/><path d="M601.2,589.8L627.4,600.7L672.3,586.2L645.9,575.8Z" fill="url(#t160)"/><path d="M637.4,572.4L672.3,586.2L704.4,575.8L669.3,562.6Z" fill="url(#t161)"/><path d="M612.3,562.6L637.4,572.4L679.7,559.3L654.5,550.0Z" fill="url(#t162)"/><path d="M646.4,546.9L679.7,559.3L710.1,550.0L676.6,538.0Z" fill="url(#t163)"/><path d="M622.4,538.0L646.4,546.9L686.5,535.1L662.3,526.6Z" fill="url(#t164)"/><path d="M654.5,523.9L686.5,535.1L715.3,526.6L683.2,515.7Z" fill="url(#t165)"/><path d="M631.5,515.8L654.5,523.9L692.6,513.1L669.4,505.4Z" fill="url(#t166)"/><path d="M661.9,502.8L692.6,513.1L720.0,505.3L689.2,495.4Z" fill="url(#t167)"/><path d="M639.8,495.4L661.9,502.8L689.3,495.4L667.1,488.3Z" fill="url(#t168)"/><path d="M642.3,653.9L671.6,667.3L720.5,649.0L691.0,636.5Z" fill="url(#t169)"/><path d="M681.1,632.3L720.5,649.0L755.3,636.0L715.8,620.0Z" fill="url(#t170)"/><path d="M652.3,620.0L681.1,632.3L727.0,616.0L698.1,604.4Z" fill="url(#t171)"/><path d="M688.7,600.7L727.0,616.0L759.8,604.4L721.3,589.7Z" fill="url(#t172)"/><path d="M661.3,589.7L688.7,600.7L731.9,586.1L704.4,575.8Z" fill="url(#t173)"/><path d="M695.5,572.4L731.9,586.1L762.9,575.7L726.3,562.5Z" fill="url(#t174)"/><path d="M669.3,562.6L695.5,572.4L736.3,559.3L710.1,550.0Z" fill="url(#t175)"/><path d="M701.6,546.9L736.3,559.3L765.7,549.9L730.8,538.0Z" fill="url(#t176)"/><path d="M676.6,538.0L701.6,546.9L740.3,535.1L715.3,526.6Z" fill="url(#t177)"/><path d="M707.1,523.8L740.3,535.1L768.2,526.6L734.9,515.7Z" fill="url(#t178)"/><path d="M683.2,515.7L707.1,523.8L744.0,513.1L720.0,505.3Z" fill="url(#t179)"/><path d="M745.9,632.2L755.3,636.0L788.6,623.6L779.2,619.9Z" fill="url(#t180)"/><path d="M715.8,620.0L745.9,632.2L790.0,616.0L759.8,604.4Z" fill="url(#t181)"/><path d="M749.9,600.7L790.0,616.0L821.4,604.4L781.4,589.7Z" fill="url(#t182)"/><path d="M721.3,589.7L749.9,600.7L791.5,586.1L762.9,575.7Z" fill="url(#t183)"/><path d="M753.6,572.4L791.5,586.1L821.3,575.7L783.3,562.5Z" fill="url(#t184)"/><path d="M726.3,562.5L753.6,572.4L793.0,559.3L765.7,549.9Z" fill="url(#t185)"/><path d="M756.8,546.9L793.0,559.3L821.2,549.9L785.0,538.0Z" fill="url(#t186)"/><path d="M730.8,538.0L756.8,546.9L794.2,535.1L768.2,526.6Z" fill="url(#t187)"/><path d="M759.7,523.8L794.2,535.1L803.4,532.2L768.9,521.1Z" fill="url(#t188)"/><path d="M734.9,515.7L759.7,523.8L768.9,521.1L744.0,513.1Z" fill="url(#t189)"/><path d="M779.2,619.9L788.6,623.6L830.8,607.8L821.4,604.4Z" fill="url(#t190)"/><path d="M811.2,600.6L830.8,607.8L861.0,596.5L841.4,589.6Z" fill="url(#t191)"/><path d="M781.4,589.7L811.2,600.6L851.2,586.1L821.3,575.7Z" fill="url(#t192)"/><path d="M811.6,572.3L851.2,586.1L879.7,575.7L840.2,562.5Z" fill="url(#t193)"/><path d="M783.3,562.5L811.6,572.3L849.5,559.3L821.2,549.9Z" fill="url(#t194)"/><path d="M812.0,546.9L849.5,559.3L867.8,552.9L830.3,540.9Z" fill="url(#t195)"/><path d="M785.0,538.0L812.0,546.9L830.3,540.9L803.4,532.2Z" fill="url(#t196)"/><path d="M841.4,589.6L861.0,596.5L899.3,582.2L879.7,575.7Z" fill="url(#t197)"/><path d="M869.7,572.3L899.3,582.2L926.8,572.0L897.2,562.4Z" fill="url(#t198)"/><path d="M840.2,562.5L869.7,572.3L897.2,562.4L867.8,552.9Z" fill="url(#t199)"/><path d="M552.7,711.7L594.5,734.0L634.5,718.2L592.4,696.9Z" fill="url(#t200)"/><path d="M627.7,751.8L674.9,777.0L701.1,765.4L653.8,741.0Z" fill="url(#t201)"/><path d="M594.5,734.0L627.7,751.8L668.0,735.1L634.5,718.2Z" fill="url(#t202)"/><path d="M623.7,712.7L668.0,735.1L709.0,718.1L664.5,696.8Z" fill="url(#t203)"/><path d="M592.4,696.9L623.7,712.7L677.7,691.7L646.1,676.8Z" fill="url(#t204)"/><path d="M646.1,676.8L677.7,691.7L715.9,676.8L684.1,662.6Z" fill="url(#t205)"/><path d="M674.9,777.0L712.5,797.1L738.9,784.9L701.1,765.4Z" fill="url(#t206)"/><path d="M689.0,759.1L738.9,784.9L781.0,765.3L730.9,740.9Z" fill="url(#t207)"/><path d="M653.8,741.0L689.0,759.1L744.4,735.1L709.0,718.1Z" fill="url(#t208)"/><path d="M697.6,712.7L744.4,735.1L783.5,718.1L736.6,696.8Z" fill="url(#t209)"/><path d="M664.5,696.8L697.6,712.7L749.2,691.6L715.9,676.8Z" fill="url(#t210)"/><path d="M705.2,672.0L749.2,691.6L785.7,676.7L741.6,658.0Z" fill="url(#t211)"/><path d="M684.1,662.6L705.2,672.0L753.4,653.4L732.3,644.6Z" fill="url(#t212)"/><path d="M732.3,644.6L753.4,653.4L787.7,640.3L766.6,631.8Z" fill="url(#t213)"/><path d="M767.9,810.8L824.7,840.5L863.9,819.7L807.1,791.5Z" fill="url(#t214)"/><path d="M724.4,791.6L764.2,812.6L820.9,784.8L781.0,765.3Z" fill="url(#t215)"/><path d="M768.1,759.1L820.9,784.8L860.7,765.2L808.0,740.9Z" fill="url(#t216)"/><path d="M730.9,740.9L768.1,759.1L820.8,735.0L783.5,718.1Z" fill="url(#t217)"/><path d="M771.5,712.6L820.8,735.0L858.0,718.0L808.7,696.7Z" fill="url(#t218)"/><path d="M736.6,696.8L771.5,712.6L820.7,691.6L785.7,676.7Z" fill="url(#t219)"/><path d="M774.5,671.9L820.7,691.6L855.6,676.7L809.3,657.9Z" fill="url(#t220)"/><path d="M741.6,658.0L774.5,671.9L820.6,653.4L787.7,640.3Z" fill="url(#t221)"/><path d="M777.1,636.0L820.6,653.4L853.4,640.2L809.9,623.6Z" fill="url(#t222)"/><path d="M766.6,631.8L777.1,636.0L820.5,619.5L810.0,615.6Z" fill="url(#t223)"/><path d="M810.0,615.6L820.5,619.5L851.5,607.8L841.0,604.0Z" fill="url(#t224)"/><path d="M870.3,864.4L935.7,898.6L960.7,883.2L895.5,850.2Z" fill="url(#t225)"/><path d="M824.7,840.5L870.3,864.4L909.5,842.3L863.9,819.7Z" fill="url(#t226)"/><path d="M849.3,812.5L909.5,842.3L949.8,819.6L889.9,791.4Z" fill="url(#t227)"/><path d="M807.1,791.5L849.3,812.5L902.9,784.7L860.7,765.2Z" fill="url(#t228)"/><path d="M847.2,759.0L902.9,784.7L940.5,765.2L885.0,740.8Z" fill="url(#t229)"/><path d="M808.0,740.9L847.2,759.0L897.1,734.9L858.0,718.0Z" fill="url(#t230)"/><path d="M845.3,712.6L897.1,734.9L932.4,717.9L880.7,696.7Z" fill="url(#t231)"/><path d="M808.7,696.7L845.3,712.6L892.2,691.5L855.6,676.7Z" fill="url(#t232)"/><path d="M843.7,671.9L892.2,691.5L925.3,676.6L877.0,657.9Z" fill="url(#t233)"/><path d="M809.3,657.9L843.7,671.9L887.8,653.4L853.4,640.2Z" fill="url(#t234)"/><path d="M842.3,636.0L887.8,653.4L919.1,640.2L873.7,623.5Z" fill="url(#t235)"/><path d="M809.9,623.6L842.3,636.0L883.9,619.5L851.5,607.8Z" fill="url(#t236)"/><path d="M841.0,604.0L883.9,619.5L913.6,607.8L870.8,592.9Z" fill="url(#t237)"/><path d="M935.7,898.6L988.4,926.2L1013.3,909.8L960.7,883.2Z" fill="url(#t238)"/><path d="M943.9,874.7L1013.3,909.8L1053.7,883.1L984.8,850.1Z" fill="url(#t239)"/><path d="M895.5,850.2L943.9,874.7L997.9,842.2L949.8,819.6Z" fill="url(#t240)"/><path d="M934.4,812.4L997.9,842.2L1035.7,819.6L972.6,791.4Z" fill="url(#t241)"/><path d="M889.9,791.4L934.4,812.4L984.8,784.6L940.5,765.2Z" fill="url(#t242)"/><path d="M926.3,758.9L984.8,784.6L1020.2,765.1L962.0,740.7Z" fill="url(#t243)"/><path d="M885.0,740.8L926.3,758.9L973.5,734.9L932.4,717.9Z" fill="url(#t244)"/><path d="M919.2,712.5L973.5,734.9L1006.8,717.9L952.8,696.6Z" fill="url(#t245)"/><path d="M880.7,696.7L919.2,712.5L963.6,691.5L925.3,676.6Z" fill="url(#t246)"/><path d="M913.0,671.8L963.6,691.5L995.1,676.6L944.7,657.8Z" fill="url(#t247)"/><path d="M877.0,657.9L913.0,671.8L954.9,653.3L919.1,640.2Z" fill="url(#t248)"/><path d="M907.5,635.9L954.9,653.3L984.8,640.1L937.5,623.5Z" fill="url(#t249)"/><path d="M873.7,623.5L907.5,635.9L947.2,619.5L913.6,607.8Z" fill="url(#t250)"/><path d="M902.6,604.0L947.2,619.5L975.6,607.7L931.1,592.9Z" fill="url(#t251)"/><path d="M870.8,592.9L902.6,604.0L940.4,589.3L908.6,578.8Z" fill="url(#t252)"/><path d="M908.6,578.8L940.4,589.3L958.5,582.2L926.8,572.0Z" fill="url(#t253)"/><path d="M999.2,919.1L1030.2,935.1L1084.4,897.8L1053.7,883.1Z" fill="url(#t254)"/><path d="M1036.0,874.6L1084.4,897.8L1122.1,871.8L1074.1,850.0Z" fill="url(#t255)"/><path d="M984.8,850.1L1036.0,874.6L1086.3,842.1L1035.7,819.6Z" fill="url(#t256)"/><path d="M1019.5,812.3L1086.3,842.1L1121.5,819.5L1055.2,791.3Z" fill="url(#t257)"/><path d="M972.6,791.4L1019.5,812.3L1066.7,784.5L1020.2,765.1Z" fill="url(#t258)"/><path d="M1005.3,758.8L1066.7,784.5L1099.9,765.0L1039.0,740.6Z" fill="url(#t259)"/><path d="M962.0,740.7L1005.3,758.8L1049.8,734.8L1006.8,717.9Z" fill="url(#t260)"/><path d="M993.0,712.4L1049.8,734.8L1081.2,717.8L1024.8,696.5Z" fill="url(#t261)"/><path d="M952.8,696.6L993.0,712.4L1035.1,691.4L995.1,676.6Z" fill="url(#t262)"/><path d="M982.2,671.8L1035.1,691.4L1064.9,676.5L1012.3,657.8Z" fill="url(#t263)"/><path d="M944.7,657.8L982.2,671.8L1022.1,653.3L984.8,640.1Z" fill="url(#t264)"/><path d="M972.7,635.9L1022.1,653.3L1050.4,640.1L1001.3,623.4Z" fill="url(#t265)"/><path d="M937.5,623.5L972.7,635.9L1010.6,619.4L975.6,607.7Z" fill="url(#t266)"/><path d="M964.2,603.9L1010.6,619.4L1037.6,607.7L991.5,592.8Z" fill="url(#t267)"/><path d="M931.1,592.9L964.2,603.9L991.5,592.8L958.5,582.2Z" fill="url(#t268)"/><path d="M1074.1,850.0L1122.1,871.8L1168.8,839.6L1121.5,819.5Z" fill="url(#t269)"/><path d="M1104.5,812.2L1168.8,839.6L1201.6,817.0L1137.9,791.2Z" fill="url(#t270)"/><path d="M1055.2,791.3L1104.5,812.2L1148.6,784.5L1099.9,765.0Z" fill="url(#t271)"/><path d="M1084.3,758.8L1148.6,784.5L1179.6,764.9L1115.9,740.6Z" fill="url(#t272)"/><path d="M1039.0,740.6L1084.3,758.8L1126.1,734.7L1081.2,717.8Z" fill="url(#t273)"/><path d="M1066.8,712.4L1126.1,734.7L1155.6,717.8L1096.8,696.5Z" fill="url(#t274)"/><path d="M1024.8,696.5L1066.8,712.4L1106.5,691.4L1064.9,676.5Z" fill="url(#t275)"/><path d="M1051.4,671.7L1106.5,691.4L1134.6,676.5L1080.0,657.7Z" fill="url(#t276)"/><path d="M1012.3,657.8L1051.4,671.7L1089.2,653.2L1050.4,640.1Z" fill="url(#t277)"/><path d="M1037.9,635.8L1089.2,653.2L1116.1,640.0L1065.1,623.4Z" fill="url(#t278)"/><path d="M1001.3,623.4L1037.9,635.8L1073.9,619.4L1037.6,607.7Z" fill="url(#t279)"/><path d="M1189.5,812.1L1201.6,817.0L1232.4,795.8L1220.5,791.1Z" fill="url(#t280)"/><path d="M1137.9,791.2L1189.5,812.1L1230.5,784.4L1179.6,764.9Z" fill="url(#t281)"/><path d="M1163.3,758.7L1230.5,784.4L1259.3,764.9L1192.8,740.5Z" fill="url(#t282)"/><path d="M1115.9,740.6L1163.3,758.7L1202.4,734.7L1155.6,717.8Z" fill="url(#t283)"/><path d="M1140.5,712.3L1202.4,734.7L1230.0,717.7L1168.8,696.4Z" fill="url(#t284)"/><path d="M1096.8,696.5L1140.5,712.3L1177.9,691.3L1134.6,676.5Z" fill="url(#t285)"/><path d="M1120.6,671.7L1177.9,691.3L1204.3,676.4L1147.6,657.7Z" fill="url(#t286)"/><path d="M1080.0,657.7L1120.6,671.7L1156.3,653.2L1116.1,640.0Z" fill="url(#t287)"/><path d="M1103.0,635.8L1156.3,653.2L1164.9,648.7L1111.8,631.6Z" fill="url(#t288)"/><path d="M1065.1,623.4L1103.0,635.8L1111.8,631.6L1074.0,619.4Z" fill="url(#t289)"/><path d="M1220.5,791.1L1232.4,795.8L1271.0,769.2L1259.3,764.9Z" fill="url(#t290)"/><path d="M1242.2,758.6L1271.0,769.2L1298.2,750.5L1269.7,740.4Z" fill="url(#t291)"/><path d="M1192.8,740.5L1242.2,758.6L1278.6,734.6L1230.0,717.7Z" fill="url(#t292)"/><path d="M1214.3,712.2L1278.6,734.6L1304.3,717.6L1240.7,696.4Z" fill="url(#t293)"/><path d="M1168.8,696.4L1214.3,712.2L1249.2,691.2L1204.3,676.4Z" fill="url(#t294)"/><path d="M1189.8,671.6L1249.2,691.2L1265.9,681.2L1206.9,662.2Z" fill="url(#t295)"/><path d="M1147.6,657.7L1189.8,671.6L1206.9,662.2L1164.9,648.7Z" fill="url(#t296)"/><path d="M1269.7,740.4L1298.2,750.5L1332.3,727.0L1304.3,717.6Z" fill="url(#t297)"/><path d="M1288.0,712.2L1332.3,727.0L1356.3,710.4L1312.6,696.3Z" fill="url(#t298)"/><path d="M1240.7,696.4L1288.0,712.2L1312.7,696.3L1265.9,681.2Z" fill="url(#t299)"/><path d="M647.4,480.9L676.2,490.1L700.8,483.6L671.9,474.6Z" fill="url(#t300)"/><path d="M698.6,497.4L729.7,507.4L745.7,502.8L714.6,493.0Z" fill="url(#t301)"/><path d="M676.2,490.1L698.6,497.4L723.3,490.6L700.8,483.6Z" fill="url(#t302)"/><path d="M693.5,481.3L723.3,490.6L748.9,483.6L719.0,474.6Z" fill="url(#t303)"/><path d="M671.9,474.6L693.5,481.3L727.3,472.4L705.7,466.0Z" fill="url(#t304)"/><path d="M705.7,466.0L727.3,472.4L751.8,466.0L730.1,459.7Z" fill="url(#t305)"/><path d="M729.7,507.4L754.0,515.2L770.0,510.4L745.7,502.8Z" fill="url(#t306)"/><path d="M737.8,500.3L770.0,510.4L796.0,502.8L763.7,493.0Z" fill="url(#t307)"/><path d="M714.6,493.0L737.8,500.3L772.2,490.6L748.9,483.6Z" fill="url(#t308)"/><path d="M741.3,481.3L772.2,490.6L797.0,483.6L766.1,474.6Z" fill="url(#t309)"/><path d="M719.0,474.6L741.3,481.3L774.1,472.4L751.8,466.0Z" fill="url(#t310)"/><path d="M744.5,463.9L774.1,472.4L797.9,466.0L768.2,457.7Z" fill="url(#t311)"/><path d="M730.1,459.7L744.5,463.9L776.0,455.7L761.6,451.7Z" fill="url(#t312)"/><path d="M761.6,451.7L776.0,455.7L798.7,449.7L784.3,445.9Z" fill="url(#t313)"/><path d="M788.5,520.4L823.4,531.4L847.5,523.8L812.6,513.0Z" fill="url(#t314)"/><path d="M761.2,513.0L786.3,521.0L821.1,510.4L796.0,502.8Z" fill="url(#t315)"/><path d="M787.8,500.3L821.1,510.4L846.2,502.8L812.8,493.0Z" fill="url(#t316)"/><path d="M763.7,493.0L787.8,500.3L821.0,490.6L797.0,483.6Z" fill="url(#t317)"/><path d="M789.1,481.3L821.0,490.6L845.0,483.6L813.1,474.6Z" fill="url(#t318)"/><path d="M766.1,474.6L789.1,481.3L821.0,472.4L797.9,466.0Z" fill="url(#t319)"/><path d="M790.4,463.9L821.0,472.4L844.0,465.9L813.4,457.7Z" fill="url(#t320)"/><path d="M768.2,457.7L790.4,463.9L820.9,455.7L798.7,449.7Z" fill="url(#t321)"/><path d="M791.5,447.8L820.9,455.7L843.0,449.7L813.6,442.1Z" fill="url(#t322)"/><path d="M784.3,445.9L791.5,447.8L820.8,440.2L813.6,438.4Z" fill="url(#t323)"/><path d="M813.6,438.4L820.8,440.2L842.1,434.8L834.9,433.0Z" fill="url(#t324)"/><path d="M850.7,540.1L888.7,552.2L904.0,546.8L866.1,535.0Z" fill="url(#t325)"/><path d="M823.4,531.4L850.7,540.1L874.7,532.1L847.5,523.8Z" fill="url(#t326)"/><path d="M838.6,521.0L874.7,532.1L900.0,523.7L863.9,513.0Z" fill="url(#t327)"/><path d="M812.6,513.0L838.6,521.0L872.2,510.4L846.2,502.8Z" fill="url(#t328)"/><path d="M837.7,500.3L872.2,510.4L896.4,502.7L862.0,492.9Z" fill="url(#t329)"/><path d="M812.8,493.0L837.7,500.3L869.9,490.5L845.0,483.6Z" fill="url(#t330)"/><path d="M836.9,481.3L869.9,490.5L893.1,483.5L860.2,474.6Z" fill="url(#t331)"/><path d="M813.1,474.6L836.9,481.3L867.8,472.4L844.0,465.9Z" fill="url(#t332)"/><path d="M836.2,463.9L867.8,472.4L890.0,465.9L858.5,457.7Z" fill="url(#t333)"/><path d="M813.4,457.7L836.2,463.9L865.8,455.7L843.0,449.7Z" fill="url(#t334)"/><path d="M835.5,447.8L865.8,455.7L887.2,449.7L857.0,442.1Z" fill="url(#t335)"/><path d="M813.6,442.1L835.5,447.8L864.0,440.2L842.1,434.8Z" fill="url(#t336)"/><path d="M834.9,433.0L864.0,440.2L884.6,434.7L855.6,427.7Z" fill="url(#t337)"/><path d="M888.7,552.2L918.4,561.6L933.7,556.0L904.0,546.8Z" fill="url(#t338)"/><path d="M894.4,543.8L933.7,556.0L959.2,546.8L919.9,535.0Z" fill="url(#t339)"/><path d="M866.1,535.0L894.4,543.8L928.2,532.1L900.0,523.7Z" fill="url(#t340)"/><path d="M890.9,521.0L928.2,532.1L952.6,523.7L915.3,513.0Z" fill="url(#t341)"/><path d="M863.9,513.0L890.9,521.0L923.3,510.4L896.4,502.7Z" fill="url(#t342)"/><path d="M887.7,500.2L923.3,510.4L946.6,502.7L911.1,492.9Z" fill="url(#t343)"/><path d="M862.0,492.9L887.7,500.2L918.7,490.5L893.1,483.5Z" fill="url(#t344)"/><path d="M884.7,481.3L918.7,490.5L941.1,483.5L907.2,474.5Z" fill="url(#t345)"/><path d="M860.2,474.6L884.7,481.3L914.5,472.4L890.0,465.9Z" fill="url(#t346)"/><path d="M882.0,463.8L914.5,472.4L936.1,465.9L903.7,457.7Z" fill="url(#t347)"/><path d="M858.5,457.7L882.0,463.8L910.7,455.6L887.2,449.7Z" fill="url(#t348)"/><path d="M879.6,447.8L910.7,455.6L931.5,449.7L900.4,442.1Z" fill="url(#t349)"/><path d="M857.0,442.1L879.6,447.8L907.2,440.2L884.6,434.7Z" fill="url(#t350)"/><path d="M877.3,433.0L907.2,440.2L927.2,434.7L897.3,427.7Z" fill="url(#t351)"/><path d="M855.6,427.7L877.3,433.0L903.9,425.9L882.2,420.9Z" fill="url(#t352)"/><path d="M882.2,420.9L903.9,425.9L912.7,423.6L891.0,418.6Z" fill="url(#t353)"/><path d="M925.0,559.2L944.5,565.3L978.6,552.6L959.2,546.8Z" fill="url(#t354)"/><path d="M949.2,543.8L978.6,552.6L1003.1,543.5L973.8,535.0Z" fill="url(#t355)"/><path d="M919.9,535.0L949.2,543.8L981.8,532.1L952.6,523.7Z" fill="url(#t356)"/><path d="M943.1,521.0L981.8,532.1L1005.2,523.7L966.7,513.0Z" fill="url(#t357)"/><path d="M915.3,513.0L943.1,521.0L974.3,510.3L946.6,502.7Z" fill="url(#t358)"/><path d="M937.6,500.2L974.3,510.3L996.8,502.7L960.2,492.9Z" fill="url(#t359)"/><path d="M911.1,492.9L937.6,500.2L967.5,490.5L941.1,483.5Z" fill="url(#t360)"/><path d="M932.5,481.2L967.5,490.5L989.2,483.5L954.2,474.5Z" fill="url(#t361)"/><path d="M907.2,474.5L932.5,481.2L961.3,472.3L936.1,465.9Z" fill="url(#t362)"/><path d="M927.9,463.8L961.3,472.3L982.2,465.9L948.8,457.6Z" fill="url(#t363)"/><path d="M903.7,457.7L927.9,463.8L955.6,455.6L931.5,449.7Z" fill="url(#t364)"/><path d="M923.6,447.8L955.6,455.6L975.7,449.7L943.8,442.1Z" fill="url(#t365)"/><path d="M900.4,442.1L923.6,447.8L950.4,440.2L927.2,434.7Z" fill="url(#t366)"/><path d="M919.6,432.9L950.4,440.2L965.6,435.9L935.0,428.8Z" fill="url(#t367)"/><path d="M897.3,427.7L919.6,432.9L935.0,428.8L912.7,423.6Z" fill="url(#t368)"/><path d="M973.8,535.0L1003.1,543.5L1034.3,531.8L1005.2,523.7Z" fill="url(#t369)"/><path d="M995.4,521.0L1034.3,531.8L1056.8,523.4L1018.0,512.9Z" fill="url(#t370)"/><path d="M966.7,513.0L995.4,521.0L1025.4,510.3L996.8,502.7Z" fill="url(#t371)"/><path d="M987.5,500.2L1025.4,510.3L1047.0,502.7L1009.3,492.9Z" fill="url(#t372)"/><path d="M960.2,492.9L987.5,500.2L1016.4,490.5L989.2,483.5Z" fill="url(#t373)"/><path d="M980.3,481.2L1016.4,490.5L1037.2,483.5L1001.3,474.5Z" fill="url(#t374)"/><path d="M954.2,474.5L980.3,481.2L1008.1,472.3L982.2,465.9Z" fill="url(#t375)"/><path d="M973.7,463.8L1008.1,472.3L1028.2,465.9L993.9,457.6Z" fill="url(#t376)"/><path d="M948.8,457.6L973.7,463.8L1000.5,455.6L975.7,449.7Z" fill="url(#t377)"/><path d="M967.6,447.8L1000.5,455.6L1019.9,449.7L987.1,442.1Z" fill="url(#t378)"/><path d="M943.8,442.1L967.6,447.8L989.4,441.4L965.6,435.9Z" fill="url(#t379)"/><path d="M1047.6,520.9L1056.8,523.4L1078.5,515.3L1069.3,512.9Z" fill="url(#t380)"/><path d="M1018.0,512.9L1047.6,520.9L1076.4,510.3L1047.0,502.7Z" fill="url(#t381)"/><path d="M1037.4,500.2L1076.4,510.3L1097.2,502.6L1058.3,492.9Z" fill="url(#t382)"/><path d="M1009.3,492.9L1037.4,500.2L1065.2,490.5L1037.2,483.5Z" fill="url(#t383)"/><path d="M1028.1,481.2L1065.2,490.5L1085.2,483.5L1048.3,474.5Z" fill="url(#t384)"/><path d="M1001.3,474.5L1028.1,481.2L1054.9,472.3L1028.2,465.9Z" fill="url(#t385)"/><path d="M1019.5,463.8L1054.9,472.3L1074.3,465.9L1039.0,457.6Z" fill="url(#t386)"/><path d="M993.9,457.6L1019.5,463.8L1045.4,455.6L1019.9,449.7Z" fill="url(#t387)"/><path d="M1011.6,447.7L1045.4,455.6L1047.6,454.9L1013.9,447.1Z" fill="url(#t388)"/><path d="M987.1,442.1L1011.6,447.7L1013.9,447.1L989.4,441.4Z" fill="url(#t389)"/><path d="M1069.3,512.9L1078.5,515.3L1106.2,504.9L1097.2,502.6Z" fill="url(#t390)"/><path d="M1087.3,500.2L1106.2,504.9L1126.2,497.5L1107.4,492.8Z" fill="url(#t391)"/><path d="M1058.3,492.9L1087.3,500.2L1114.0,490.5L1085.2,483.5Z" fill="url(#t392)"/><path d="M1075.8,481.2L1114.0,490.5L1133.2,483.5L1095.3,474.5Z" fill="url(#t393)"/><path d="M1048.3,474.5L1075.8,481.2L1101.6,472.3L1074.3,465.9Z" fill="url(#t394)"/><path d="M1065.3,463.8L1101.6,472.3L1110.1,469.4L1073.9,461.0Z" fill="url(#t395)"/><path d="M1039.0,457.6L1065.3,463.8L1073.9,461.0L1047.6,454.9Z" fill="url(#t396)"/><path d="M1107.4,492.8L1126.2,497.5L1151.9,487.9L1133.2,483.5Z" fill="url(#t397)"/><path d="M1123.6,481.2L1151.9,487.9L1166.5,482.4L1138.3,475.9Z" fill="url(#t398)"/><path d="M1095.3,474.5L1123.6,481.2L1138.3,475.9L1110.1,469.4Z" fill="url(#t399)"/><path d="M928.6,571.3L971.2,585.0L995.6,575.3L953.2,562.1Z" fill="url(#t400)"/><path d="M1004.6,595.7L1051.3,610.7L1066.9,603.8L1020.3,589.2Z" fill="url(#t401)"/><path d="M971.2,585.0L1004.6,595.7L1028.9,585.6L995.6,575.3Z" fill="url(#t402)"/><path d="M984.8,571.9L1028.9,585.6L1054.0,575.2L1010.1,562.1Z" fill="url(#t403)"/><path d="M953.2,562.1L984.8,571.9L1018.3,558.9L986.9,549.5Z" fill="url(#t404)"/><path d="M986.9,549.5L1018.3,558.9L1042.3,549.5L1011.0,540.5Z" fill="url(#t405)"/><path d="M1051.3,610.7L1088.1,622.6L1103.6,615.4L1066.9,603.8Z" fill="url(#t406)"/><path d="M1055.0,600.1L1103.6,615.4L1128.5,603.8L1080.3,589.1Z" fill="url(#t407)"/><path d="M1020.3,589.2L1055.0,600.1L1088.4,585.6L1054.0,575.2Z" fill="url(#t408)"/><path d="M1042.8,571.9L1088.4,585.6L1112.3,575.2L1067.0,562.0Z" fill="url(#t409)"/><path d="M1010.1,562.1L1042.8,571.9L1074.8,558.8L1042.3,549.5Z" fill="url(#t410)"/><path d="M1031.8,546.5L1074.8,558.8L1097.8,549.5L1055.0,537.5Z" fill="url(#t411)"/><path d="M1011.0,540.5L1031.8,546.5L1062.5,534.6L1041.9,529.0Z" fill="url(#t412)"/><path d="M1041.9,529.0L1062.5,534.6L1084.6,526.2L1064.1,520.7Z" fill="url(#t413)"/><path d="M1135.5,630.5L1189.2,647.6L1211.7,635.7L1158.3,619.3Z" fill="url(#t414)"/><path d="M1095.1,619.3L1133.4,631.5L1166.4,615.3L1128.5,603.8Z" fill="url(#t415)"/><path d="M1116.2,600.1L1166.4,615.3L1190.0,603.8L1140.2,589.1Z" fill="url(#t416)"/><path d="M1080.3,589.1L1116.2,600.1L1147.9,585.6L1112.3,575.2Z" fill="url(#t417)"/><path d="M1100.8,571.9L1147.9,585.6L1170.7,575.2L1123.8,562.0Z" fill="url(#t418)"/><path d="M1067.0,562.0L1100.8,571.9L1131.3,558.8L1097.8,549.5Z" fill="url(#t419)"/><path d="M1086.9,546.4L1131.3,558.8L1153.2,549.4L1109.1,537.5Z" fill="url(#t420)"/><path d="M1055.0,537.5L1086.9,546.4L1116.3,534.6L1084.6,526.2Z" fill="url(#t421)"/><path d="M1074.3,523.4L1116.3,534.6L1137.4,526.1L1095.7,515.3Z" fill="url(#t422)"/><path d="M1064.1,520.7L1074.3,523.4L1102.6,512.7L1092.5,510.1Z" fill="url(#t423)"/><path d="M1092.5,510.1L1102.6,512.7L1123.0,504.9L1113.0,502.4Z" fill="url(#t424)"/><path d="M1231.7,661.0L1291.3,680.0L1305.1,671.5L1245.8,653.1Z" fill="url(#t425)"/><path d="M1189.2,647.6L1231.7,661.0L1253.7,648.6L1211.7,635.7Z" fill="url(#t426)"/><path d="M1198.0,631.5L1253.7,648.6L1276.8,635.6L1221.6,619.3Z" fill="url(#t427)"/><path d="M1158.3,619.3L1198.0,631.5L1229.3,615.3L1190.0,603.8Z" fill="url(#t428)"/><path d="M1177.3,600.0L1229.3,615.3L1251.5,603.7L1200.0,589.1Z" fill="url(#t429)"/><path d="M1140.2,589.1L1177.3,600.0L1207.4,585.5L1170.7,575.2Z" fill="url(#t430)"/><path d="M1158.7,571.8L1207.4,585.5L1229.0,575.2L1180.7,562.0Z" fill="url(#t431)"/><path d="M1123.8,562.0L1158.7,571.8L1187.8,558.8L1153.2,549.4Z" fill="url(#t432)"/><path d="M1142.0,546.4L1187.8,558.8L1208.6,549.4L1163.1,537.5Z" fill="url(#t433)"/><path d="M1109.1,537.5L1142.0,546.4L1170.0,534.6L1137.4,526.1Z" fill="url(#t434)"/><path d="M1126.8,523.4L1170.0,534.6L1190.2,526.1L1147.3,515.3Z" fill="url(#t435)"/><path d="M1095.7,515.3L1126.8,523.4L1153.9,512.6L1123.0,504.9Z" fill="url(#t436)"/><path d="M1113.0,502.4L1153.9,512.6L1173.5,504.9L1132.8,495.0Z" fill="url(#t437)"/><path d="M1291.3,680.0L1338.6,695.0L1352.0,686.1L1305.1,671.5Z" fill="url(#t438)"/><path d="M1289.9,666.8L1352.0,686.1L1374.2,671.4L1312.9,653.0Z" fill="url(#t439)"/><path d="M1245.8,653.1L1289.9,666.8L1320.3,648.6L1276.8,635.6Z" fill="url(#t440)"/><path d="M1262.7,631.5L1320.3,648.6L1341.9,635.6L1284.9,619.2Z" fill="url(#t441)"/><path d="M1221.6,619.3L1262.7,631.5L1292.1,615.3L1251.5,603.7Z" fill="url(#t442)"/><path d="M1238.4,600.0L1292.1,615.3L1313.1,603.7L1259.9,589.0Z" fill="url(#t443)"/><path d="M1200.0,589.1L1238.4,600.0L1266.9,585.5L1229.0,575.2Z" fill="url(#t444)"/><path d="M1216.7,571.8L1266.9,585.5L1287.3,575.1L1237.5,561.9Z" fill="url(#t445)"/><path d="M1180.7,562.0L1216.7,571.8L1244.2,558.7L1208.6,549.4Z" fill="url(#t446)"/><path d="M1197.0,546.4L1244.2,558.7L1264.0,549.4L1217.2,537.5Z" fill="url(#t447)"/><path d="M1163.1,537.5L1197.0,546.4L1223.8,534.6L1190.2,526.1Z" fill="url(#t448)"/><path d="M1179.3,523.4L1223.8,534.6L1243.0,526.1L1198.8,515.3Z" fill="url(#t449)"/><path d="M1147.3,515.3L1179.3,523.4L1205.2,512.6L1173.5,504.9Z" fill="url(#t450)"/><path d="M1163.1,502.4L1205.2,512.6L1223.9,504.9L1182.1,495.0Z" fill="url(#t451)"/><path d="M1132.8,495.0L1163.1,502.4L1188.2,492.6L1158.1,485.5Z" fill="url(#t452)"/><path d="M1158.1,485.5L1188.2,492.6L1196.5,489.4L1166.5,482.4Z" fill="url(#t453)"/><path d="M1344.4,691.1L1371.8,699.7L1401.1,679.5L1374.2,671.4Z" fill="url(#t454)"/><path d="M1358.5,666.7L1401.1,679.5L1422.0,665.2L1379.9,653.0Z" fill="url(#t455)"/><path d="M1312.9,653.0L1358.5,666.7L1386.8,648.5L1341.9,635.6Z" fill="url(#t456)"/><path d="M1327.3,631.4L1386.8,648.5L1406.9,635.5L1348.1,619.2Z" fill="url(#t457)"/><path d="M1284.9,619.2L1327.3,631.4L1354.9,615.2L1313.1,603.7Z" fill="url(#t458)"/><path d="M1299.5,600.0L1354.9,615.2L1374.5,603.7L1319.8,589.0Z" fill="url(#t459)"/><path d="M1259.9,589.0L1299.5,600.0L1326.3,585.5L1287.3,575.1Z" fill="url(#t460)"/><path d="M1274.6,571.8L1326.3,585.5L1345.5,575.1L1294.3,561.9Z" fill="url(#t461)"/><path d="M1237.5,561.9L1274.6,571.8L1300.7,558.7L1264.0,549.4Z" fill="url(#t462)"/><path d="M1252.1,546.3L1300.7,558.7L1319.4,549.4L1271.3,537.4Z" fill="url(#t463)"/><path d="M1217.2,537.5L1252.1,546.3L1277.5,534.5L1243.0,526.1Z" fill="url(#t464)"/><path d="M1231.8,523.3L1277.5,534.5L1295.8,526.1L1250.4,515.2Z" fill="url(#t465)"/><path d="M1198.8,515.3L1231.8,523.3L1256.5,512.6L1223.9,504.9Z" fill="url(#t466)"/><path d="M1213.2,502.4L1256.5,512.6L1270.5,506.5L1227.5,496.6Z" fill="url(#t467)"/><path d="M1182.1,495.0L1213.2,502.4L1227.5,496.6L1196.5,489.4Z" fill="url(#t468)"/><path d="M1379.9,653.0L1422.0,665.2L1448.3,647.1L1406.9,635.5Z" fill="url(#t469)"/><path d="M1391.9,631.4L1448.3,647.1L1467.0,634.2L1411.3,619.1Z" fill="url(#t470)"/><path d="M1348.1,619.2L1391.9,631.4L1417.6,615.2L1374.5,603.7Z" fill="url(#t471)"/><path d="M1360.6,599.9L1417.6,615.2L1436.0,603.6L1379.6,589.0Z" fill="url(#t472)"/><path d="M1319.8,589.0L1360.6,599.9L1385.8,585.4L1345.5,575.1Z" fill="url(#t473)"/><path d="M1332.5,571.7L1385.8,585.4L1403.8,575.1L1351.1,561.9Z" fill="url(#t474)"/><path d="M1294.3,561.9L1332.5,571.7L1357.1,558.7L1319.4,549.4Z" fill="url(#t475)"/><path d="M1307.2,546.3L1357.1,558.7L1374.8,549.3L1325.3,537.4Z" fill="url(#t476)"/><path d="M1271.3,537.4L1307.2,546.3L1331.2,534.5L1295.8,526.1Z" fill="url(#t477)"/><path d="M1284.2,523.3L1331.2,534.5L1348.5,526.0L1301.9,515.2Z" fill="url(#t478)"/><path d="M1250.4,515.2L1284.2,523.3L1304.0,514.3L1270.5,506.5Z" fill="url(#t479)"/><path d="M1456.5,631.3L1467.0,634.2L1484.9,621.8L1474.6,619.1Z" fill="url(#t480)"/><path d="M1411.3,619.1L1456.5,631.3L1480.4,615.1L1436.0,603.6Z" fill="url(#t481)"/><path d="M1421.6,599.9L1480.4,615.1L1497.5,603.6L1439.4,588.9Z" fill="url(#t482)"/><path d="M1379.6,589.0L1421.6,599.9L1445.2,585.4L1403.8,575.1Z" fill="url(#t483)"/><path d="M1390.4,571.7L1445.2,585.4L1462.1,575.0L1407.9,561.9Z" fill="url(#t484)"/><path d="M1351.1,561.9L1390.4,571.7L1413.5,558.7L1374.8,549.3Z" fill="url(#t485)"/><path d="M1362.2,546.3L1413.5,558.7L1430.2,549.3L1379.4,537.4Z" fill="url(#t486)"/><path d="M1325.3,537.4L1362.2,546.3L1384.9,534.5L1348.5,526.0Z" fill="url(#t487)"/><path d="M1336.7,523.3L1384.9,534.5L1386.9,533.5L1338.7,522.3Z" fill="url(#t488)"/><path d="M1301.9,515.2L1336.7,523.3L1338.7,522.3L1304.0,514.3Z" fill="url(#t489)"/><path d="M1474.6,619.1L1484.9,621.8L1507.7,606.1L1497.5,603.6Z" fill="url(#t490)"/><path d="M1482.7,599.8L1507.7,606.1L1523.9,595.0L1499.2,588.9Z" fill="url(#t491)"/><path d="M1439.4,588.9L1482.7,599.8L1504.6,585.4L1462.1,575.0Z" fill="url(#t492)"/><path d="M1448.2,571.7L1504.6,585.4L1520.3,575.0L1464.6,561.8Z" fill="url(#t493)"/><path d="M1407.9,561.9L1448.2,571.7L1470.0,558.6L1430.2,549.3Z" fill="url(#t494)"/><path d="M1417.2,546.3L1470.0,558.6L1477.0,554.4L1424.6,542.2Z" fill="url(#t495)"/><path d="M1379.4,537.4L1417.2,546.3L1424.6,542.2L1386.9,533.5Z" fill="url(#t496)"/><path d="M1499.2,588.9L1523.9,595.0L1544.6,580.7L1520.3,575.0Z" fill="url(#t497)"/><path d="M1506.1,571.6L1544.6,580.7L1556.2,572.7L1518.1,563.9Z" fill="url(#t498)"/><path d="M1464.6,561.8L1506.1,571.6L1518.1,563.9L1477.0,554.4Z" fill="url(#t499)"/></g>
</svg></div></div>
<div style="left:0px;top:998.4px;width:1920px;height:17px;background:#f1f1f1"></div>
<svg class="i" style="left:2px;top:1003px" width="12" height="12" viewBox="0 0 12 12"><circle cx="6" cy="6.500" r="5" fill="#e4e4e4" stroke="#999" stroke-width="1"/><circle cx="6" cy="5.500" r="1.600" fill="#aaa"/><path d="M6 7v3" stroke="#aaa" stroke-width="1.200"/></svg>
<svg class="i" style="left:24px;top:1003px" width="13" height="12" viewBox="0 0 13 12"><circle cx="6.500" cy="6.500" r="4.800" fill="#fff" stroke="#222" stroke-width="1.300"/><circle cx="6.500" cy="4.300" r=".9" fill="#222"/><path d="M6.500 6v3.500" stroke="#222" stroke-width="1.600"/></svg>
<div style="left:45px;top:1006px;width:1px;height:8px;background:#999"></div>
<span style="left:53.30px;top:1005.89px;font-size:9.7px;line-height:9.7px;color:#111;letter-spacing:0.062px;">Select objects. Shift to extend select. Drag mouse to select multiple.</span>
<div style="left:1690px;top:1004px;width:1px;height:10px;background:#888"></div>
<span style="left:1698.50px;top:1005.88px;font-size:10.3px;line-height:10.3px;color:#111;letter-spacing:-0.343px;">Measurements</span>
<div style="left:1770px;top:1001.5px;width:150px;height:14px;background:#fff;border-left:1px solid #ddd;border-top:1px solid #ddd"></div>
<div style="left:1583.3px;top:114px;width:337px;height:884px;background:#f0f0f0"></div>
<div style="left:1586.3px;top:116px;width:1.2px;height:881px;background:#fbfbfb"></div>
<div style="left:1587.8px;top:116px;width:323px;height:13.5px;background:linear-gradient(#b9cbe1,#d6e2f0 70%,#e4ecf5)"></div>
<span style="left:1590.90px;top:119.87px;font-size:8.9px;line-height:8.9px;color:#3a4658;letter-spacing:-0.123px;">Default Tray</span>
<svg class="i" style="left:1897px;top:119px" width="8" height="10" viewBox="0 0 8 10"><rect x="2.500" y="1" width="3" height="4.500" fill="#fff" stroke="#111" stroke-width="1"/><path d="M1 6h6M4 6v3" stroke="#111" stroke-width="1"/></svg>
<div style="left:1911.4px;top:118.3px;width:10px;height:10px;background:#e08a80;border:1px solid #7a2a24;box-sizing:border-box;border-radius:1.500px"></div>
<span style="left:1913.50px;top:119.68px;font-size:9px;line-height:9px;color:#fff;font-weight:bold;">x</span>
<div style="left:1911px;top:129.5px;width:9px;height:868px;background:#f4f4f4;border-left:1px solid #dcdcdc;box-sizing:border-box"></div>
<svg class="i" style="left:1912px;top:132px" width="8" height="6" viewBox="0 0 8 6"><path d="M1 5l3-3.500L7 5z" fill="#444"/></svg>
<div style="left:1912.5px;top:140px;width:8px;height:16px;background:linear-gradient(90deg,#f6f6f6,#d8d8d8);border:1px solid #b0b0b0;box-sizing:border-box"></div>
<svg class="i" style="left:1912px;top:990px" width="8" height="6" viewBox="0 0 8 6"><path d="M1 1l3 3.500L7 1z" fill="#444"/></svg>
<div style="left:1587.8px;top:129.8px;width:323px;height:13.2px;background:linear-gradient(#efefef 0,#dcdcdc 45%,#c4c4c4 100%);border-top:1px solid #c9c9c9;border-bottom:1px solid #a9a9a9;box-sizing:border-box"></div>
<svg class="i" style="left:1593.5px;top:133.1px" width="7" height="7" viewBox="0 0 7 7"><path d="M0 .5h6.500L3.250 6z" fill="#111"/></svg>
<span style="left:1604.30px;top:133.37px;font-size:8.9px;line-height:8.9px;color:#111;letter-spacing:0.130px;">Entity Info</span>
<div style="left:1899px;top:131.8px;width:9.5px;height:9.5px;border:1px solid #555;background:#f4f4f4;box-sizing:border-box;border-radius:1px"></div>
<span style="left:1901.30px;top:133.45px;font-size:7.5px;line-height:7.5px;color:#222;font-weight:bold;">x</span>
<span style="left:1594.60px;top:150.15px;font-size:8.8px;line-height:8.8px;color:#111;font-weight:bold;letter-spacing:0.026px;">5 Groups (5 in model)</span>
<div style="left:1591px;top:164px;width:318.5px;height:1px;background:#c4c4c4"></div>
<div style="left:1591px;top:165px;width:318.5px;height:1px;background:#fafafa"></div>
<div style="left:1596.5px;top:170px;width:34px;height:36.4px;background:#fff;border:1px solid #c0c0c0;box-sizing:border-box"></div>
<svg class="i" style="left:1597.5px;top:171px" width="32" height="34.4" viewBox="0 0 32 34.4"><path d="M0 0v34.400h32z" fill="#9fb0be"/></svg>
<span style="left:1658.00px;top:174.07px;font-size:8.9px;line-height:8.9px;color:#111;letter-spacing:-0.289px;">Layer:</span>
<div style="left:1682.6px;top:170.3px;width:222.8px;height:15px;border:1px solid #6c6c6c;border-radius:2.500px;background:linear-gradient(#f4f4f4 0,#ebebeb 45%,#d9d9d9 55%,#cfcfcf 100%);box-sizing:border-box"></div>
<span style="left:1685.40px;top:174.27px;font-size:8.9px;line-height:8.9px;color:#111;letter-spacing:-0.351px;">Stone</span>
<svg class="i" style="left:1895.5px;top:175.5px" width="8" height="6" viewBox="0 0 8 6"><path d="M.5 .5h6L3.500 4.800z" fill="#111"/></svg>
<span style="left:1647.00px;top:189.27px;font-size:8.9px;line-height:8.9px;color:#111;letter-spacing:-0.235px;">Instance:</span>
<div style="left:1682.6px;top:186.6px;width:222.8px;height:15px;background:#fff"></div>
<span style="left:1660.50px;top:207.77px;font-size:8.9px;line-height:8.9px;color:#111;letter-spacing:-0.253px;">Type:</span>
<div style="left:1683.3px;top:205px;width:221.2px;height:13.3px;border:1px solid #6c6c6c;border-radius:1.500px;background:linear-gradient(#f4f4f4 0,#ececec 50%,#dcdcdc 100%);box-sizing:border-box"></div>
<div style="left:1891.7px;top:206px;width:12px;height:11.3px;border-left:1px solid #6c6c6c;background:linear-gradient(#f8f8f8,#e0e0e0)"></div>
<svg class="i" style="left:1894.5px;top:209.5px" width="8" height="6" viewBox="0 0 8 6"><path d="M.5 .5h6L3.500 4.800z" fill="#111"/></svg>
<span style="left:1686.00px;top:208.07px;font-size:8.9px;line-height:8.9px;color:#111;letter-spacing:-0.161px;">Type: &lt;undefined&gt;</span>
<span style="left:1650.50px;top:226.87px;font-size:8.9px;line-height:8.9px;color:#111;letter-spacing:-0.331px;">Toggles:</span>
<svg class="i" style="left:1684.5px;top:225px" width="13" height="11" viewBox="0 0 13 11"><path d="M.8 5.500C3.500 1.500 9.500 1.500 12.200 5.500 9.500 9.500 3.500 9.500.8 5.500z" fill="#fff" stroke="#111" stroke-width="1.100"/><circle cx="6.500" cy="5.500" r="2.200" fill="#111"/></svg>
<svg class="i" style="left:1702px;top:223.5px" width="12" height="13" viewBox="0 0 12 13"><rect x="1" y="6" width="6.500" height="5.500" fill="#fff" stroke="#111" stroke-width="1.200"/><path d="M5.500 6V3.500a2.200 2.200 0 0 1 4.400 0V5" fill="none" stroke="#111" stroke-width="1.200"/></svg>
<div style="left:1718.5px;top:222px;width:1px;height:16px;background:#ddd"></div>
<svg class="i" style="left:1721px;top:224px" width="12" height="13" viewBox="0 0 12 13"><path d="M1.500 4l5-2.500 4 2-.5 5-4.500 3L2.500 9z" fill="#fff" stroke="#111" stroke-width="1"/><path d="M1.500 4l5-2.500 4 2L6 6z" fill="#111"/></svg>
<svg class="i" style="left:1738px;top:224px" width="12" height="13" viewBox="0 0 12 13"><path d="M2 3l4.500-1.500 3.500 6-1 3.500-4.500 1z" fill="#fff" stroke="#111" stroke-width="1"/><path d="M5 11.500l4-1.200 1-3.300-2 .5z" fill="#111"/></svg>
<div style="left:1587.8px;top:278.6px;width:323px;height:12.8px;background:linear-gradient(#efefef 0,#dcdcdc 45%,#c4c4c4 100%);border-top:1px solid #c9c9c9;border-bottom:1px solid #a9a9a9;box-sizing:border-box"></div>
<svg class="i" style="left:1593.5px;top:281.9px" width="7" height="7" viewBox="0 0 7 7"><path d="M0 .5h6.500L3.250 6z" fill="#111"/></svg>
<span style="left:1604.30px;top:282.17px;font-size:8.9px;line-height:8.9px;color:#111;letter-spacing:-0.011px;">Materials</span>
<div style="left:1899px;top:280.6px;width:9.5px;height:9.5px;border:1px solid #555;background:#f4f4f4;box-sizing:border-box;border-radius:1px"></div>
<span style="left:1901.30px;top:282.25px;font-size:7.5px;line-height:7.5px;color:#222;font-weight:bold;">x</span>
<div style="left:1589px;top:293.4px;width:49.4px;height:53px;background:#fff;border:1px solid #c0c0c0;box-sizing:border-box"></div>
<svg class="i" style="left:1590px;top:294.4px" width="47.4" height="51" viewBox="0 0 47.4 51"><path d="M0 0v51h47.400z" fill="#9fb0be"/></svg>
<div style="left:1641.4px;top:294px;width:248px;height:13.4px;border:1px solid #cfcfcf;background:#f2f2f2;box-sizing:border-box;box-shadow:inset 1px 1px 0 #dcdcdc"></div>
<span style="left:1645.50px;top:297.57px;font-size:8.9px;line-height:8.9px;color:#8a8a8a;letter-spacing:-0.243px;">Default</span>
<svg class="i" style="left:1896px;top:295px" width="11" height="12" viewBox="0 0 11 12"><path d="M3 0h5L5.500 2.800z" fill="#111"/><rect x="1.500" y="4.500" width="8" height="7" fill="#111"/><rect x="4" y="7" width="3" height="2.500" fill="#fff"/></svg>
<svg class="i" style="left:1894px;top:311px" width="15" height="15" viewBox="0 0 15 15"><path d="M2 5l8-3.500 4 2-1 7-8 3.500-3-2.500z" fill="#111"/><path d="M4 5.500l6-2.500 2 1-6 2.800z" fill="#fff"/><circle cx="4.500" cy="10.500" r="3.200" fill="#fff" stroke="#111" stroke-width="1"/><path d="M3 10.500h3M4.500 9v3" stroke="#111" stroke-width="1"/></svg>
<svg class="i" style="left:1892.5px;top:329px" width="17" height="17" viewBox="0 0 17 17"><rect width="17" height="17" fill="#e6e6cc"/><path d="M0 0v17h17z" fill="#7a76d4"/></svg>
<div style="left:1589px;top:348px;width:321px;height:1px;background:#c4c4c4"></div>
<div style="left:1589px;top:349px;width:321px;height:1px;background:#fafafa"></div>
<div style="left:1589px;top:367.6px;width:321px;height:1px;background:#c0c0c0"></div>
<div style="left:1589px;top:368.6px;width:321px;height:1px;background:#fafafa"></div>
<div style="left:1589px;top:352.4px;width:31.5px;height:16.3px;background:#f0f0f0;border:1px solid #d0d0d0;border-bottom:none;border-radius:2px 2px 0 0;box-sizing:border-box"></div>
<span style="left:1592.70px;top:356.47px;font-size:8.9px;line-height:8.9px;color:#111;letter-spacing:-0.456px;">Select</span>
<div style="left:1621.5px;top:354.4px;width:28.5px;height:13.2px;background:linear-gradient(#f2f2f2,#d4d4d4);border:1px solid #aaa;border-bottom:none;box-sizing:border-box"></div>
<span style="left:1624.50px;top:357.47px;font-size:8.9px;line-height:8.9px;color:#111;letter-spacing:-0.459px;">Edit</span>
<svg class="i" style="left:1894px;top:350.5px" width="15" height="15" viewBox="0 0 15 15"><path d="M2 13.500l1-3L9.500 4l2 2L5 12.500z" fill="#555" stroke="#111" stroke-width=".8"/><path d="M9 3l2-2 3 3-2 2z" fill="#111"/></svg>
<div style="left:1589px;top:371.5px;width:321px;height:19.5px;background:#f4f4f4"></div>
<svg class="i" style="left:1595.5px;top:375px" width="10" height="11" viewBox="0 0 10 11"><path d="M.8 5.500L5 1.500V4h4v3H5v2.500z" fill="#fff" stroke="#9a9a9a" stroke-width=".9"/></svg>
<svg class="i" style="left:1613.5px;top:375px" width="10" height="11" viewBox="0 0 10 11"><path d="M9.200 5.500L5 1.500V4H1v3h4v2.500z" fill="#fff" stroke="#9a9a9a" stroke-width=".9"/></svg>
<svg class="i" style="left:1629.5px;top:373px" width="14" height="14" viewBox="0 0 14 14"><path d="M1 7.500L7 1.500l6 6" fill="none" stroke="#111" stroke-width="1.400"/><path d="M3 7v6h8V7" fill="#fff" stroke="#111" stroke-width="1.300"/><rect x="5.700" y="9" width="2.600" height="4" fill="#111"/></svg>
<div style="left:1647px;top:374px;width:244px;height:15px;background:#fff"></div>
<span style="left:1649.80px;top:377.07px;font-size:8.9px;line-height:8.9px;color:#111;letter-spacing:-0.343px;">Bluestone</span>
<svg class="i" style="left:1882px;top:380px" width="7" height="5" viewBox="0 0 7 5"><path d="M.5 .5h6L3.500 4.200z" fill="#111"/></svg>
<svg class="i" style="left:1895px;top:374px" width="13" height="13" viewBox="0 0 13 13"><rect x="1" y="3" width="4.500" height="7.500" fill="#9cc4e8" stroke="#111" stroke-width="1"/><path d="M6.500 1.500l5.500 5-5.500 5z" fill="#111"/></svg>
<div style="left:1650.8px;top:388px;width:224px;height:1.1px;background:#111"></div>
<div style="left:1589px;top:391px;width:321px;height:1px;background:#d8d8d8"></div>
<div style="left:1588.5px;top:392px;width:323.5px;height:195px;background:#fff"></div>
<div style="left:1592.2px;top:393.2px;width:37.4px;height:37.4px;border:1px solid #c8c8c8;background:#fff;box-sizing:border-box"></div>
<div style="left:1597.8px;top:395px;width:26.2px;height:33.8px;background:linear-gradient(100deg,#8c8c8a,#7e7e7c 40%,#8c8c8a 70%,#7e7e7c)"></div>
<div style="left:1631.5px;top:393.2px;width:37.4px;height:37.4px;border:1px solid #c8c8c8;background:#fff;box-sizing:border-box"></div>
<div style="left:1633.5px;top:395px;width:33.5px;height:33.8px;background:linear-gradient(100deg,#c9d0cc,#b4beba 40%,#c9d0cc 70%,#b4beba)"></div>
<div style="left:1670.8px;top:393.2px;width:37.4px;height:37.4px;border:1px solid #c8c8c8;background:#fff;box-sizing:border-box"></div>
<div style="left:1675px;top:395px;width:28.5px;height:33.8px;background:linear-gradient(100deg,#9d8f7e,#8a7a68 40%,#9d8f7e 70%,#8a7a68)"></div>
<div style="left:1709.6px;top:393.2px;width:37.4px;height:37.4px;border:1px solid #c8c8c8;background:#fff;box-sizing:border-box"></div>
<div style="left:1721.5px;top:395px;width:14px;height:33.8px;background:linear-gradient(100deg,#ab9e86,#97896e 40%,#ab9e86 70%,#97896e)"></div>
<div style="left:1748.5px;top:393.2px;width:37.4px;height:37.4px;border:1px solid #c8c8c8;background:#fff;box-sizing:border-box"></div>
<div style="left:1758.3px;top:395px;width:18px;height:33.8px;background:linear-gradient(100deg,#cfc5a4,#bdb18c 40%,#cfc5a4 70%,#bdb18c)"></div>
<div style="left:1589px;top:586.5px;width:321px;height:2px;background:#d4d4d4"></div>
<div style="left:1587.8px;top:589px;width:323px;height:13.5px;background:linear-gradient(#efefef 0,#dcdcdc 45%,#c4c4c4 100%);border-top:1px solid #c9c9c9;border-bottom:1px solid #a9a9a9;box-sizing:border-box"></div>
<svg class="i" style="left:1593.5px;top:592.3px" width="7" height="7" viewBox="0 0 7 7"><path d="M0 .5h6.500L3.250 6z" fill="#111"/></svg>
<span style="left:1604.30px;top:592.57px;font-size:8.9px;line-height:8.9px;color:#111;letter-spacing:0.104px;">Components</span>
<div style="left:1899px;top:591px;width:9.5px;height:9.5px;border:1px solid #555;background:#f4f4f4;box-sizing:border-box;border-radius:1px"></div>
<span style="left:1901.30px;top:592.65px;font-size:7.5px;line-height:7.5px;color:#222;font-weight:bold;">x</span>
<div style="left:1589.5px;top:604.5px;width:49px;height:52.5px;border:1px solid #bdbdbd;background:#f2f2f2;box-sizing:border-box"></div>
<svg class="i" style="left:1597px;top:612px" width="34" height="36" viewBox="0 0 34 36"><path d="M4 7l15-4 11 5-2 20-13 5L6 27z" fill="#e0e0e0" stroke="#b4b4b4" stroke-width="1.500"/><path d="M4 7l11 5 15-4M15 12v21" fill="none" stroke="#b0b0b0" stroke-width="1.500"/><path d="M6 8l9 4.500 12-3.500-9-4z" fill="#fff"/><path d="M15 13v18l12-4.500V9.500z" fill="#b8b8b8"/></svg>
<div style="left:1641.2px;top:605.4px;width:248.2px;height:13.6px;border:1px solid #cfcfcf;background:#f1f1f1;box-sizing:border-box;box-shadow:inset 1px 1px 0 #dcdcdc"></div>
<div style="left:1641.2px;top:620.3px;width:248.2px;height:36.4px;border:1px solid #cfcfcf;background:#f1f1f1;box-sizing:border-box;box-shadow:inset 1px 1px 0 #dcdcdc"></div>
<svg class="i" style="left:1895.5px;top:606.5px" width="11" height="12" viewBox="0 0 11 12"><path d="M3 0h5L5.500 2.800z" fill="#111"/><rect x="1.500" y="4.500" width="8" height="7" fill="#111"/><rect x="4" y="7" width="3" height="2.500" fill="#fff"/></svg>
<div style="left:1589px;top:658.5px;width:321px;height:1px;background:#c4c4c4"></div>
<div style="left:1589px;top:659.5px;width:321px;height:1px;background:#fafafa"></div>
<div style="left:1589px;top:679.5px;width:321px;height:1px;background:#c0c0c0"></div>
<div style="left:1589px;top:680.5px;width:321px;height:1px;background:#fafafa"></div>
<div style="left:1589px;top:664.3px;width:31.5px;height:16.3px;background:#f0f0f0;border:1px solid #d0d0d0;border-bottom:none;border-radius:2px 2px 0 0;box-sizing:border-box"></div>
<span style="left:1592.70px;top:668.37px;font-size:8.9px;line-height:8.9px;color:#111;letter-spacing:-0.456px;">Select</span>
<div style="left:1621.5px;top:666.3px;width:28.5px;height:13.2px;background:linear-gradient(#f2f2f2,#d4d4d4);border:1px solid #aaa;border-bottom:none;box-sizing:border-box"></div>
<span style="left:1624.50px;top:669.37px;font-size:8.9px;line-height:8.9px;color:#111;letter-spacing:-0.459px;">Edit</span>
<div style="left:1651px;top:666.3px;width:39.5px;height:13.2px;background:linear-gradient(#f2f2f2,#d4d4d4);border:1px solid #aaa;border-bottom:none;box-sizing:border-box"></div>
<span style="left:1654.00px;top:669.37px;font-size:8.9px;line-height:8.9px;color:#111;letter-spacing:-0.311px;">Statistics</span>
<div style="left:1591.3px;top:682.4px;width:24px;height:15.5px;border:1px solid #e2e2e2;box-sizing:border-box"></div>
<svg class="i" style="left:1597px;top:685px" width="13" height="10" viewBox="0 0 13 10"><path d="M1 1.500h3v3H1zM1 6h3v3H1zM5.500 2.500h3M5.500 7.500h3" fill="none" stroke="#222" stroke-width="1"/><path d="M9.500 6.500h3L11 8.300z" fill="#222"/></svg>
<svg class="i" style="left:1618.5px;top:683.5px" width="14" height="14" viewBox="0 0 14 14"><path d="M1 7.500L7 1.500l6 6" fill="none" stroke="#111" stroke-width="1.400"/><path d="M3 7v6h8V7" fill="#fff" stroke="#111" stroke-width="1.300"/><rect x="5.700" y="9" width="2.600" height="4" fill="#111"/></svg>
<div style="left:1633.5px;top:682.4px;width:11px;height:15.5px;border:1px solid #e2e2e2;box-sizing:border-box"></div>
<svg class="i" style="left:1635.5px;top:686px" width="8" height="6" viewBox="0 0 8 6"><path d="M.5 .5h6.500L3.750 5z" fill="#111"/></svg>
<div style="left:1646.2px;top:683.8px;width:234.5px;height:13.6px;background:#fff;border:1px solid #9c9c9c;box-sizing:border-box"></div>
<span style="left:1649.30px;top:687.27px;font-size:8.9px;line-height:8.9px;color:#9a9a9a;letter-spacing:-0.502px;">3D Warehouse</span>
<div style="left:1881px;top:683.8px;width:13.5px;height:13.6px;background:#f6f6f6;border:1px solid #bdbdbd;box-sizing:border-box"></div>
<svg class="i" style="left:1883px;top:686px" width="10" height="10" viewBox="0 0 10 10"><circle cx="6" cy="4" r="2.600" fill="#fff" stroke="#222" stroke-width="1"/><path d="M4 6L1 9" stroke="#222" stroke-width="1.300"/></svg>
<svg class="i" style="left:1897px;top:684.5px" width="13" height="13" viewBox="0 0 13 13"><rect x="1" y="3" width="4.500" height="7.500" fill="#9cc4e8" stroke="#111" stroke-width="1"/><path d="M6.500 1.500l5.500 5-5.500 5z" fill="#111"/></svg>
<div style="left:1589px;top:699.5px;width:321px;height:1px;background:#d8d8d8"></div>
<div style="left:1589.5px;top:701px;width:311px;height:80px;background:#fff"></div>
<div style="left:1900.5px;top:701px;width:10.5px;height:80px;background:#f0f0f0;border-left:1px solid #e0e0e0;box-sizing:border-box"></div>
<svg class="i" style="left:1902px;top:704px" width="8" height="6" viewBox="0 0 8 6"><path d="M1 5l3-3.500L7 5z" fill="#555"/></svg>
<div style="left:1901.5px;top:711.5px;width:9px;height:12px;background:linear-gradient(90deg,#f4f4f4,#d4d4d4);border:1px solid #b0b0b0;box-sizing:border-box"></div>
<div style="left:1593px;top:708.5px;width:47.3px;height:47.5px;border:1px solid #c8c8c8;background:#fff;box-sizing:border-box"></div>
<svg class="i" style="left:1594px;top:709.5px" width="45.3" height="45.5" viewBox="0 0 45.3 45.5"><path d="M2 27c5-4 9-5 13-5l3 4 8-2 6 3 2 8-4 4-16-1-5-4z" fill="#b4551c"/><path d="M8 38l8 4 18-1 6-3-4 5-20 1z" fill="#2a3448"/><path d="M18 17c3-3 8-3 10 1l2 8-7 4-5-4z" fill="#6a9cd8"/><circle cx="24" cy="14" r="4" fill="#ecd9a8"/><circle cx="32" cy="17" r="4" fill="#e8e0c8"/><path d="M28 22l8 1 3 8-6 5-5-6z" fill="#e8954a"/><path d="M36 37h3.500l2.500 2.500-2.500 2.500H36z" fill="#2aa43a"/></svg>
<span style="left:1644.00px;top:711.40px;font-size:9.1px;line-height:9.1px;color:#111;font-weight:bold;letter-spacing:-0.051px;">2D Girls Dog</span>
<span style="left:1644.00px;top:721.77px;font-size:8.9px;line-height:8.9px;color:#222;letter-spacing:-0.360px;">by SketchUp</span>
<span style="left:1644.00px;top:732.27px;font-size:8.9px;line-height:8.9px;color:#222;letter-spacing:-0.334px;">Use the Interact Tool to change the color of the girls' clothes and the</span>
<span style="left:1644.00px;top:742.27px;font-size:8.9px;line-height:8.9px;color:#222;letter-spacing:-0.284px;">dog's fur.</span>
<div style="left:1593px;top:764.7px;width:47.3px;height:16.3px;border:1px solid #c8c8c8;border-bottom:none;background:#fff;box-sizing:border-box"></div>
<svg class="i" style="left:1594px;top:766px" width="45" height="15" viewBox="0 0 45 15"><path d="M1 12l16-5 22 3 5 5M17 7v8M1 12v3" fill="none" stroke="#999" stroke-width=".8"/></svg>
<span style="left:1644.00px;top:766.90px;font-size:9.1px;line-height:9.1px;color:#111;font-weight:bold;letter-spacing:-0.086px;">3D Printer Build Volume</span>
<div style="left:1644px;top:776px;width:60px;height:5px;overflow:hidden"><span style="left:0;top:0;font-size:8.9px;line-height:9px;color:#222">by SketchUp C</span></div>
<div style="left:1589.5px;top:781px;width:321px;height:1px;background:#cfcfcf"></div>
<div style="left:1589.5px;top:782px;width:321px;height:14.5px;background:#f6f6f6"></div>
<svg class="i" style="left:1593.5px;top:783.5px" width="10" height="11" viewBox="0 0 10 11"><path d="M.8 5.500L5 1.500V4h4v3H5v2.500z" fill="#fff" stroke="#9a9a9a" stroke-width=".9"/></svg>
<svg class="i" style="left:1897.5px;top:783.5px" width="10" height="11" viewBox="0 0 10 11"><path d="M9.200 5.500L5 1.500V4H1v3h4v2.500z" fill="#fff" stroke="#9a9a9a" stroke-width=".9"/></svg>
<span style="left:1712.50px;top:784.74px;font-size:8.7px;line-height:8.7px;color:#8a8a8a;letter-spacing:-0.452px;">Components Sampler</span>
<div style="left:1589px;top:797px;width:321px;height:2.5px;background:#d4d4d4"></div>
<div style="left:1587.8px;top:800.5px;width:323px;height:13.3px;background:linear-gradient(#efefef 0,#dcdcdc 45%,#c4c4c4 100%);border-top:1px solid #c9c9c9;border-bottom:1px solid #a9a9a9;box-sizing:border-box"></div>
<svg class="i" style="left:1593.5px;top:803.8px" width="7" height="7" viewBox="0 0 7 7"><path d="M0 .5h6.500L3.250 6z" fill="#111"/></svg>
<span style="left:1604.30px;top:804.07px;font-size:8.9px;line-height:8.9px;color:#111;letter-spacing:-0.206px;">Styles</span>
<div style="left:1899px;top:802.5px;width:9.5px;height:9.5px;border:1px solid #555;background:#f4f4f4;box-sizing:border-box;border-radius:1px"></div>
<span style="left:1901.30px;top:804.15px;font-size:7.5px;line-height:7.5px;color:#222;font-weight:bold;">x</span>
<div style="left:1589.3px;top:816.2px;width:49.4px;height:52px;border:1px solid #bdbdbd;background:#fff;box-sizing:border-box"></div>
<svg class="i" style="left:1590.3px;top:817.2px" width="47.4" height="50" viewBox="0 0 47.4 50"><path d="M4 20l14-9 14-3v8l-12 5v22l-15-7z" fill="#fff" stroke="#222" stroke-width="1.300"/><path d="M4 20l16 3M18 11l2 12" fill="none" stroke="#222" stroke-width="1"/><path d="M4 20l14-9 14-3-12 5z" fill="#ccc" stroke="#222" stroke-width="1"/><path d="M24 22h20v19c-6 4-14 4-20 0z" fill="#b6cfdf" stroke="#222" stroke-width="1.200"/><path d="M14 22c4-9 16-10 22-2l3-2v9h-9l3-3c-4-5-11-4-13 1z" fill="#8a8a8a"/><path d="M36 30c-2 8-14 11-21 4l-3 2v-9h9l-3 3c4 4 10 3 12-2z" fill="#9a9a9a"/><path d="M2 4l1.500 36M20 45l12 5" stroke="#99b" stroke-width=".7"/></svg>
<div style="left:1641px;top:817px;width:248.2px;height:14px;background:#fff;border-bottom:1px solid #d8d8d8;box-sizing:border-box"></div>
<span style="left:1645.80px;top:819.47px;font-size:8.9px;line-height:8.9px;color:#222;letter-spacing:-0.377px;">Construction Documentation Style</span>
<div style="left:1641px;top:832px;width:248.2px;height:36.7px;background:#fff"></div>
<span style="left:1645.80px;top:834.77px;font-size:8.9px;line-height:8.9px;color:#222;letter-spacing:-0.334px;">Default face colors. Profile Edges. White background.</span>
<svg class="i" style="left:1895.5px;top:817px" width="12" height="12" viewBox="0 0 12 12"><rect x="1.500" y="1" width="9" height="6.500" fill="#111"/><rect x="3.500" y="2.500" width="5" height="3" fill="#fff"/><path d="M3 11.500h6L6 8.500z" fill="#111"/></svg>
<svg class="i" style="left:1893.5px;top:834px" width="16" height="15" viewBox="0 0 16 15"><path d="M8 3l5-1.500 2 1.500v5l-5 2-2-1.500z" fill="#6a6a9a" stroke="#334" stroke-width=".6"/><rect x="11" y="4" width="3.500" height="4" fill="#3838b8"/><circle cx="4.800" cy="9.500" r="3.700" fill="#fff" stroke="#111" stroke-width="1.100"/><path d="M3 9.500h3.600M4.800 7.700v3.600" stroke="#111" stroke-width="1.100"/></svg>
<svg class="i" style="left:1895px;top:854px" width="13" height="13" viewBox="0 0 13 13"><path d="M2 5.500A5 5 0 0 1 11 4.500M11 7.500A5 5 0 0 1 2 8.500" fill="none" stroke="#111" stroke-width="1.400"/><path d="M11.800 1.500v4h-4zM1.200 11.500v-4h4z" fill="#111"/></svg>
<div style="left:1589px;top:870.5px;width:321px;height:1px;background:#c4c4c4"></div>
<div style="left:1589px;top:871.5px;width:321px;height:1px;background:#fafafa"></div>
<div style="left:1589px;top:891.2px;width:321px;height:1px;background:#c0c0c0"></div>
<div style="left:1589px;top:892.2px;width:321px;height:1px;background:#fafafa"></div>
<div style="left:1589px;top:876px;width:32px;height:16.3px;background:#f0f0f0;border:1px solid #d0d0d0;border-bottom:none;border-radius:2px 2px 0 0;box-sizing:border-box"></div>
<span style="left:1592.70px;top:880.07px;font-size:8.9px;line-height:8.9px;color:#111;letter-spacing:-0.456px;">Select</span>
<div style="left:1622px;top:878px;width:28.5px;height:13.2px;background:linear-gradient(#f2f2f2,#d4d4d4);border:1px solid #aaa;border-bottom:none;box-sizing:border-box"></div>
<span style="left:1625.00px;top:881.07px;font-size:8.9px;line-height:8.9px;color:#111;letter-spacing:-0.459px;">Edit</span>
<div style="left:1651.5px;top:878px;width:29px;height:13.2px;background:linear-gradient(#f2f2f2,#d4d4d4);border:1px solid #aaa;border-bottom:none;box-sizing:border-box"></div>
<span style="left:1654.50px;top:881.07px;font-size:8.9px;line-height:8.9px;color:#111;letter-spacing:-0.780px;">Mix</span>
<div style="left:1589px;top:893.8px;width:321px;height:19.7px;background:#f4f4f4"></div>
<svg class="i" style="left:1595.5px;top:897.3px" width="10" height="11" viewBox="0 0 10 11"><path d="M.8 5.500L5 1.500V4h4v3H5v2.500z" fill="#fff" stroke="#9a9a9a" stroke-width=".9"/></svg>
<svg class="i" style="left:1613.5px;top:897.3px" width="10" height="11" viewBox="0 0 10 11"><path d="M9.200 5.500L5 1.500V4H1v3h4v2.500z" fill="#fff" stroke="#9a9a9a" stroke-width=".9"/></svg>
<svg class="i" style="left:1629.5px;top:895.3px" width="14" height="14" viewBox="0 0 14 14"><path d="M1 7.500L7 1.500l6 6" fill="none" stroke="#111" stroke-width="1.400"/><path d="M3 7v6h8V7" fill="#fff" stroke="#111" stroke-width="1.300"/><rect x="5.700" y="9" width="2.600" height="4" fill="#111"/></svg>
<div style="left:1647px;top:896.3px;width:244px;height:15.2px;background:#fff"></div>
<span style="left:1649.80px;top:899.37px;font-size:8.9px;line-height:8.9px;color:#111;letter-spacing:-0.279px;">Default Styles</span>
<svg class="i" style="left:1882px;top:902.3px" width="7" height="5" viewBox="0 0 7 5"><path d="M.5 .5h6L3.500 4.200z" fill="#111"/></svg>
<svg class="i" style="left:1895px;top:896.3px" width="13" height="13" viewBox="0 0 13 13"><rect x="1" y="3" width="4.500" height="7.500" fill="#9cc4e8" stroke="#111" stroke-width="1"/><path d="M6.500 1.500l5.500 5-5.500 5z" fill="#111"/></svg>
<div style="left:1589px;top:913px;width:321px;height:1px;background:#d8d8d8"></div>
<div style="left:1588.5px;top:914px;width:323.5px;height:84px;background:#fff"></div>
<div style="left:1592.9px;top:916.3px;width:36.8px;height:37px;border:1px solid #c4c4c4;background:linear-gradient(#9cc4e4 0,#9cc4e4 45%,#c4c0b8 60%,#c4c0b8 100%);box-sizing:border-box"></div>
<svg class="i" style="left:1593.9px;top:917.3px" width="34.8" height="35" viewBox="0 0 34.8 35"><path d="M3 13l10-6 9-2.500v6l-8 3v15L3 24z" fill="#fff" stroke="#222" stroke-width="1"/><path d="M3 13l10-6 9-2.500-8 5z" fill="#c8c8c8" stroke="#222" stroke-width=".8"/><path d="M14 9.500v19" stroke="#222" stroke-width=".8"/><path d="M18 15h13.500v14c-4 2.500-9.500 2.500-13.500 0z" fill="#b4cfe0" stroke="#222" stroke-width="1"/><path d="M2 24l12 6" stroke="#c88" stroke-width=".7"/><path d="M1.500 3l1.500 21" stroke="#88a" stroke-width=".6"/><path d="M14 29l20-13" stroke="#8b8" stroke-width=".6"/></svg>
<div style="left:1631.6px;top:916.3px;width:36.8px;height:37px;border:1px solid #c4c4c4;background:linear-gradient(#d6d6d6 0,#d6d6d6 45%,#c8c4c0 60%,#c8c4c0 100%);box-sizing:border-box"></div>
<svg class="i" style="left:1632.6px;top:917.3px" width="34.8" height="35" viewBox="0 0 34.8 35"><path d="M3 13l10-6 9-2.500v6l-8 3v15L3 24z" fill="#fff" stroke="#222" stroke-width="1"/><path d="M3 13l10-6 9-2.500-8 5z" fill="#c8c8c8" stroke="#222" stroke-width=".8"/><path d="M14 9.500v19" stroke="#222" stroke-width=".8"/><path d="M18 15h13.500v14c-4 2.500-9.500 2.500-13.500 0z" fill="#b4cfe0" stroke="#222" stroke-width="1"/><path d="M2 24l12 6" stroke="#c88" stroke-width=".7"/><path d="M1.500 3l1.500 21" stroke="#88a" stroke-width=".6"/><path d="M14 29l20-13" stroke="#8b8" stroke-width=".6"/></svg>
<div style="left:1670.9px;top:916.3px;width:36.8px;height:37px;border:1px solid #c4c4c4;background:linear-gradient(#ffffff 0,#ffffff 45%,#ffffff 60%,#ffffff 100%);box-sizing:border-box"></div>
<svg class="i" style="left:1671.9px;top:917.3px" width="34.8" height="35" viewBox="0 0 34.8 35"><path d="M3 13l10-6 9-2.500v6l-8 3v15L3 24z" fill="#fff" stroke="#222" stroke-width="1"/><path d="M3 13l10-6 9-2.500-8 5z" fill="#c8c8c8" stroke="#222" stroke-width=".8"/><path d="M14 9.500v19" stroke="#222" stroke-width=".8"/><path d="M18 15h13.500v14c-4 2.500-9.500 2.500-13.500 0z" fill="#b4cfe0" stroke="#222" stroke-width="1"/><path d="M2 24l12 6" stroke="#c88" stroke-width=".7"/><path d="M1.500 3l1.500 21" stroke="#88a" stroke-width=".6"/><path d="M14 29l20-13" stroke="#8b8" stroke-width=".6"/></svg>
<div style="left:1709.7px;top:916.3px;width:36.8px;height:37px;border:1px solid #c4c4c4;background:linear-gradient(#dad8d0 0,#dad8d0 45%,#c8c2b0 60%,#c8c2b0 100%);box-sizing:border-box"></div>
<svg class="i" style="left:1710.7px;top:917.3px" width="34.8" height="35" viewBox="0 0 34.8 35"><path d="M3 13l10-6 9-2.500v6l-8 3v15L3 24z" fill="#fff" stroke="#222" stroke-width="1"/><path d="M3 13l10-6 9-2.500-8 5z" fill="#c8c8c8" stroke="#222" stroke-width=".8"/><path d="M14 9.500v19" stroke="#222" stroke-width=".8"/><path d="M18 15h13.500v14c-4 2.500-9.500 2.500-13.500 0z" fill="#b4cfe0" stroke="#222" stroke-width="1"/><path d="M2 24l12 6" stroke="#c88" stroke-width=".7"/><path d="M1.500 3l1.500 21" stroke="#88a" stroke-width=".6"/><path d="M14 29l20-13" stroke="#8b8" stroke-width=".6"/></svg>
<div style="left:1748.9px;top:916.3px;width:36.8px;height:37px;border:1px solid #c4c4c4;background:linear-gradient(#ffffff 0,#ffffff 45%,#ffffff 60%,#ffffff 100%);box-sizing:border-box"></div>
<svg class="i" style="left:1749.9px;top:917.3px" width="34.8" height="35" viewBox="0 0 34.8 35"><path d="M3 13l10-6 9-2.500v6l-8 3v15L3 24z" fill="none" stroke="#777" stroke-width="1"/><path d="M3 13l10-6 9-2.500-8 5z" fill="none" stroke="#777" stroke-width=".8"/><path d="M14 9.500v19" stroke="#777" stroke-width=".8"/><path d="M18 15h13.500v14c-4 2.500-9.500 2.500-13.500 0z" fill="none" stroke="#777" stroke-width="1"/><path d="M2 24l12 6" stroke="#c88" stroke-width=".7"/><path d="M1.500 3l1.500 21" stroke="#88a" stroke-width=".6"/><path d="M14 29l20-13" stroke="#8b8" stroke-width=".6"/><circle cx="30" cy="30.500" r="2.800" fill="#fff" stroke="#3a9a3a" stroke-width="1"/><circle cx="30" cy="30.500" r=".9" fill="#3a9a3a"/></svg>
<div style="left:1787.9px;top:916.3px;width:36.8px;height:37px;border:1px solid #c4c4c4;background:linear-gradient(#b8c4e0 0,#b8c4e0 45%,#a4b890 60%,#a4b890 100%);box-sizing:border-box"></div>
<svg class="i" style="left:1788.9px;top:917.3px" width="34.8" height="35" viewBox="0 0 34.8 35"><path d="M3 13l10-6 9-2.500v6l-8 3v15L3 24z" fill="#fff" stroke="#222" stroke-width="1"/><path d="M3 13l10-6 9-2.500-8 5z" fill="#c8c8c8" stroke="#222" stroke-width=".8"/><path d="M14 9.500v19" stroke="#222" stroke-width=".8"/><path d="M18 15h13.500v14c-4 2.500-9.500 2.500-13.500 0z" fill="#b4cfe0" stroke="#222" stroke-width="1"/><path d="M2 24l12 6" stroke="#c88" stroke-width=".7"/><path d="M1.500 3l1.500 21" stroke="#88a" stroke-width=".6"/><path d="M14 29l20-13" stroke="#8b8" stroke-width=".6"/></svg>
<div style="left:1827.1px;top:916.3px;width:36.8px;height:37px;border:1px solid #c4c4c4;background:linear-gradient(#ffffff 0,#ffffff 45%,#ffffff 60%,#ffffff 100%);box-sizing:border-box"></div>
<svg class="i" style="left:1828.1px;top:917.3px" width="34.8" height="35" viewBox="0 0 34.8 35"><path d="M3 13l10-6 9-2.500v6l-8 3v15L3 24z" fill="#fff" stroke="#222" stroke-width="1"/><path d="M3 13l10-6 9-2.500-8 5z" fill="#c8c8c8" stroke="#222" stroke-width=".8"/><path d="M14 9.500v19" stroke="#222" stroke-width=".8"/><path d="M18 15h13.500v14c-4 2.500-9.500 2.500-13.500 0z" fill="#b4cfe0" stroke="#222" stroke-width="1"/><path d="M2 24l12 6" stroke="#c88" stroke-width=".7"/><path d="M1.500 3l1.500 21" stroke="#88a" stroke-width=".6"/><path d="M14 29l20-13" stroke="#8b8" stroke-width=".6"/><circle cx="30" cy="30.500" r="2.800" fill="#fff" stroke="#3a9a3a" stroke-width="1"/><circle cx="30" cy="30.500" r=".9" fill="#3a9a3a"/></svg>
<div style="left:1866.4px;top:916.3px;width:36.8px;height:37px;border:1px solid #c4c4c4;background:linear-gradient(#ffffff 0,#ffffff 45%,#ffffff 60%,#ffffff 100%);box-sizing:border-box"></div>
<svg class="i" style="left:1867.4px;top:917.3px" width="34.8" height="35" viewBox="0 0 34.8 35"><path d="M3 13l10-6 9-2.500v6l-8 3v15L3 24z" fill="#fff" stroke="#222" stroke-width="1"/><path d="M3 13l10-6 9-2.500-8 5z" fill="#c8c8c8" stroke="#222" stroke-width=".8"/><path d="M14 9.500v19" stroke="#222" stroke-width=".8"/><path d="M18 15h13.500v14c-4 2.500-9.500 2.500-13.500 0z" fill="#b4cfe0" stroke="#222" stroke-width="1"/><path d="M2 24l12 6" stroke="#c88" stroke-width=".7"/><path d="M1.500 3l1.500 21" stroke="#88a" stroke-width=".6"/><path d="M14 29l20-13" stroke="#8b8" stroke-width=".6"/><circle cx="30" cy="30.500" r="2.800" fill="#fff" stroke="#3a9a3a" stroke-width="1"/><circle cx="30" cy="30.500" r=".9" fill="#3a9a3a"/></svg>
<div style="left:1592.9px;top:955.6px;width:36.8px;height:37px;border:1px solid #c4c4c4;background:linear-gradient(#8cc0e8 0,#8cc0e8 45%,#8cb47c 60%,#8cb47c 100%);box-sizing:border-box"></div>
<svg class="i" style="left:1593.9px;top:956.6px" width="34.8" height="35" viewBox="0 0 34.8 35"><path d="M3 13l10-6 9-2.500v6l-8 3v15L3 24z" fill="#fff" stroke="#222" stroke-width="1"/><path d="M3 13l10-6 9-2.500-8 5z" fill="#c8c8c8" stroke="#222" stroke-width=".8"/><path d="M14 9.500v19" stroke="#222" stroke-width=".8"/><path d="M18 15h13.500v14c-4 2.500-9.500 2.500-13.500 0z" fill="#b4cfe0" stroke="#222" stroke-width="1"/><path d="M2 24l12 6" stroke="#c88" stroke-width=".7"/><path d="M1.500 3l1.500 21" stroke="#88a" stroke-width=".6"/><path d="M14 29l20-13" stroke="#8b8" stroke-width=".6"/></svg>
<div style="left:1631.6px;top:955.6px;width:36.8px;height:37px;border:1px solid #c4c4c4;background:linear-gradient(#8cc0e8 0,#8cc0e8 45%,#c0c0c0 60%,#c0c0c0 100%);box-sizing:border-box"></div>
<svg class="i" style="left:1632.6px;top:956.6px" width="34.8" height="35" viewBox="0 0 34.8 35"><path d="M3 13l10-6 9-2.500v6l-8 3v15L3 24z" fill="#fff" stroke="#222" stroke-width="1"/><path d="M3 13l10-6 9-2.500-8 5z" fill="#c8c8c8" stroke="#222" stroke-width=".8"/><path d="M14 9.500v19" stroke="#222" stroke-width=".8"/><path d="M18 15h13.500v14c-4 2.500-9.500 2.500-13.500 0z" fill="#b4cfe0" stroke="#222" stroke-width="1"/><path d="M2 24l12 6" stroke="#c88" stroke-width=".7"/><path d="M1.500 3l1.500 21" stroke="#88a" stroke-width=".6"/><path d="M14 29l20-13" stroke="#8b8" stroke-width=".6"/></svg>
<div style="left:1670.9px;top:955.6px;width:36.8px;height:37px;border:1px solid #c4c4c4;background:linear-gradient(#ffffff 0,#ffffff 45%,#ffffff 60%,#ffffff 100%);box-sizing:border-box"></div>
<svg class="i" style="left:1671.9px;top:956.6px" width="34.8" height="35" viewBox="0 0 34.8 35"><path d="M3 13l10-6 9-2.500v6l-8 3v15L3 24z" fill="none" stroke="#777" stroke-width="1"/><path d="M3 13l10-6 9-2.500-8 5z" fill="none" stroke="#777" stroke-width=".8"/><path d="M14 9.500v19" stroke="#777" stroke-width=".8"/><path d="M18 15h13.500v14c-4 2.500-9.500 2.500-13.500 0z" fill="none" stroke="#777" stroke-width="1"/><path d="M2 24l12 6" stroke="#c88" stroke-width=".7"/><path d="M1.500 3l1.500 21" stroke="#88a" stroke-width=".6"/><path d="M14 29l20-13" stroke="#8b8" stroke-width=".6"/><circle cx="30" cy="30.500" r="2.800" fill="#fff" stroke="#3a9a3a" stroke-width="1"/><circle cx="30" cy="30.500" r=".9" fill="#3a9a3a"/></svg>
<div style="left:1709.7px;top:955.6px;width:36.8px;height:37px;border:1px solid #c4c4c4;background:linear-gradient(#d8d6d4 0,#d8d6d4 45%,#d0cecc 60%,#d0cecc 100%);box-sizing:border-box"></div>
<svg class="i" style="left:1710.7px;top:956.6px" width="34.8" height="35" viewBox="0 0 34.8 35"><path d="M3 13l10-6 9-2.500v6l-8 3v15L3 24z" fill="#fff" stroke="#222" stroke-width="1"/><path d="M3 13l10-6 9-2.500-8 5z" fill="#c8c8c8" stroke="#222" stroke-width=".8"/><path d="M14 9.500v19" stroke="#222" stroke-width=".8"/><path d="M18 15h13.500v14c-4 2.500-9.500 2.500-13.500 0z" fill="#b4cfe0" stroke="#222" stroke-width="1"/><path d="M2 24l12 6" stroke="#c88" stroke-width=".7"/><path d="M1.500 3l1.500 21" stroke="#88a" stroke-width=".6"/><path d="M14 29l20-13" stroke="#8b8" stroke-width=".6"/></svg>
<div style="left:1748.9px;top:955.6px;width:36.8px;height:37px;border:1px solid #c4c4c4;background:linear-gradient(#ffffff 0,#ffffff 45%,#f4f4f4 60%,#f4f4f4 100%);box-sizing:border-box"></div>
<svg class="i" style="left:1749.9px;top:956.6px" width="34.8" height="35" viewBox="0 0 34.8 35"><path d="M3 13l10-6 9-2.500v6l-8 3v15L3 24z" fill="#fff" stroke="#222" stroke-width="1"/><path d="M3 13l10-6 9-2.500-8 5z" fill="#c8c8c8" stroke="#222" stroke-width=".8"/><path d="M14 9.500v19" stroke="#222" stroke-width=".8"/><path d="M18 15h13.500v14c-4 2.500-9.500 2.500-13.500 0z" fill="#b4cfe0" stroke="#222" stroke-width="1"/><path d="M2 24l12 6" stroke="#c88" stroke-width=".7"/><path d="M1.500 3l1.500 21" stroke="#88a" stroke-width=".6"/><path d="M14 29l20-13" stroke="#8b8" stroke-width=".6"/><circle cx="30" cy="30.500" r="2.800" fill="#fff" stroke="#3a9a3a" stroke-width="1"/><circle cx="30" cy="30.500" r=".9" fill="#3a9a3a"/></svg>
<div style="left:1906px;top:771px;width:14px;height:32px;background:#fafafa;border:1px solid #d0d0d0;box-sizing:border-box;border-radius:2px 0 0 2px"></div>
<svg class="i" style="left:1909px;top:780px" width="10" height="16" viewBox="0 0 10 16"><path d="M8.500 1L2.500 8l6 7" fill="none" stroke="#2a8ac8" stroke-width="3"/></svg>
<div style="left:1905px;top:770px;width:6px;height:2px;background:#222"></div>
<div style="left:1583.3px;top:998.4px;width:337px;height:17px;background:#f1f1f1"></div>
<div style="left:1690px;top:1004px;width:1px;height:10px;background:#888"></div>
<span style="left:1698.50px;top:1005.88px;font-size:10.3px;line-height:10.3px;color:#111;letter-spacing:-0.343px;">Measurements</span>
<div style="left:1770px;top:1001.5px;width:150px;height:14px;background:#fff;border-left:1px solid #ddd;border-top:1px solid #ddd"></div>
</div></body></html>
